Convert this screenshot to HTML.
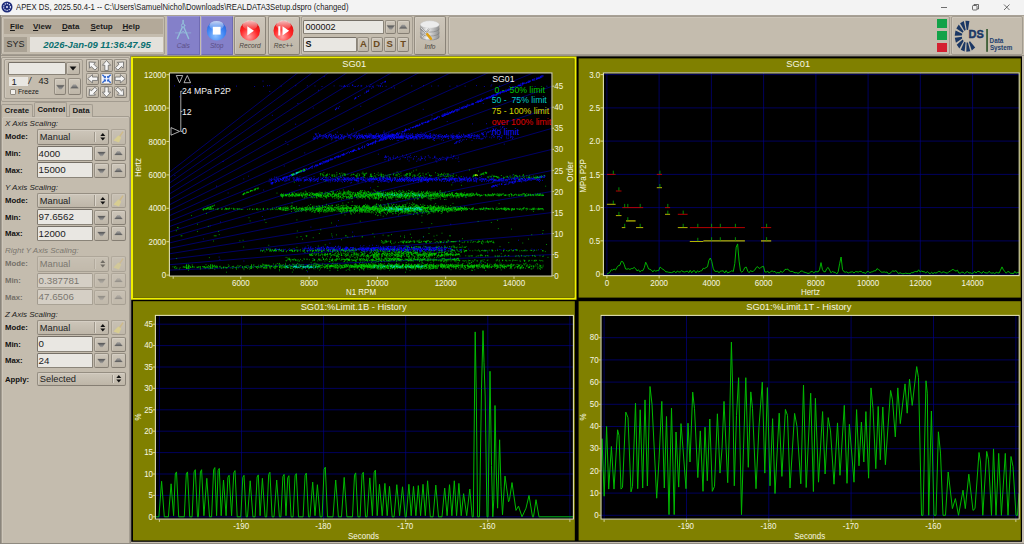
<!DOCTYPE html><html><head><meta charset="utf-8"><title>APEX DS</title><style>
*{box-sizing:border-box;margin:0;padding:0}
html,body{width:1024px;height:544px;overflow:hidden;background:#c4bcae;font-family:"Liberation Sans", Arial, sans-serif;}
.a{position:absolute;white-space:nowrap}
.btn{position:absolute;background:linear-gradient(#cdc6ba,#beb6a8);border:1px solid #958e82;border-bottom-color:#857e73;border-right-color:#8a8378;border-radius:2px;box-shadow:inset 0.5px 0.5px 0 #ddd7cd}
.fld{position:absolute;background:#e9e7e2;border:1px solid #8a8479;border-top-color:#767067;border-left-color:#7c766c;border-radius:1.5px;font-size:9.75px;color:#222;padding-left:0.6px;white-space:nowrap;overflow:hidden}
.grp{position:absolute;border:1px solid #a39c90;border-radius:2px;box-shadow:inset 0.5px 0.5px 0 #d8d2c8}
.lb{position:absolute;font-weight:bold;font-size:7.75px;color:#111;white-space:nowrap}
.hd{position:absolute;font-style:italic;font-size:8px;color:#222;white-space:nowrap}
.dis{opacity:.46}
.tl{position:absolute;font-style:italic;font-size:6.6px;color:#4a4640;text-align:center;white-space:nowrap}
</style></head><body>
<div class="a" style="left:0;top:0;width:1024px;height:15px;background:#f3f3f3"></div>
<svg class="a" style="left:0.8px;top:1px" width="12" height="12" viewBox="0 0 12 12"><circle cx="6" cy="6" r="5.5" fill="#1c2a78"/><circle cx="6" cy="6" r="3.4" fill="none" stroke="#e8ecff" stroke-width="1.1" stroke-dasharray="1.3 0.9"/><circle cx="6" cy="6" r="1" fill="#e8ecff"/></svg>
<div class="a" id="ttl" style="left:15.7px;top:2.4px;font-size:8.4px;color:#1a1a1a;transform:scaleX(0.92);transform-origin:0 0">APEX DS, 2025.50.4-1 -- C:\Users\SamuelNichol\Downloads\REALDATA3Setup.dspro (changed)</div>
<svg class="a" style="left:930px;top:0" width="94" height="15" viewBox="0 0 94 15"><g stroke="#333" stroke-width="0.7" fill="none"><path d="M11 7.5h6"/><rect x="42.5" y="5.5" width="4.5" height="4.5" rx="0.8"/><path d="M44 5.5v-1h4.5v4.5h-1.3"/><path d="M74 4.5l5.5 5.5M79.5 4.5l-5.5 5.5"/></g></svg>
<div class="a" style="left:0;top:15px;width:1024px;height:41px;background:#c4bcae;border-top:1px solid #a8a196;border-bottom:1px solid #9a9388"></div>
<div class="grp" style="left:1px;top:16px;width:164px;height:39px"></div>
<div class="a" style="left:4px;top:19px;width:159px;height:15px;background:#b3a999"></div>
<div class="lb" style="left:10px;top:22px;font-size:8px;color:#1a1a1a"><u>F</u>ile</div>
<div class="lb" style="left:33px;top:22px;font-size:8px;color:#1a1a1a"><u>V</u>iew</div>
<div class="lb" style="left:62px;top:22px;font-size:8px;color:#1a1a1a"><u>D</u>ata</div>
<div class="lb" style="left:90.5px;top:22px;font-size:8px;color:#1a1a1a"><u>S</u>etup</div>
<div class="lb" style="left:122.5px;top:22px;font-size:8px;color:#1a1a1a"><u>H</u>elp</div>
<div class="a" style="left:4px;top:37px;width:23px;height:15px;background:#aaa294;font-size:9px;color:#222;text-align:center;line-height:15px">SYS</div>
<div class="a" style="left:30px;top:37px;width:133px;height:15px;background:#e4e1db;font-size:9.5px;font-weight:bold;font-style:italic;color:#0a7070;line-height:15px;padding-left:13.3px">2026-Jan-09 11:36:47.95</div>
<div class="btn" style="left:167px;top:16px;width:32.5px;height:39px;background:#8480c9;border-color:#9793d4 #6f6bb2 #6f6bb2 #9793d4;border-radius:1px;box-shadow:none"></div>
<div class="tl" style="left:167px;top:41.9px;width:32.5px;color:#5b4f86">Cals</div>
<div class="btn" style="left:200.5px;top:16px;width:32.5px;height:39px;background:#8480c9;border-color:#9793d4 #6f6bb2 #6f6bb2 #9793d4;border-radius:1px;box-shadow:none"></div>
<div class="tl" style="left:200.5px;top:41.9px;width:32.5px;color:#5b4f86">Stop</div>
<div class="btn" style="left:234px;top:16px;width:32px;height:39px;"></div>
<div class="tl" style="left:234px;top:42.3px;width:32px;">Record</div>
<div class="btn" style="left:267.5px;top:16px;width:32px;height:39px;"></div>
<div class="tl" style="left:267.5px;top:42.3px;width:32px;">Rec++</div>
<svg class="a" style="left:167px;top:16px" width="134" height="30" viewBox="167 16 134 30">
<defs>
<radialGradient id="gb" cx="0.45" cy="0.75" r="0.8"><stop offset="0" stop-color="#8cc0ff"/><stop offset="0.55" stop-color="#3f86f4"/><stop offset="1" stop-color="#2258d0"/></radialGradient>
<radialGradient id="gr" cx="0.45" cy="0.8" r="0.8"><stop offset="0" stop-color="#ffa0a0"/><stop offset="0.55" stop-color="#ff2828"/><stop offset="1" stop-color="#dc0808"/></radialGradient>
<linearGradient id="gl" x1="0" y1="0" x2="0" y2="1"><stop offset="0" stop-color="#fff" stop-opacity="0.75"/><stop offset="1" stop-color="#fff" stop-opacity="0.05"/></linearGradient>
</defs>
<g fill="none" stroke="#93c0da" stroke-width="1.35" stroke-linecap="round"><path d="M183.1 20.6v3" stroke-width="1.5"/><circle cx="183.1" cy="25.5" r="1.7" stroke-width="1"/><path d="M182.3 27.2l-4.9 11.4M183.9 27.2l4.7 11.4"/><path d="M175.5 32.9h15.3" stroke-width="0.6"/><path d="M181.3 33.2l1.8-2.2 1.8 2.2" stroke-width="0.7"/></g>
<circle cx="216.6" cy="30.8" r="9.8" fill="url(#gb)"/><ellipse cx="216.6" cy="25.5" rx="7.2" ry="4.6" fill="url(#gl)"/><rect x="212.8" y="26.8" width="7.8" height="7.8" fill="#fff"/>
<circle cx="250" cy="30.8" r="10" fill="url(#gr)"/><ellipse cx="250" cy="25.3" rx="7.4" ry="4.7" fill="url(#gl)"/><path d="M247.3 26.2v9.2l6.6-4.6z" fill="#fff"/>
<circle cx="283.5" cy="30.8" r="10" fill="url(#gr)"/><ellipse cx="283.5" cy="25.3" rx="7.4" ry="4.7" fill="url(#gl)"/><path d="M278.3 26.2h2v9.2h-2zM282.5 26.2v9.2l6.6-4.6z" fill="#fff"/>
</svg>
<div class="grp" style="left:300.5px;top:16px;width:112px;height:39px"></div>
<div class="fld" style="left:303px;top:19.5px;width:80.5px;height:14px;line-height:12px;font-size:9px;color:#111;padding-left:1.4px">000002</div>
<div class="fld" style="left:303px;top:37px;width:53.5px;height:14.5px;line-height:12.5px;font-size:9px;font-weight:bold;color:#111;padding-left:1.6px">S</div>
<svg width="0" height="0" style="position:absolute"><defs><linearGradient id="gd" x1="0" y1="0" x2="0" y2="1"><stop offset="0" stop-color="#505050"/><stop offset="1" stop-color="#9a9a9a"/></linearGradient><linearGradient id="gu" x1="0" y1="0" x2="0" y2="1"><stop offset="0" stop-color="#a2a2a2"/><stop offset="1" stop-color="#565656"/></linearGradient></defs></svg>
<div class="btn" style="left:384.5px;top:19.5px;width:11.5px;height:14px"><svg width="11.5" height="14" style="position:absolute;left:-1px;top:-1px"><polygon points="1.85,5.4 9.65,5.4 6.85,9.3 4.65,9.3" fill="url(#gd)" stroke="#777" stroke-width="0.25" stroke-linejoin="round"/></svg></div>
<div class="btn" style="left:397px;top:19.5px;width:12.5px;height:14px"><svg width="12.5" height="14" style="position:absolute;left:-1px;top:-1px"><polygon points="2.35,8.5 10.15,8.5 7.55,5.0 4.95,5.0" fill="url(#gu)" stroke="#777" stroke-width="0.25" stroke-linejoin="round"/></svg></div>
<div class="btn" style="left:357.3px;top:37px;width:12.2px;height:14.5px;font-size:9.5px;font-weight:bold;color:#6b4a1e;text-align:center;line-height:12.5px">A</div>
<div class="btn" style="left:370.5px;top:37px;width:12.2px;height:14.5px;font-size:9.5px;font-weight:bold;color:#6b4a1e;text-align:center;line-height:12.5px">D</div>
<div class="btn" style="left:383.7px;top:37px;width:12.2px;height:14.5px;font-size:9.5px;font-weight:bold;color:#6b4a1e;text-align:center;line-height:12.5px">S</div>
<div class="btn" style="left:397px;top:37px;width:12.2px;height:14.5px;font-size:9.5px;font-weight:bold;color:#6b4a1e;text-align:center;line-height:12.5px">T</div>
<div class="btn" style="left:414px;top:16px;width:32px;height:39px"></div>
<div class="tl" style="left:414px;top:42.5px;width:32px">Info</div>
<svg class="a" style="left:418px;top:18px" width="24" height="26" viewBox="418 18 24 26">
<defs><linearGradient id="cy" x1="0" y1="0" x2="1" y2="0"><stop offset="0" stop-color="#9a9a9a"/><stop offset="0.35" stop-color="#f2f2f2"/><stop offset="1" stop-color="#8c8c8c"/></linearGradient></defs>
<path d="M420.3 24.5v12.5a9.5 3.6 0 0 0 19 0v-12.5z" fill="url(#cy)"/>
<g fill="none" stroke="#777" stroke-width="0.5"><path d="M420.3 28.5a9.5 3.6 0 0 0 19 0M420.3 32.5a9.5 3.6 0 0 0 19 0M420.3 36.5a9.5 3.6 0 0 0 19 0"/></g>
<ellipse cx="429.8" cy="24.5" rx="9.5" ry="3.7" fill="#ececec" stroke="#c8c8c8" stroke-width="0.4"/>
<path d="M421 28l9 9M422 37l7-8" stroke="#8b8b8b" stroke-width="1.6"/><path d="M421 28l9 9M422 37l7-8" stroke="#e8e8e8" stroke-width="0.8"/>
<path d="M427.3 34.2l3.6 4.6" stroke="#e0a010" stroke-width="2.6" stroke-linecap="round"/>
</svg>
<div class="grp" style="left:447.5px;top:16px;width:502.2px;height:39px"></div>
<div class="a" style="left:937.2px;top:18.9px;width:9.9px;height:9.2px;background:#12a248"></div>
<div class="a" style="left:937.2px;top:30.6px;width:9.9px;height:9.2px;background:#12a248"></div>
<div class="a" style="left:937.2px;top:42.5px;width:9.9px;height:9.2px;background:#d42030"></div>
<div class="grp" style="left:950.7px;top:16px;width:72px;height:39px"></div>
<svg class="a" style="left:952px;top:17px" width="70" height="37" viewBox="952 17 70 37"><polygon fill="#1b3764" points="968.0,30.0 969.4,20.9 965.4,20.7 966.6,29.8"/><polygon fill="#1b3764" points="965.7,30.0 963.8,21.1 960.1,23.3 964.4,30.7"/><polygon fill="#1b3764" points="963.6,31.4 958.8,24.6 956.3,28.6 962.7,32.7"/><polygon fill="#1b3764" points="962.3,33.8 955.5,30.6 954.7,35.7 961.9,35.5"/><polygon fill="#1b3764" points="961.9,36.8 954.8,37.8 955.9,42.8 962.2,38.5"/><polygon fill="#1b3764" points="962.7,39.6 956.7,44.7 959.4,48.5 963.6,41.0"/><polygon fill="#1b3764" points="964.3,41.7 960.8,49.7 964.6,51.5 965.6,42.4"/><polygon fill="#1b3764" points="966.6,42.6 966.3,51.8 970.3,51.2 967.9,42.5"/><polygon fill="#1b3764" points="968.9,42.1 971.8,50.5 975.2,47.6 970.0,41.2"/><text x="968.6" y="38.4" font-size="10.9" font-weight="bold" fill="#1b3764" stroke="#1b3764" stroke-width="0.45">DS</text><rect x="986.2" y="29" width="1.7" height="22.8" fill="#35582f"/><text x="989.6" y="42.6" font-size="6.3" font-weight="bold" fill="#22406e">Data</text><text x="989.9" y="50.3" font-size="6.3" font-weight="bold" fill="#22406e">System</text></svg>
<div class="grp" style="left:1px;top:56.5px;width:128.5px;height:45px"></div>
<div class="grp" style="left:3.5px;top:59px;width:79px;height:39.5px"></div>
<div class="fld" style="left:7.5px;top:62px;width:58.5px;height:12.5px"></div>
<div class="btn" style="left:65.5px;top:62px;width:14px;height:12.5px"><svg width="14" height="12.5" style="position:absolute;left:-1px;top:-1px"><polygon points="3.6,4.6 10.4,4.6 7,8.6" fill="#111"/></svg></div>
<div class="a" style="left:9px;top:77px;width:18.5px;height:8.5px;background:#e9e7e2;font-size:9.5px;line-height:9px;color:#222;padding-left:2.5px">1</div>
<div class="a" style="left:28.5px;top:76px;font-size:9px;font-style:italic;color:#222">/</div>
<div class="a" style="left:38.5px;top:76.2px;font-size:9.2px;color:#222">43</div>
<div class="a" style="left:9.8px;top:88.6px;width:6.2px;height:6.2px;background:#f2f0ec;border:0.6px solid #8f897e;border-radius:1px"></div>
<div class="a" style="left:18px;top:87.8px;font-size:6.7px;color:#222">Freeze</div>
<div class="btn" style="left:53.6px;top:77.9px;width:12.8px;height:17.5px"><svg width="12.8" height="17.5" style="position:absolute;left:-1px;top:-1px"><polygon points="2.5000000000000004,7.15 10.3,7.15 7.5,11.05 5.300000000000001,11.05" fill="url(#gd)" stroke="#777" stroke-width="0.25" stroke-linejoin="round"/></svg></div>
<div class="btn" style="left:67.5px;top:77.9px;width:13px;height:17.5px"><svg width="13" height="17.5" style="position:absolute;left:-1px;top:-1px"><polygon points="2.6,10.25 10.4,10.25 7.8,6.75 5.2,6.75" fill="url(#gu)" stroke="#777" stroke-width="0.25" stroke-linejoin="round"/></svg></div>
<div class="btn" style="left:86.2px;top:59.2px;width:12.9px;height:12.5px"></div>
<div class="btn" style="left:100.1px;top:59.2px;width:12.9px;height:12.5px"></div>
<div class="btn" style="left:113.7px;top:59.2px;width:12.9px;height:12.5px"></div>
<div class="btn" style="left:86.2px;top:72.5px;width:12.9px;height:12.5px"></div>
<div class="btn" style="left:100.1px;top:72.5px;width:12.9px;height:12.5px"></div>
<div class="btn" style="left:113.7px;top:72.5px;width:12.9px;height:12.5px"></div>
<div class="btn" style="left:86.2px;top:85.7px;width:12.9px;height:12.5px"></div>
<div class="btn" style="left:100.1px;top:85.7px;width:12.9px;height:12.5px"></div>
<div class="btn" style="left:113.7px;top:85.7px;width:12.9px;height:12.5px"></div>
<svg class="a" style="left:0;top:0" width="130" height="102" viewBox="0 0 130 102"><g transform="translate(92.65 65.45) rotate(-135.0)"><path d="M-4.9 -1.7H0.2V-4.1L4.9 0L0.2 4.1V1.7H-4.9z" fill="#f6f6f6" stroke="#5c5c5c" stroke-width="0.7" stroke-linejoin="round"/></g><g transform="translate(106.55 65.45) rotate(-90.0)"><path d="M-5.0 -1.7H0.2V-4.1L5.0 0L0.2 4.1V1.7H-5.0z" fill="#f6f6f6" stroke="#5c5c5c" stroke-width="0.7" stroke-linejoin="round"/></g><g transform="translate(120.15 65.45) rotate(-45.0)"><path d="M-4.9 -1.7H0.2V-4.1L4.9 0L0.2 4.1V1.7H-4.9z" fill="#f6f6f6" stroke="#5c5c5c" stroke-width="0.7" stroke-linejoin="round"/></g><g transform="translate(92.65 78.75) rotate(180.0)"><path d="M-5.0 -1.7H0.2V-4.1L5.0 0L0.2 4.1V1.7H-5.0z" fill="#f6f6f6" stroke="#5c5c5c" stroke-width="0.7" stroke-linejoin="round"/></g><rect x="101.95" y="74.35" width="9.2" height="8.8" fill="#f4f6ff"/><path d="M102.35 74.75L105.35 77.55" stroke="#2b62c8" stroke-width="1.3"/><path d="M105.55 75.95v1.8h-1.8" fill="none" stroke="#2b62c8" stroke-width="0.9"/><path d="M102.35 82.75L105.35 79.95" stroke="#2b62c8" stroke-width="1.3"/><path d="M105.55 81.55v-1.8h-1.8" fill="none" stroke="#2b62c8" stroke-width="0.9"/><path d="M110.75 74.75L107.75 77.55" stroke="#2b62c8" stroke-width="1.3"/><path d="M107.55 75.95v1.8h1.8" fill="none" stroke="#2b62c8" stroke-width="0.9"/><path d="M110.75 82.75L107.75 79.95" stroke="#2b62c8" stroke-width="1.3"/><path d="M107.55 81.55v-1.8h1.8" fill="none" stroke="#2b62c8" stroke-width="0.9"/><g transform="translate(120.15 78.75) rotate(0.0)"><path d="M-5.0 -1.7H0.2V-4.1L5.0 0L0.2 4.1V1.7H-5.0z" fill="#f6f6f6" stroke="#5c5c5c" stroke-width="0.7" stroke-linejoin="round"/></g><g transform="translate(92.65 91.95) rotate(135.0)"><path d="M-4.9 -1.7H0.2V-4.1L4.9 0L0.2 4.1V1.7H-4.9z" fill="#f6f6f6" stroke="#5c5c5c" stroke-width="0.7" stroke-linejoin="round"/></g><g transform="translate(106.55 91.95) rotate(90.0)"><path d="M-5.0 -1.7H0.2V-4.1L5.0 0L0.2 4.1V1.7H-5.0z" fill="#f6f6f6" stroke="#5c5c5c" stroke-width="0.7" stroke-linejoin="round"/></g><g transform="translate(120.15 91.95) rotate(45.0)"><path d="M-4.9 -1.7H0.2V-4.1L4.9 0L0.2 4.1V1.7H-4.9z" fill="#f6f6f6" stroke="#5c5c5c" stroke-width="0.7" stroke-linejoin="round"/></g></svg>
<div class="a" style="left:1px;top:116px;width:128.5px;height:430px;border:1px solid #a39c90;border-radius:2px;box-shadow:inset 0.5px 0.5px 0 #d8d2c8"></div>
<div class="a" style="left:1px;top:103.5px;width:31.5px;height:13px;border:1px solid #a39c90;border-bottom:none;border-radius:2px 2px 0 0;background:#c4bcae;font-size:7.9px;font-weight:bold;color:#1a1a1a;line-height:11.5px;padding-left:2.5px">Create</div>
<div class="a" style="left:68.5px;top:103.5px;width:24.5px;height:13px;border:1px solid #a39c90;border-bottom:none;border-radius:2px 2px 0 0;background:#c4bcae;font-size:7.9px;font-weight:bold;color:#1a1a1a;line-height:11.5px;padding-left:3px">Data</div>
<div class="a" style="left:33.8px;top:102px;width:33.5px;height:15.2px;border:1px solid #a39c90;border-bottom:none;border-radius:2px 2px 0 0;background:#c4bcae;font-size:7.75px;font-weight:bold;color:#111;line-height:13.5px;padding-left:2.7px">Control</div>
<div class="hd" style="left:5px;top:119px">X Axis Scaling:</div>
<div class="lb" style="left:5px;top:132.2px">Mode:</div>
<div class="btn" style="left:37px;top:129px;width:72px;height:15.5px;font-size:9.3px;color:#222;line-height:15px;padding-left:1.8px">Manual<div style="position:absolute;left:56.3px;top:1.5px;width:0;height:10.5px;border-left:0.6px solid #9d968a;border-right:0.6px solid #ddd7cd"></div><svg width="8" height="10" style="position:absolute;left:60.5px;top:2px"><polygon points="1.3,4 6.3,4 3.8,1" fill="#111"/><polygon points="1.3,5.6 6.3,5.6 3.8,8.6" fill="#111"/></svg></div>
<div class="btn" style="left:110.5px;top:129px;width:15px;height:15.5px;opacity:0.55"><svg width="15" height="15.5" style="position:absolute;left:-1px;top:-1px"><path d="M11.4 2.2l1.2 0.8-3.6 5.2-1.2-0.8z" fill="#d9b96a"/><path d="M7.3 6.4l2.9 2-2.2 5-5.6-2z" fill="#e9dc7a"/></svg></div>
<div class="lb" style="left:5px;top:149.0px">Min:</div>
<div class="fld" style="left:37px;top:145.6px;width:56px;height:15.6px;line-height:14px">4000</div>
<div class="btn" style="left:94px;top:146.0px;width:15px;height:15px"><svg width="15" height="15" style="position:absolute;left:-1px;top:-1px"><polygon points="3.6,5.9 11.4,5.9 8.6,9.8 6.4,9.8" fill="url(#gd)" stroke="#777" stroke-width="0.25" stroke-linejoin="round"/></svg></div>
<div class="btn" style="left:110.5px;top:146.0px;width:15px;height:15px"><svg width="15" height="15" style="position:absolute;left:-1px;top:-1px"><polygon points="3.6,9.0 11.4,9.0 8.8,5.5 6.2,5.5" fill="url(#gu)" stroke="#777" stroke-width="0.25" stroke-linejoin="round"/></svg></div>
<div class="lb" style="left:5px;top:165.6px">Max:</div>
<div class="fld" style="left:37px;top:162.2px;width:56px;height:15.6px;line-height:14px">15000</div>
<div class="btn" style="left:94px;top:162.6px;width:15px;height:15px"><svg width="15" height="15" style="position:absolute;left:-1px;top:-1px"><polygon points="3.6,5.9 11.4,5.9 8.6,9.8 6.4,9.8" fill="url(#gd)" stroke="#777" stroke-width="0.25" stroke-linejoin="round"/></svg></div>
<div class="btn" style="left:110.5px;top:162.6px;width:15px;height:15px"><svg width="15" height="15" style="position:absolute;left:-1px;top:-1px"><polygon points="3.6,9.0 11.4,9.0 8.8,5.5 6.2,5.5" fill="url(#gu)" stroke="#777" stroke-width="0.25" stroke-linejoin="round"/></svg></div>
<div class="hd" style="left:5px;top:182.5px">Y Axis Scaling:</div>
<div class="lb" style="left:5px;top:195.7px">Mode:</div>
<div class="btn" style="left:37px;top:192.5px;width:72px;height:15.5px;font-size:9.3px;color:#222;line-height:15px;padding-left:1.8px">Manual<div style="position:absolute;left:56.3px;top:1.5px;width:0;height:10.5px;border-left:0.6px solid #9d968a;border-right:0.6px solid #ddd7cd"></div><svg width="8" height="10" style="position:absolute;left:60.5px;top:2px"><polygon points="1.3,4 6.3,4 3.8,1" fill="#111"/><polygon points="1.3,5.6 6.3,5.6 3.8,8.6" fill="#111"/></svg></div>
<div class="btn" style="left:110.5px;top:192.5px;width:15px;height:15.5px;opacity:0.55"><svg width="15" height="15.5" style="position:absolute;left:-1px;top:-1px"><path d="M11.4 2.2l1.2 0.8-3.6 5.2-1.2-0.8z" fill="#d9b96a"/><path d="M7.3 6.4l2.9 2-2.2 5-5.6-2z" fill="#e9dc7a"/></svg></div>
<div class="lb" style="left:5px;top:212.5px">Min:</div>
<div class="fld" style="left:37px;top:209.1px;width:56px;height:15.6px;line-height:14px">97.6562</div>
<div class="btn" style="left:94px;top:209.5px;width:15px;height:15px"><svg width="15" height="15" style="position:absolute;left:-1px;top:-1px"><polygon points="3.6,5.9 11.4,5.9 8.6,9.8 6.4,9.8" fill="url(#gd)" stroke="#777" stroke-width="0.25" stroke-linejoin="round"/></svg></div>
<div class="btn" style="left:110.5px;top:209.5px;width:15px;height:15px"><svg width="15" height="15" style="position:absolute;left:-1px;top:-1px"><polygon points="3.6,9.0 11.4,9.0 8.8,5.5 6.2,5.5" fill="url(#gu)" stroke="#777" stroke-width="0.25" stroke-linejoin="round"/></svg></div>
<div class="lb" style="left:5px;top:229.1px">Max:</div>
<div class="fld" style="left:37px;top:225.7px;width:56px;height:15.6px;line-height:14px">12000</div>
<div class="btn" style="left:94px;top:226.1px;width:15px;height:15px"><svg width="15" height="15" style="position:absolute;left:-1px;top:-1px"><polygon points="3.6,5.9 11.4,5.9 8.6,9.8 6.4,9.8" fill="url(#gd)" stroke="#777" stroke-width="0.25" stroke-linejoin="round"/></svg></div>
<div class="btn" style="left:110.5px;top:226.1px;width:15px;height:15px"><svg width="15" height="15" style="position:absolute;left:-1px;top:-1px"><polygon points="3.6,9.0 11.4,9.0 8.8,5.5 6.2,5.5" fill="url(#gu)" stroke="#777" stroke-width="0.25" stroke-linejoin="round"/></svg></div>
<div class="hd dis" style="left:5px;top:246px">Right Y Axis Scaling:</div>
<div class="lb dis" style="left:5px;top:259.2px">Mode:</div>
<div class="btn dis" style="left:37px;top:256px;width:72px;height:15.5px;font-size:9.3px;color:#222;line-height:15px;padding-left:1.8px">Manual<div style="position:absolute;left:56.3px;top:1.5px;width:0;height:10.5px;border-left:0.6px solid #9d968a;border-right:0.6px solid #ddd7cd"></div><svg width="8" height="10" style="position:absolute;left:60.5px;top:2px"><polygon points="1.3,4 6.3,4 3.8,1" fill="#111"/><polygon points="1.3,5.6 6.3,5.6 3.8,8.6" fill="#111"/></svg></div>
<div class="btn dis" style="left:110.5px;top:256px;width:15px;height:15.5px;opacity:0.4"><svg width="15" height="15.5" style="position:absolute;left:-1px;top:-1px"><path d="M11.4 2.2l1.2 0.8-3.6 5.2-1.2-0.8z" fill="#d9b96a"/><path d="M7.3 6.4l2.9 2-2.2 5-5.6-2z" fill="#e9dc7a"/></svg></div>
<div class="lb dis" style="left:5px;top:276.0px">Min:</div>
<div class="fld dis" style="left:37px;top:272.6px;width:56px;height:15.6px;line-height:14px">0.387781</div>
<div class="btn dis" style="left:94px;top:273.0px;width:15px;height:15px"><svg width="15" height="15" style="position:absolute;left:-1px;top:-1px"><polygon points="3.6,5.9 11.4,5.9 8.6,9.8 6.4,9.8" fill="url(#gd)" stroke="#777" stroke-width="0.25" stroke-linejoin="round"/></svg></div>
<div class="btn dis" style="left:110.5px;top:273.0px;width:15px;height:15px"><svg width="15" height="15" style="position:absolute;left:-1px;top:-1px"><polygon points="3.6,9.0 11.4,9.0 8.8,5.5 6.2,5.5" fill="url(#gu)" stroke="#777" stroke-width="0.25" stroke-linejoin="round"/></svg></div>
<div class="lb dis" style="left:5px;top:292.6px">Max:</div>
<div class="fld dis" style="left:37px;top:289.20000000000005px;width:56px;height:15.6px;line-height:14px">47.6506</div>
<div class="btn dis" style="left:94px;top:289.6px;width:15px;height:15px"><svg width="15" height="15" style="position:absolute;left:-1px;top:-1px"><polygon points="3.6,5.9 11.4,5.9 8.6,9.8 6.4,9.8" fill="url(#gd)" stroke="#777" stroke-width="0.25" stroke-linejoin="round"/></svg></div>
<div class="btn dis" style="left:110.5px;top:289.6px;width:15px;height:15px"><svg width="15" height="15" style="position:absolute;left:-1px;top:-1px"><polygon points="3.6,9.0 11.4,9.0 8.8,5.5 6.2,5.5" fill="url(#gu)" stroke="#777" stroke-width="0.25" stroke-linejoin="round"/></svg></div>
<div class="hd" style="left:5px;top:309.5px">Z Axis Scaling:</div>
<div class="lb" style="left:5px;top:322.7px">Mode:</div>
<div class="btn" style="left:37px;top:319.5px;width:72px;height:15.5px;font-size:9.3px;color:#222;line-height:15px;padding-left:1.8px">Manual<div style="position:absolute;left:56.3px;top:1.5px;width:0;height:10.5px;border-left:0.6px solid #9d968a;border-right:0.6px solid #ddd7cd"></div><svg width="8" height="10" style="position:absolute;left:60.5px;top:2px"><polygon points="1.3,4 6.3,4 3.8,1" fill="#111"/><polygon points="1.3,5.6 6.3,5.6 3.8,8.6" fill="#111"/></svg></div>
<div class="btn" style="left:110.5px;top:319.5px;width:15px;height:15.5px;opacity:0.55"><svg width="15" height="15.5" style="position:absolute;left:-1px;top:-1px"><path d="M11.4 2.2l1.2 0.8-3.6 5.2-1.2-0.8z" fill="#d9b96a"/><path d="M7.3 6.4l2.9 2-2.2 5-5.6-2z" fill="#e9dc7a"/></svg></div>
<div class="lb" style="left:5px;top:339.5px">Min:</div>
<div class="fld" style="left:37px;top:336.1px;width:56px;height:15.6px;line-height:14px">0</div>
<div class="btn" style="left:94px;top:336.5px;width:15px;height:15px"><svg width="15" height="15" style="position:absolute;left:-1px;top:-1px"><polygon points="3.6,5.9 11.4,5.9 8.6,9.8 6.4,9.8" fill="url(#gd)" stroke="#777" stroke-width="0.25" stroke-linejoin="round"/></svg></div>
<div class="btn" style="left:110.5px;top:336.5px;width:15px;height:15px"><svg width="15" height="15" style="position:absolute;left:-1px;top:-1px"><polygon points="3.6,9.0 11.4,9.0 8.8,5.5 6.2,5.5" fill="url(#gu)" stroke="#777" stroke-width="0.25" stroke-linejoin="round"/></svg></div>
<div class="lb" style="left:5px;top:356.1px">Max:</div>
<div class="fld" style="left:37px;top:352.70000000000005px;width:56px;height:15.6px;line-height:14px">24</div>
<div class="btn" style="left:94px;top:353.1px;width:15px;height:15px"><svg width="15" height="15" style="position:absolute;left:-1px;top:-1px"><polygon points="3.6,5.9 11.4,5.9 8.6,9.8 6.4,9.8" fill="url(#gd)" stroke="#777" stroke-width="0.25" stroke-linejoin="round"/></svg></div>
<div class="btn" style="left:110.5px;top:353.1px;width:15px;height:15px"><svg width="15" height="15" style="position:absolute;left:-1px;top:-1px"><polygon points="3.6,9.0 11.4,9.0 8.8,5.5 6.2,5.5" fill="url(#gu)" stroke="#777" stroke-width="0.25" stroke-linejoin="round"/></svg></div>
<div class="lb" style="left:5px;top:375px">Apply:</div>
<div class="btn" style="left:37px;top:372px;width:88.5px;height:13.6px;font-size:9.3px;color:#222;line-height:12px;padding-left:1.8px">Selected<div style="position:absolute;left:74px;top:1.5px;width:0;height:8px;border-left:0.6px solid #9d968a;border-right:0.6px solid #ddd7cd"></div><svg width="8" height="10" style="position:absolute;left:77px;top:0.8px"><polygon points="1.3,4 6.3,4 3.8,1" fill="#111"/><polygon points="1.3,5.6 6.3,5.6 3.8,8.6" fill="#111"/></svg></div>
<div class="a" style="left:129.5px;top:56px;width:1px;height:488px;background:#8e877c"></div>
<div class="a" style="left:0;top:543.2px;width:1024px;height:1px;background:#8f8a80"></div>
<div class="a" style="left:0;top:15px;width:1px;height:529px;background:#8a857c"></div>
<svg class="a" style="left:0;top:0" width="1024" height="544" viewBox="0 0 1024 544" font-family='"Liberation Sans", Arial, sans-serif'><rect x="131.2" y="56.3" width="890.8" height="485.5" fill="#000"/><rect x="131" y="56.5" width="445.5" height="243.2" fill="#f0f000"/><rect x="133" y="58.5" width="441.5" height="239.2" fill="#3a3a00"/><rect x="133" y="58.5" width="440.9" height="238.6" fill="#808000"/><rect x="578.6" y="58.4" width="442.2" height="239.2" fill="#808000"/><rect x="133" y="301.2" width="441.8" height="239.3" fill="#808000"/><rect x="578.6" y="301.2" width="442.2" height="239.3" fill="#808000"/><rect x="169" y="72.5" width="383.4" height="204.0" fill="#000"/><rect x="603" y="72.5" width="416.6" height="203.5" fill="#000"/><rect x="155" y="315" width="418.79999999999995" height="204.5" fill="#000"/><rect x="600.6" y="315" width="419.0" height="204.5" fill="#000"/><clipPath id="c1"><rect x="169.8" y="73.3" width="381.79999999999995" height="202.4"/></clipPath><g clip-path="url(#c1)"><path d="M168.4 270.2L552.2 254.6M168.4 264.8L552.2 233.5M168.4 259.4L552.2 212.5M168.4 254.0L552.2 191.4M168.4 248.6L552.2 170.4M168.4 243.2L552.2 149.3M168.4 237.8L552.2 128.3M168.4 232.4L552.2 107.3M168.4 227.0L552.2 86.2M168.4 221.6L552.2 65.2M168.4 216.2L552.2 44.1M168.4 210.8L552.2 23.1M168.4 205.4L552.2 2.1M168.4 200.0L552.2 -19.0M168.4 194.6L552.2 -40.0M168.4 189.2L552.2 -61.1M168.4 183.8L552.2 -82.1M168.4 178.4L552.2 -103.2M168.4 173.0L552.2 -124.2" stroke="#0000ac" stroke-width="0.6" fill="none"/><path d="M382.0 249.6h.8M412.8 249.1h.8M383.8 248.9h.8M391.8 250.3h.8M433.6 250.0h.8M381.6 248.4h.8M337.6 247.8h.8M415.5 249.0h.8M385.3 249.3h.8M414.0 246.8h.8M332.6 247.3h.8M398.8 250.7h.8M386.6 249.4h.8M354.8 248.0h.8M330.6 249.5h.8M304.1 248.1h.8M401.6 250.6h.8M342.5 250.7h.8M437.6 249.1h.8M397.4 247.7h.8M438.9 249.0h.8M340.9 250.4h.8M439.6 247.8h.8M327.1 246.7h.8M326.7 250.7h.8M402.5 250.8h.8M384.3 250.0h.8M383.0 249.0h.8M307.6 245.4h.8M390.8 249.4h.8M308.9 250.0h.8M431.0 249.9h.8M318.8 248.0h.8M448.9 248.7h.8M407.0 248.8h.8M352.3 249.1h.8M387.1 247.9h.8M374.7 249.6h.8M391.0 249.4h.8M387.5 248.3h.8M392.2 248.9h.8M429.9 249.8h.8M367.0 248.8h.8M351.0 249.6h.8M448.6 248.9h.8M381.8 250.5h.8M416.2 248.6h.8M363.5 251.4h.8M345.8 248.8h.8M367.4 249.7h.8M427.6 249.5h.8M361.5 250.5h.8M321.0 249.1h.8M422.0 250.7h.8M331.6 247.7h.8M330.2 249.7h.8M401.2 248.3h.8M329.5 248.6h.8M380.4 249.3h.8M373.7 249.7h.8M406.6 249.2h.8M449.9 250.1h.8M432.7 249.5h.8M426.2 249.6h.8M331.7 248.9h.8M394.0 249.6h.8M381.5 248.9h.8M446.4 247.8h.8M364.4 250.2h.8M378.4 248.1h.8M388.2 246.3h.8M402.9 250.1h.8M413.1 249.1h.8M422.5 247.7h.8M338.6 249.3h.8M421.6 248.5h.8M438.7 249.8h.8M344.3 250.6h.8M360.0 247.8h.8M409.6 248.9h.8M365.5 248.2h.8M444.4 245.6h.8M420.4 249.9h.8M419.5 251.3h.8M328.1 247.3h.8M369.0 248.1h.8M413.4 247.8h.8M307.5 252.0h.8M306.4 248.7h.8M403.3 248.4h.8M438.2 248.8h.8M394.3 249.7h.8M431.0 247.8h.8M309.0 249.8h.8M435.5 247.0h.8M322.7 246.4h.8M345.3 248.0h.8M405.3 249.5h.8M403.7 249.2h.8M342.4 248.2h.8M382.7 246.4h.8M450.5 248.8h.8M374.3 249.7h.8M311.2 250.1h.8M436.5 248.4h.8M420.0 247.9h.8M419.7 250.0h.8M418.6 249.5h.8M319.4 250.2h.8M390.1 249.1h.8M427.2 249.6h.8M402.5 249.7h.8M428.6 248.8h.8M406.8 248.5h.8M417.3 248.6h.8M414.2 250.0h.8M381.4 249.5h.8M431.9 250.3h.8M380.7 249.0h.8M428.1 249.9h.8M441.4 248.8h.8M437.5 252.6h.8M318.9 248.1h.8M339.0 250.2h.8M363.7 247.8h.8M363.5 245.6h.8M406.0 250.7h.8M352.8 247.4h.8M355.3 248.5h.8M335.0 246.5h.8M436.3 247.3h.8M356.3 249.1h.8M369.5 251.2h.8M334.2 248.0h.8M396.2 249.1h.8M364.9 248.9h.8M394.5 247.8h.8M378.6 248.5h.8M438.2 248.7h.8M442.0 247.8h.8M387.0 247.2h.8M420.0 251.7h.8M332.8 248.5h.8M434.9 247.9h.8M393.0 250.1h.8M409.0 247.4h.8M385.4 248.5h.8M407.4 249.8h.8M384.0 249.5h.8M345.6 247.9h.8M406.5 247.7h.8M393.6 248.6h.8M433.2 247.9h.8M377.6 247.6h.8M434.7 249.6h.8M308.0 248.4h.8M322.4 250.0h.8M407.5 248.5h.8M403.6 249.0h.8M432.9 247.8h.8M363.2 249.9h.8M337.6 249.7h.8M416.0 252.6h.8M362.5 248.9h.8M387.4 250.8h.8M439.2 246.7h.8M436.2 249.5h.8M429.1 249.7h.8M414.8 249.3h.8M310.1 247.5h.8M411.1 248.3h.8M423.4 253.4h.8M420.0 248.3h.8M423.5 248.8h.8M430.1 249.8h.8M407.4 251.1h.8M380.6 248.4h.8M432.6 250.0h.8M304.7 252.7h.8M405.6 250.1h.8M346.3 249.9h.8M351.9 247.9h.8M443.8 249.4h.8M399.0 248.9h.8M400.8 247.6h.8M441.8 250.0h.8M445.2 249.4h.8M436.9 247.8h.8M344.2 248.8h.8M389.3 249.4h.8M390.8 247.9h.8M388.4 248.5h.8M358.4 249.6h.8M408.4 249.9h.8M313.3 248.4h.8M342.0 248.8h.8M387.6 248.8h.8M320.3 247.9h.8M378.3 251.4h.8M328.5 247.6h.8M373.7 248.1h.8M305.4 247.2h.8M408.5 251.4h.8M350.1 247.9h.8M345.5 248.1h.8M435.4 250.0h.8M350.5 251.3h.8M426.8 247.1h.8M354.7 251.0h.8M391.8 248.3h.8M358.1 248.7h.8M416.5 249.5h.8M360.7 249.4h.8M414.3 250.9h.8M370.1 250.0h.8M320.6 248.5h.8M406.8 248.0h.8M423.2 249.5h.8M399.4 247.4h.8M406.1 250.1h.8M371.3 249.4h.8M408.1 250.4h.8M439.2 248.0h.8M412.7 249.1h.8M406.9 249.2h.8M431.6 252.6h.8M449.9 248.5h.8M307.5 250.2h.8M420.6 248.7h.8M420.0 247.1h.8M349.5 248.8h.8M441.0 251.4h.8M359.6 249.4h.8M375.0 247.6h.8M328.4 249.6h.8M379.0 249.5h.8M438.8 250.3h.8M372.6 248.3h.8M424.5 251.3h.8M389.3 249.0h.8M348.5 249.1h.8M439.8 249.7h.8M306.4 250.6h.8M316.0 250.2h.8M409.1 249.6h.8M425.5 250.1h.8M406.8 250.8h.8M431.0 249.8h.8M445.2 249.2h.8M365.8 248.4h.8M329.5 251.0h.8M425.2 249.2h.8M387.6 249.8h.8M389.8 249.4h.8M392.8 247.9h.8M360.4 248.7h.8M417.3 250.8h.8M403.9 248.8h.8M436.6 251.1h.8M395.7 250.3h.8M444.6 249.9h.8M328.5 248.4h.8M403.0 250.5h.8M397.2 249.4h.8M370.5 248.8h.8M318.0 250.7h.8M367.4 250.5h.8M393.8 248.4h.8M357.2 248.9h.8M426.7 247.8h.8M399.8 250.2h.8M361.0 249.2h.8M398.7 250.0h.8M402.6 250.2h.8M375.2 248.7h.8M421.9 249.0h.8M388.9 251.6h.8M423.7 249.1h.8M359.5 248.1h.8M387.3 248.7h.8M315.2 247.5h.8M352.4 249.9h.8M407.9 249.7h.8M400.9 247.9h.8M399.4 248.2h.8M355.8 249.6h.8M374.1 248.3h.8M347.1 247.9h.8M435.2 249.6h.8M380.4 250.2h.8M339.1 248.6h.8M371.6 249.2h.8M386.1 249.7h.8M318.9 248.7h.8M419.7 247.2h.8M419.8 250.7h.8M364.0 249.3h.8M345.4 251.3h.8M441.9 250.9h.8M418.5 247.8h.8M367.4 248.8h.8M394.8 247.0h.8M396.5 250.1h.8M433.4 251.0h.8M328.0 247.4h.8M344.7 250.1h.8M415.5 248.3h.8M394.3 251.3h.8M413.5 247.6h.8M388.6 250.2h.8M418.6 249.6h.8M399.4 249.2h.8M388.0 247.0h.8M419.0 250.7h.8M353.1 247.7h.8M372.2 245.2h.8M430.4 248.0h.8M416.0 248.3h.8M310.5 246.7h.8M356.2 250.4h.8M433.0 248.4h.8M436.2 248.2h.8M378.8 249.1h.8M330.9 247.3h.8M420.1 248.0h.8M382.4 248.1h.8M370.7 249.0h.8M385.2 248.6h.8M361.0 250.7h.8M326.9 250.5h.8M380.0 246.5h.8M339.4 248.1h.8M380.8 248.0h.8M312.3 249.2h.8M332.6 250.9h.8M397.5 248.8h.8M362.1 249.2h.8M383.3 249.7h.8M430.0 246.8h.8M432.4 250.8h.8M413.8 249.0h.8M365.6 248.0h.8M361.5 248.0h.8M391.8 248.4h.8M332.3 248.1h.8M346.7 247.3h.8M344.6 248.2h.8M413.5 248.6h.8M371.1 247.9h.8M387.0 248.7h.8M302.6 249.8h.8M363.4 248.4h.8M333.4 250.1h.8M306.8 248.7h.8M402.8 248.9h.8M412.6 248.7h.8M339.9 249.1h.8M371.7 248.5h.8M373.4 250.0h.8M362.4 248.6h.8M414.5 249.4h.8M395.7 248.8h.8M366.5 247.1h.8M341.2 249.8h.8M316.8 250.0h.8M346.5 247.5h.8M383.9 249.8h.8M420.8 251.1h.8M392.9 249.8h.8M385.8 246.8h.8M358.1 249.0h.8M317.7 248.3h.8M381.3 249.2h.8M405.0 248.2h.8M303.5 250.1h.8M429.5 250.9h.8M396.9 249.4h.8M445.2 247.8h.8M323.2 249.7h.8M345.8 247.8h.8M404.1 248.4h.8M377.1 247.8h.8M417.6 248.8h.8M325.8 247.1h.8M409.1 247.8h.8M360.9 247.8h.8M387.1 248.0h.8M431.0 250.0h.8M394.7 249.8h.8M368.2 247.6h.8M416.7 248.8h.8M335.2 249.7h.8M450.8 252.3h.8M425.3 250.3h.8M427.5 247.9h.8M359.0 250.1h.8M333.7 250.3h.8M321.2 247.7h.8M350.8 247.5h.8M420.9 249.5h.8M379.8 248.2h.8M425.3 246.7h.8M322.9 247.6h.8M334.5 249.5h.8M307.8 250.2h.8M386.1 248.3h.8M334.5 248.3h.8M371.1 251.0h.8M337.2 249.2h.8M417.3 249.6h.8M326.2 248.3h.8M380.9 249.1h.8M428.0 250.4h.8M366.3 249.6h.8M429.4 249.2h.8M367.6 250.1h.8M316.0 251.3h.8M442.5 250.7h.8M345.0 248.4h.8M435.4 248.7h.8M310.5 248.3h.8M362.4 247.0h.8M367.4 250.3h.8M365.5 251.1h.8M317.5 249.8h.8M373.3 248.9h.8M363.8 252.9h.8M408.5 247.4h.8M367.5 248.6h.8M395.6 249.0h.8M349.2 249.6h.8M423.3 249.5h.8M308.0 248.0h.8M359.6 249.4h.8M412.9 250.2h.8M448.0 251.1h.8M428.7 250.5h.8M336.0 249.4h.8M383.1 247.3h.8M382.7 250.9h.8M414.5 250.2h.8M345.7 246.8h.8M438.2 250.5h.8M397.2 248.9h.8M384.3 249.3h.8M320.0 250.1h.8M428.3 247.5h.8M326.7 248.0h.8M385.3 250.0h.8M348.6 250.1h.8M339.7 248.4h.8M404.7 246.8h.8M360.0 245.9h.8M400.8 248.6h.8M440.6 248.7h.8M417.9 248.3h.8M428.8 247.3h.8M372.1 250.5h.8M372.7 248.6h.8M372.8 249.5h.8M433.4 248.9h.8M304.5 248.6h.8M422.3 248.0h.8M430.3 249.0h.8M397.2 250.3h.8M394.1 246.6h.8M405.4 251.1h.8M369.8 249.5h.8M355.0 249.5h.8M409.7 249.8h.8M373.2 248.6h.8M389.7 250.0h.8M320.6 249.2h.8M428.6 246.5h.8M430.8 249.4h.8M381.0 249.2h.8M384.4 250.9h.8M426.5 249.3h.8M394.3 248.3h.8M386.2 249.5h.8M402.1 249.9h.8M363.2 249.1h.8M434.9 249.2h.8M347.7 251.8h.8M361.5 249.6h.8M398.6 247.2h.8M373.6 249.3h.8M414.2 249.0h.8M318.5 248.5h.8M382.6 249.1h.8M433.7 248.6h.8M424.6 249.1h.8M399.2 251.8h.8M413.2 247.9h.8M380.4 247.8h.8M352.0 247.7h.8M403.0 250.8h.8M364.3 249.7h.8M365.7 249.3h.8M439.2 250.4h.8M404.6 247.7h.8M316.8 248.9h.8M372.9 247.8h.8M421.0 249.5h.8M403.7 248.2h.8M342.1 249.8h.8M315.3 249.2h.8M316.8 248.3h.8M329.2 249.6h.8M330.3 249.1h.8M336.0 248.1h.8M335.3 246.3h.8M370.7 249.4h.8M331.9 252.0h.8M348.8 249.5h.8M407.6 247.3h.8M376.1 247.6h.8M323.9 248.5h.8M343.6 248.4h.8M338.8 248.8h.8M432.1 248.6h.8M333.4 250.5h.8M397.6 248.1h.8M440.8 247.9h.8M429.2 249.2h.8M413.1 247.3h.8M400.8 249.9h.8M332.0 249.7h.8M424.8 249.4h.8M424.8 249.9h.8M390.7 250.0h.8M392.7 247.7h.8M350.3 247.7h.8M376.8 250.7h.8M309.3 250.9h.8M317.4 249.5h.8M440.3 250.4h.8M352.2 250.6h.8M450.5 248.0h.8M426.3 251.1h.8M377.9 246.1h.8M326.1 248.4h.8M339.4 249.3h.8M415.4 249.0h.8M410.7 250.2h.8M380.0 248.3h.8M314.1 252.3h.8M429.3 247.8h.8M424.2 249.9h.8M398.6 249.1h.8M323.8 248.6h.8M349.5 251.0h.8M419.4 250.8h.8M374.0 249.9h.8M442.2 250.0h.8M327.3 246.8h.8M409.1 248.1h.8M329.7 249.5h.8M396.8 251.0h.8M332.7 249.6h.8M401.4 251.7h.8M400.4 248.8h.8M405.4 246.9h.8M382.0 250.4h.8M346.0 248.6h.8M418.9 248.8h.8M411.2 246.6h.8M311.0 249.6h.8M386.0 251.1h.8M446.0 247.7h.8M394.2 248.5h.8M448.3 248.5h.8M427.2 249.3h.8M303.4 249.1h.8M320.6 250.1h.8M346.2 249.4h.8M330.0 251.5h.8M309.6 248.8h.8M327.3 247.4h.8M318.5 249.5h.8M430.4 248.4h.8M441.5 249.4h.8M383.9 248.6h.8M401.9 250.6h.8M388.8 249.8h.8M311.6 248.3h.8M367.9 248.3h.8M323.9 248.6h.8M332.9 249.5h.8M316.7 248.1h.8M352.6 249.3h.8M319.1 250.0h.8M416.4 250.0h.8M436.5 246.1h.8M362.6 248.2h.8M388.0 248.6h.8M444.3 251.7h.8M367.8 248.9h.8M352.4 248.4h.8M419.5 246.9h.8M414.6 248.2h.8M333.7 247.5h.8M370.2 248.7h.8M437.9 247.6h.8M435.4 250.1h.8M328.0 249.2h.8M345.0 249.9h.8M426.6 248.9h.8M434.0 247.6h.8M421.2 251.0h.8M372.4 247.9h.8M417.2 249.4h.8M441.3 246.7h.8M344.9 249.0h.8M370.7 250.5h.8M426.6 247.3h.8M442.5 248.0h.8M367.9 248.7h.8M373.6 249.0h.8M394.3 248.9h.8M419.9 251.0h.8M426.2 247.9h.8M394.1 249.5h.8M362.7 249.8h.8M338.1 246.1h.8M350.6 250.6h.8M449.4 246.5h.8M320.8 247.2h.8M376.6 250.5h.8M444.5 247.4h.8M370.7 252.4h.8M398.7 249.4h.8M337.2 250.7h.8M331.3 248.6h.8M367.0 247.8h.8M382.7 249.3h.8M347.7 248.2h.8M390.4 248.6h.8M413.3 247.1h.8M450.4 249.1h.8M376.6 249.1h.8M338.7 248.4h.8M403.2 248.1h.8M366.3 249.6h.8M307.3 250.4h.8M372.9 248.0h.8M383.4 249.3h.8M318.3 247.8h.8M374.9 250.3h.8M420.6 250.1h.8M388.2 249.2h.8M417.0 250.5h.8M329.3 250.1h.8M405.2 251.6h.8M427.5 248.7h.8M433.3 250.0h.8M361.9 250.7h.8M425.6 246.6h.8M391.6 249.7h.8M366.2 250.8h.8M363.7 250.1h.8M431.8 247.4h.8M430.6 250.4h.8M339.7 246.6h.8M343.8 250.0h.8M412.4 248.5h.8M426.1 248.8h.8M393.5 250.7h.8M352.8 248.8h.8M401.2 249.2h.8M350.7 247.9h.8M319.6 250.5h.8M416.1 248.3h.8M351.3 249.5h.8M443.8 248.5h.8M318.6 248.7h.8M377.9 248.9h.8M330.4 247.7h.8M383.0 248.1h.8M394.5 247.2h.8M349.8 249.9h.8M389.8 250.2h.8M346.2 249.3h.8M362.5 250.5h.8M327.5 249.2h.8M415.0 251.2h.8M328.3 249.6h.8M407.6 249.9h.8M444.5 250.8h.8M407.4 249.3h.8M420.8 250.1h.8M409.7 251.1h.8M444.4 249.3h.8M400.4 247.6h.8M302.4 248.2h.8M390.0 247.9h.8M426.1 249.7h.8M423.2 246.1h.8M400.6 248.8h.8M404.4 250.7h.8M335.7 250.6h.8M427.5 248.8h.8M321.9 248.1h.8M305.2 248.4h.8M386.0 248.5h.8M373.8 250.1h.8M393.8 249.9h.8M368.9 245.8h.8M372.6 247.7h.8M434.7 247.6h.8M374.0 248.1h.8M407.7 250.4h.8M308.2 250.7h.8M333.6 250.3h.8M329.6 247.4h.8M389.8 246.7h.8M410.1 249.2h.8M345.4 249.5h.8M390.5 246.7h.8M374.3 248.2h.8M446.7 250.6h.8M338.1 246.9h.8M337.4 247.0h.8M417.0 251.1h.8M362.9 248.0h.8M389.0 250.7h.8M358.9 248.3h.8M323.1 250.4h.8M401.6 248.7h.8M368.5 249.3h.8M323.4 248.1h.8M309.6 249.0h.8M407.1 248.1h.8M415.5 249.1h.8M387.6 250.0h.8M387.8 248.8h.8M434.1 248.8h.8M333.1 248.6h.8M334.1 250.0h.8M326.6 248.1h.8M418.3 249.2h.8M314.8 249.4h.8M419.8 248.6h.8M321.2 247.5h.8M404.9 249.3h.8M423.5 249.3h.8M346.4 248.8h.8M348.8 249.5h.8M368.9 250.5h.8M346.9 247.9h.8M389.2 249.2h.8M419.6 250.3h.8M385.4 249.2h.8M358.5 248.7h.8M438.4 248.4h.8M378.2 251.8h.8M319.0 249.8h.8M396.4 249.3h.8M383.7 247.9h.8M304.5 249.0h.8M436.0 247.3h.8M414.4 247.2h.8M352.6 252.0h.8M432.0 248.1h.8M435.5 247.2h.8M335.7 249.3h.8M398.8 245.7h.8M392.9 249.2h.8M310.4 249.0h.8M446.4 248.2h.8M424.1 248.2h.8M380.4 249.8h.8M311.8 248.3h.8M443.9 248.0h.8M324.3 249.4h.8M308.3 247.2h.8M387.7 249.3h.8M440.0 248.3h.8M355.4 250.5h.8M394.0 250.5h.8M344.5 249.2h.8M441.4 250.0h.8M392.3 249.9h.8M433.7 249.1h.8M375.6 247.8h.8M347.5 248.3h.8M380.0 250.1h.8M364.3 251.8h.8M397.0 249.0h.8M365.0 248.9h.8M376.3 245.6h.8M320.5 249.6h.8M389.7 251.2h.8M340.0 247.7h.8M394.2 247.8h.8M362.4 248.4h.8M364.6 249.9h.8M450.2 248.6h.8M404.1 247.6h.8M373.3 250.7h.8M525.4 249.9h.8M460.0 249.6h.8M453.9 250.1h.8M490.9 249.8h.8M514.7 250.0h.8M459.1 249.8h.8M452.6 250.2h.8M468.4 249.1h.8M504.3 249.3h.8M515.3 249.5h.8M533.7 249.6h.8M452.5 249.5h.8M497.3 249.3h.8M500.7 250.1h.8M485.4 250.2h.8M503.3 249.2h.8M531.5 249.1h.8M456.6 249.7h.8M499.5 249.5h.8M461.2 250.0h.8M460.4 249.9h.8M451.5 249.5h.8M461.3 249.3h.8M484.3 250.0h.8M540.7 249.4h.8M534.3 250.5h.8M459.8 250.4h.8M509.6 249.7h.8M538.2 249.8h.8M513.6 249.5h.8M279.1 249.5h.8M287.2 250.4h.8M275.3 249.4h.8M289.5 250.1h.8M277.7 249.4h.8M281.3 250.9h.8M274.9 251.6h.8M283.2 249.3h.8M292.7 248.8h.8M280.5 249.7h.8M276.9 249.4h.8M269.8 249.3h.8M298.9 250.2h.8M295.4 250.0h.8M290.6 249.8h.8M274.8 248.9h.8M288.3 249.7h.8M278.8 249.4h.8M277.8 249.6h.8M268.5 248.6h.8M278.4 249.7h.8M288.9 248.8h.8M276.3 249.8h.8M273.9 249.9h.8M263.2 249.2h.8M263.7 249.9h.8M293.9 249.2h.8M266.2 249.5h.8M260.2 250.0h.8M284.1 249.8h.8M284.9 249.3h.8M269.4 249.2h.8M293.8 248.8h.8M296.8 249.8h.8M279.2 249.1h.8M271.7 249.9h.8M264.6 249.0h.8M281.6 251.1h.8M275.6 248.6h.8M260.5 250.4h.8M485.1 178.8h.8M418.1 179.1h.8M289.6 177.8h.8M480.2 180.0h.8M388.7 181.9h.8M389.8 178.6h.8M343.9 179.4h.8M382.3 178.4h.8M420.1 181.8h.8M348.3 178.7h.8M347.0 179.5h.8M337.8 179.6h.8M430.5 179.2h.8M386.4 179.2h.8M464.4 177.5h.8M414.7 178.6h.8M488.2 181.7h.8M448.8 177.8h.8M431.1 179.1h.8M501.5 178.8h.8M454.9 181.8h.8M391.8 180.2h.8M426.3 181.1h.8M394.0 180.3h.8M435.6 178.2h.8M349.2 178.4h.8M305.5 180.2h.8M459.4 180.6h.8M323.5 179.8h.8M397.2 178.1h.8M511.0 179.1h.8M421.1 180.4h.8M399.2 179.1h.8M459.1 179.0h.8M311.9 179.9h.8M492.9 178.0h.8M368.5 180.8h.8M508.5 179.6h.8M420.8 179.6h.8M459.3 178.4h.8M425.6 179.0h.8M466.6 180.8h.8M439.8 180.2h.8M404.1 179.7h.8M503.1 180.8h.8M302.9 177.7h.8M324.2 179.5h.8M455.5 178.4h.8M365.4 178.1h.8M498.5 180.3h.8M430.4 179.5h.8M519.2 181.5h.8M480.9 178.4h.8M378.4 182.3h.8M402.0 179.9h.8M494.9 180.1h.8M272.0 182.4h.8M416.1 178.8h.8M310.0 179.5h.8M489.1 179.2h.8M375.6 179.1h.8M522.3 178.7h.8M402.4 177.4h.8M415.1 180.2h.8M427.7 180.8h.8M332.1 180.7h.8M344.2 181.6h.8M363.2 179.7h.8M364.7 180.3h.8M385.3 180.8h.8M350.3 183.0h.8M388.2 182.1h.8M332.7 179.4h.8M310.9 178.5h.8M461.6 181.3h.8M374.6 179.3h.8M293.1 179.9h.8M350.0 178.6h.8M449.5 179.0h.8M297.4 177.3h.8M361.9 177.3h.8M356.8 178.4h.8M323.7 179.6h.8M349.7 179.0h.8M498.4 179.8h.8M382.6 179.5h.8M400.7 181.2h.8M372.3 178.6h.8M457.1 178.8h.8M336.7 180.2h.8M453.9 180.1h.8M524.0 178.4h.8M388.6 177.1h.8M429.4 178.7h.8M517.1 178.0h.8M360.5 179.3h.8M341.5 179.5h.8M380.1 177.8h.8M435.1 180.5h.8M324.6 177.1h.8M476.3 182.0h.8M429.0 178.7h.8M377.6 178.3h.8M338.6 180.1h.8M328.3 178.9h.8M414.3 176.8h.8M302.5 178.7h.8M425.5 178.9h.8M427.5 180.8h.8M536.7 180.0h.8M473.4 180.9h.8M493.9 180.2h.8M448.8 180.1h.8M522.1 178.4h.8M418.2 180.8h.8M327.1 179.3h.8M357.5 180.7h.8M443.6 181.5h.8M341.1 181.2h.8M406.9 178.2h.8M373.9 179.6h.8M401.8 180.1h.8M328.7 179.5h.8M351.6 180.4h.8M321.9 178.5h.8M451.7 178.5h.8M456.3 178.6h.8M539.1 181.6h.8M270.9 180.2h.8M397.5 180.8h.8M447.3 179.2h.8M431.0 179.1h.8M404.0 181.3h.8M470.9 179.8h.8M422.3 178.4h.8M506.5 180.9h.8M520.3 179.2h.8M431.1 179.6h.8M387.8 179.4h.8M341.0 177.7h.8M333.8 181.2h.8M434.1 179.3h.8M419.2 178.5h.8M421.5 179.4h.8M282.8 178.6h.8M501.2 180.0h.8M455.3 179.9h.8M399.2 178.0h.8M391.8 178.2h.8M426.7 178.9h.8M306.9 179.7h.8M375.7 179.0h.8M323.1 179.5h.8M371.2 179.1h.8M309.1 178.7h.8M371.6 182.1h.8M370.3 178.8h.8M453.7 178.4h.8M399.1 179.5h.8M469.8 179.3h.8M308.4 180.6h.8M349.7 179.9h.8M411.3 180.3h.8M374.7 180.1h.8M369.4 180.0h.8M521.1 178.6h.8M349.0 180.0h.8M278.2 178.2h.8M539.0 179.1h.8M401.7 178.5h.8M502.1 178.7h.8M344.9 180.0h.8M294.1 178.1h.8M355.4 180.3h.8M395.1 178.5h.8M403.8 178.9h.8M306.5 180.6h.8M449.2 180.6h.8M436.2 177.7h.8M425.2 179.3h.8M344.6 181.2h.8M481.8 181.0h.8M321.7 178.7h.8M409.8 178.4h.8M417.8 182.5h.8M372.9 179.9h.8M441.0 181.4h.8M328.7 176.7h.8M481.0 179.3h.8M438.8 179.2h.8M490.9 178.4h.8M304.6 179.4h.8M428.6 178.6h.8M439.8 179.4h.8M407.1 178.7h.8M413.5 178.6h.8M406.0 177.4h.8M370.8 177.9h.8M347.1 178.6h.8M357.8 178.5h.8M460.7 178.8h.8M294.6 179.7h.8M368.7 178.9h.8M405.5 178.9h.8M519.4 180.0h.8M416.3 180.3h.8M351.2 179.6h.8M473.3 178.9h.8M395.3 179.5h.8M416.7 180.9h.8M383.5 178.5h.8M512.5 178.2h.8M402.5 179.6h.8M400.1 179.6h.8M357.0 180.2h.8M454.9 181.1h.8M507.1 180.8h.8M340.6 180.1h.8M522.1 179.8h.8M493.4 181.4h.8M308.8 178.1h.8M413.2 181.4h.8M335.1 179.7h.8M450.0 179.8h.8M381.8 181.0h.8M431.1 179.3h.8M384.7 178.6h.8M458.9 180.1h.8M448.7 181.5h.8M500.3 180.3h.8M456.7 180.9h.8M389.4 179.5h.8M337.7 179.7h.8M526.4 178.7h.8M503.0 178.5h.8M388.3 179.6h.8M317.6 179.7h.8M356.8 179.1h.8M470.1 180.1h.8M348.2 177.8h.8M449.3 180.1h.8M382.1 177.7h.8M353.0 177.6h.8M338.3 178.5h.8M278.8 181.0h.8M405.5 179.2h.8M536.3 180.0h.8M524.2 178.3h.8M418.2 179.2h.8M342.9 177.8h.8M367.3 180.2h.8M364.3 180.3h.8M327.7 180.7h.8M361.2 179.4h.8M382.5 179.9h.8M382.4 178.2h.8M445.8 180.0h.8M453.4 179.4h.8M498.8 180.0h.8M377.8 180.7h.8M401.4 178.4h.8M534.0 179.2h.8M451.1 179.2h.8M442.3 179.2h.8M393.8 178.8h.8M491.3 180.2h.8M411.7 178.4h.8M423.4 178.6h.8M514.7 179.8h.8M299.5 180.8h.8M458.8 178.4h.8M380.5 179.3h.8M419.9 179.8h.8M434.9 178.2h.8M404.0 176.0h.8M431.8 179.1h.8M371.0 178.1h.8M453.7 179.1h.8M470.6 179.1h.8M418.3 179.4h.8M488.7 180.2h.8M520.0 178.2h.8M457.6 181.4h.8M457.4 180.0h.8M460.6 182.3h.8M503.9 182.1h.8M364.7 179.2h.8M288.6 179.5h.8M529.2 177.3h.8M351.9 178.6h.8M455.7 181.1h.8M311.1 180.7h.8M416.3 177.3h.8M339.5 179.5h.8M428.0 180.1h.8M463.0 179.1h.8M465.9 179.1h.8M447.0 180.0h.8M274.7 179.7h.8M326.0 179.2h.8M358.7 178.8h.8M361.0 177.5h.8M331.8 181.0h.8M460.3 180.2h.8M483.9 180.3h.8M472.5 177.4h.8M478.9 180.1h.8M453.9 180.2h.8M492.8 181.1h.8M356.3 178.9h.8M493.9 180.0h.8M321.7 177.9h.8M390.6 180.4h.8M358.4 178.7h.8M346.6 178.5h.8M483.4 178.5h.8M300.6 179.5h.8M506.6 180.4h.8M538.6 179.9h.8M357.9 177.2h.8M348.5 180.8h.8M514.5 178.8h.8M317.1 181.5h.8M293.5 179.1h.8M452.6 178.7h.8M330.3 179.2h.8M399.3 178.6h.8M514.8 179.4h.8M461.8 179.6h.8M390.3 179.6h.8M506.5 179.5h.8M456.7 180.6h.8M443.0 179.1h.8M451.3 178.1h.8M467.6 178.6h.8M428.4 178.9h.8M518.7 181.0h.8M437.0 180.0h.8M531.9 178.4h.8M427.0 180.6h.8M379.0 178.3h.8M350.7 177.8h.8M424.6 180.2h.8M486.0 181.2h.8M357.3 178.1h.8M344.0 181.5h.8M481.1 181.3h.8M403.2 179.8h.8M428.0 181.2h.8M343.8 179.3h.8M297.2 179.8h.8M529.9 178.8h.8M293.2 177.8h.8M310.6 177.6h.8M342.7 180.0h.8M342.0 179.1h.8M360.4 177.8h.8M469.2 181.3h.8M522.4 179.8h.8M419.3 179.5h.8M356.3 180.4h.8M501.8 181.1h.8M529.2 177.8h.8M418.4 180.4h.8M432.2 181.0h.8M518.8 180.4h.8M518.4 180.2h.8M524.9 179.6h.8M425.3 180.1h.8M436.2 179.7h.8M426.0 180.0h.8M448.3 180.6h.8M279.4 178.6h.8M424.1 180.5h.8M471.2 180.2h.8M405.2 177.3h.8M468.5 178.3h.8M298.0 181.1h.8M410.5 179.8h.8M369.5 179.1h.8M451.7 179.3h.8M370.9 180.8h.8M386.7 178.6h.8M521.2 179.0h.8M474.5 180.3h.8M424.9 178.8h.8M316.4 179.9h.8M404.4 179.7h.8M352.3 178.1h.8M384.3 177.5h.8M497.5 180.6h.8M415.0 180.4h.8M417.5 179.6h.8M343.5 179.8h.8M517.1 178.1h.8M371.6 180.0h.8M495.3 179.8h.8M484.9 179.5h.8M399.5 178.7h.8M347.5 177.8h.8M420.7 180.1h.8M300.0 180.1h.8M313.7 178.4h.8M338.2 176.8h.8M459.3 181.3h.8M310.2 180.1h.8M391.3 180.8h.8M399.6 179.4h.8M383.8 180.6h.8M467.4 178.8h.8M304.6 177.5h.8M403.8 179.1h.8M532.7 179.6h.8M460.7 179.4h.8M268.7 181.7h.8M375.9 179.5h.8M402.0 179.5h.8M345.3 178.7h.8M325.1 180.5h.8M407.3 180.0h.8M463.0 176.9h.8M417.6 177.6h.8M281.7 180.0h.8M490.1 176.9h.8M358.2 180.1h.8M529.6 177.3h.8M501.2 178.4h.8M307.1 179.4h.8M508.0 177.6h.8M270.9 178.4h.8M397.3 181.4h.8M364.5 180.3h.8M337.2 181.4h.8M422.5 180.1h.8M387.6 179.1h.8M283.1 179.1h.8M272.6 179.6h.8M537.3 177.3h.8M465.8 177.8h.8M330.0 177.7h.8M504.9 180.3h.8M298.2 179.7h.8M389.1 179.8h.8M482.0 178.8h.8M389.1 179.0h.8M379.9 178.8h.8M505.7 179.6h.8M468.9 178.6h.8M330.0 180.4h.8M372.4 179.6h.8M511.8 182.4h.8M509.9 181.8h.8M358.5 180.2h.8M342.2 182.1h.8M419.9 177.9h.8M356.0 179.3h.8M513.0 181.2h.8M483.2 179.5h.8M422.4 180.8h.8M479.0 177.6h.8M326.8 180.9h.8M296.9 178.9h.8M310.9 179.9h.8M366.4 179.0h.8M380.2 179.2h.8M305.8 179.4h.8M336.8 179.0h.8M447.0 180.5h.8M540.2 180.3h.8M321.1 179.7h.8M355.3 180.0h.8M376.1 179.0h.8M363.0 177.4h.8M491.7 179.5h.8M356.0 180.6h.8M445.8 179.9h.8M345.3 179.2h.8M350.4 180.2h.8M458.9 178.2h.8M399.2 178.6h.8M390.3 180.0h.8M431.6 179.2h.8M412.5 179.7h.8M464.9 180.5h.8M525.3 179.0h.8M426.6 177.1h.8M356.6 181.4h.8M384.5 181.2h.8M271.2 180.4h.8M392.6 178.1h.8M287.7 179.9h.8M330.1 181.9h.8M372.7 181.8h.8M421.3 181.2h.8M407.2 177.3h.8M491.9 179.2h.8M412.1 179.9h.8M383.4 179.0h.8M408.2 177.5h.8M333.8 179.8h.8M499.6 179.7h.8M351.9 179.7h.8M443.5 178.4h.8M484.3 179.1h.8M409.4 177.2h.8M288.8 178.7h.8M433.3 179.0h.8M486.9 180.5h.8M402.4 180.9h.8M404.1 181.3h.8M441.8 179.6h.8M462.1 178.9h.8M356.2 180.5h.8M470.6 178.7h.8M483.4 179.4h.8M283.7 177.2h.8M460.3 179.1h.8M445.0 179.4h.8M533.4 177.5h.8M326.4 180.5h.8M392.1 179.6h.8M387.0 179.9h.8M338.1 179.5h.8M386.8 177.6h.8M517.9 179.5h.8M463.3 179.3h.8M386.8 178.1h.8M481.6 181.0h.8M513.9 178.1h.8M362.3 180.2h.8M326.4 177.6h.8M361.7 178.7h.8M327.6 177.6h.8M386.0 176.1h.8M488.0 180.2h.8M489.5 180.5h.8M348.7 179.4h.8M449.8 179.3h.8M437.2 179.3h.8M335.4 179.1h.8M498.6 179.2h.8M285.9 180.8h.8M387.1 179.9h.8M395.5 177.8h.8M509.1 179.2h.8M414.6 178.5h.8M354.5 178.7h.8M420.8 178.0h.8M397.1 179.5h.8M407.5 180.6h.8M462.7 180.8h.8M381.0 180.3h.8M312.8 181.2h.8M434.2 179.5h.8M337.0 181.7h.8M477.1 178.7h.8M432.5 180.6h.8M351.1 182.4h.8M365.4 182.0h.8M378.9 177.9h.8M501.2 180.9h.8M424.8 180.0h.8M400.3 179.9h.8M427.9 179.7h.8M368.9 180.8h.8M516.2 176.8h.8M460.1 179.2h.8M503.1 179.2h.8M372.7 179.1h.8M453.9 179.2h.8M394.5 178.9h.8M476.6 179.7h.8M379.2 180.3h.8M499.7 178.4h.8M508.8 181.4h.8M306.3 179.1h.8M454.3 179.5h.8M492.1 182.1h.8M317.9 178.7h.8M370.0 179.2h.8M413.5 177.8h.8M441.6 179.0h.8M347.1 181.7h.8M408.8 179.0h.8M408.6 180.1h.8M412.7 180.4h.8M469.5 177.6h.8M354.1 179.3h.8M452.3 182.8h.8M442.2 179.7h.8M316.4 178.8h.8M516.5 178.8h.8M371.4 179.5h.8M494.1 180.3h.8M326.6 178.7h.8M381.6 180.7h.8M271.2 180.3h.8M514.4 178.0h.8M360.4 179.3h.8M495.5 180.3h.8M425.5 177.6h.8M408.7 180.4h.8M470.0 180.8h.8M537.6 180.1h.8M379.5 179.2h.8M338.0 179.2h.8M368.7 178.9h.8M403.6 178.8h.8M387.8 178.9h.8M534.4 177.7h.8M500.7 178.9h.8M317.3 181.5h.8M295.7 180.0h.8M390.3 178.0h.8M409.1 180.8h.8M538.5 179.4h.8M428.8 179.8h.8M522.6 179.4h.8M319.8 177.1h.8M388.2 179.5h.8M479.3 179.3h.8M356.0 180.6h.8M376.3 179.2h.8M325.3 179.1h.8M489.9 179.6h.8M344.4 179.3h.8M540.3 177.5h.8M338.2 180.8h.8M475.4 180.0h.8M305.1 180.4h.8M474.8 177.8h.8M389.0 177.9h.8M418.5 178.5h.8M492.8 178.1h.8M389.4 179.5h.8M385.2 180.7h.8M464.5 178.4h.8M410.9 179.8h.8M436.6 179.4h.8M396.9 179.9h.8M377.1 180.3h.8M368.7 179.6h.8M304.1 180.9h.8M436.4 179.5h.8M315.1 180.1h.8M429.7 178.5h.8M299.5 176.8h.8M372.3 179.4h.8M467.0 180.3h.8M511.5 179.4h.8M363.4 179.9h.8M370.0 178.4h.8M448.8 179.0h.8M451.5 177.2h.8M526.1 180.9h.8M422.5 177.7h.8M426.3 178.4h.8M424.5 179.7h.8M502.4 180.3h.8M461.5 179.1h.8M343.8 178.5h.8M486.9 177.2h.8M292.5 178.0h.8M412.3 178.4h.8M391.1 181.8h.8M335.2 179.5h.8M368.1 179.5h.8M268.9 179.2h.8M402.3 178.2h.8M339.1 178.8h.8M467.5 181.7h.8M420.8 181.2h.8M445.5 178.2h.8M449.0 179.2h.8M325.1 177.5h.8M490.1 179.5h.8M467.8 180.7h.8M444.4 178.5h.8M459.5 178.0h.8M430.5 180.5h.8M451.8 177.5h.8M499.9 179.5h.8M334.9 179.4h.8M362.7 179.0h.8M434.3 180.0h.8M360.1 178.1h.8M326.4 180.8h.8M354.2 180.3h.8M517.4 181.6h.8M379.2 179.4h.8M449.7 177.3h.8M537.1 179.2h.8M527.6 179.7h.8M404.2 180.8h.8M352.9 179.4h.8M502.6 182.1h.8M402.7 180.1h.8M358.3 181.5h.8M374.2 179.3h.8M416.7 178.7h.8M348.3 180.4h.8M414.6 180.4h.8M300.8 180.7h.8M406.0 179.8h.8M274.5 180.2h.8M464.0 179.1h.8M317.6 179.9h.8M371.4 179.3h.8M454.3 178.5h.8M460.8 179.8h.8M444.7 179.0h.8M400.1 179.8h.8M277.3 178.4h.8M423.3 179.0h.8M339.8 177.6h.8M400.9 178.0h.8M406.6 181.2h.8M454.5 178.5h.8M372.1 178.1h.8M285.0 181.0h.8M403.0 180.6h.8M401.3 179.4h.8M444.1 179.3h.8M463.9 179.5h.8M277.9 179.8h.8M296.5 178.6h.8M349.9 179.8h.8M486.0 179.1h.8M410.4 179.7h.8M398.8 180.0h.8M430.3 176.6h.8M477.6 178.8h.8M444.0 181.0h.8M328.7 180.1h.8M309.4 179.5h.8M325.5 179.5h.8M448.2 178.1h.8M304.0 180.0h.8M323.0 177.3h.8M297.7 179.9h.8M296.1 181.1h.8M446.7 179.0h.8M514.8 180.2h.8M374.0 179.4h.8M426.9 182.3h.8M390.8 180.1h.8M344.2 178.6h.8M489.7 179.0h.8M314.4 178.6h.8M428.9 178.1h.8M497.7 180.7h.8M299.3 179.8h.8M482.3 179.7h.8M397.6 179.8h.8M270.1 179.9h.8M335.1 180.5h.8M330.6 180.1h.8M475.6 181.3h.8M353.4 177.6h.8M380.9 181.9h.8M353.3 178.2h.8M328.5 181.8h.8M426.6 177.5h.8M334.7 181.4h.8M428.0 181.2h.8M411.2 180.4h.8M387.3 178.0h.8M322.8 180.1h.8M296.5 179.6h.8M395.9 180.4h.8M484.9 179.0h.8M378.7 180.0h.8M351.4 177.7h.8M426.9 179.6h.8M451.0 179.7h.8M374.3 178.9h.8M373.0 177.8h.8M439.2 180.4h.8M418.3 180.7h.8M398.4 180.4h.8M322.2 178.5h.8M309.5 181.0h.8M409.3 178.3h.8M284.4 181.1h.8M311.4 178.2h.8M423.4 176.9h.8M345.6 178.0h.8M386.9 181.8h.8M472.9 179.2h.8M368.4 179.3h.8M443.0 179.1h.8M461.6 180.2h.8M296.9 178.0h.8M406.1 178.2h.8M313.6 176.6h.8M467.3 179.3h.8M428.9 179.9h.8M446.0 181.4h.8M518.0 178.9h.8M314.1 180.9h.8M380.0 180.2h.8M418.5 177.3h.8M335.7 177.7h.8M395.8 181.1h.8M431.7 179.7h.8M435.5 179.7h.8M287.7 179.9h.8M533.5 178.5h.8M283.7 180.7h.8M371.4 179.9h.8M492.6 179.5h.8M376.1 179.4h.8M425.7 179.4h.8M390.9 181.4h.8M346.2 179.4h.8M410.3 181.5h.8M448.4 180.0h.8M316.1 179.7h.8M365.7 181.5h.8M491.6 179.8h.8M316.9 178.7h.8M503.5 179.2h.8M420.7 179.3h.8M417.2 178.0h.8M361.6 181.1h.8M354.7 179.2h.8M318.0 177.7h.8M357.4 178.6h.8M315.3 180.0h.8M474.8 178.7h.8M305.1 180.2h.8M469.6 177.2h.8M352.2 178.4h.8M411.5 179.9h.8M389.9 177.9h.8M333.6 179.4h.8M480.1 177.9h.8M385.6 180.3h.8M403.9 178.2h.8M402.6 180.2h.8M473.2 179.1h.8M382.9 179.0h.8M297.7 180.6h.8M475.9 181.3h.8M382.9 179.7h.8M463.3 179.8h.8M339.6 181.0h.8M535.2 179.3h.8M497.9 180.0h.8M304.6 179.4h.8M410.4 180.3h.8M424.5 178.0h.8M409.7 177.7h.8M423.3 180.0h.8M355.7 180.4h.8M276.0 178.1h.8M344.7 179.7h.8M442.2 179.1h.8M501.5 179.5h.8M464.2 178.4h.8M498.8 180.3h.8M287.3 178.3h.8M466.4 177.1h.8M439.3 179.3h.8M386.8 178.7h.8M493.5 180.2h.8M459.7 179.8h.8M408.3 179.2h.8M367.0 178.1h.8M354.5 179.9h.8M406.0 179.4h.8M344.7 179.5h.8M438.5 178.9h.8M399.6 179.6h.8M530.3 180.0h.8M453.5 182.1h.8M485.1 179.0h.8M421.2 179.0h.8M310.0 180.2h.8M421.5 179.7h.8M399.4 181.5h.8M405.7 178.8h.8M439.1 179.6h.8M385.8 181.3h.8M388.9 179.1h.8M385.9 179.2h.8M513.6 179.4h.8M422.5 178.7h.8M514.9 178.2h.8M408.3 179.5h.8M449.9 179.7h.8M345.9 180.6h.8M458.0 177.0h.8M481.2 176.2h.8M344.3 177.7h.8M325.8 180.1h.8M399.1 179.0h.8M444.8 178.7h.8M475.9 180.6h.8M467.0 181.2h.8M385.7 179.0h.8M340.7 177.4h.8M518.4 179.3h.8M430.2 178.7h.8M398.2 179.8h.8M361.1 178.1h.8M460.6 180.5h.8M284.8 178.8h.8M428.2 179.0h.8M370.0 181.0h.8M439.5 180.7h.8M473.6 181.1h.8M421.5 181.9h.8M476.1 179.3h.8M298.4 178.5h.8M289.1 180.0h.8M295.9 177.8h.8M372.8 181.2h.8M531.2 180.2h.8M427.0 179.5h.8M313.5 179.5h.8M415.4 179.7h.8M508.3 178.1h.8M351.0 180.0h.8M459.8 179.1h.8M432.0 179.1h.8M527.6 180.0h.8M506.7 177.7h.8M441.3 180.5h.8M430.5 178.0h.8M412.7 181.0h.8M433.8 179.0h.8M363.1 178.9h.8M400.2 179.6h.8M383.8 181.2h.8M491.7 178.3h.8M410.6 179.9h.8M496.3 180.5h.8M335.9 180.6h.8M453.9 180.2h.8M471.1 180.9h.8M475.7 177.7h.8M509.5 176.7h.8M300.6 180.1h.8M369.5 177.9h.8M467.7 179.5h.8M408.2 181.8h.8M405.2 180.0h.8M538.1 180.4h.8M389.9 180.1h.8M373.8 179.3h.8M385.8 177.6h.8M394.0 180.1h.8M296.5 179.5h.8M407.3 180.3h.8M415.2 180.5h.8M353.8 178.0h.8M399.7 180.3h.8M298.7 178.3h.8M498.9 179.5h.8M384.0 180.9h.8M306.5 177.6h.8M521.9 179.0h.8M337.0 178.3h.8M497.5 180.5h.8M493.8 180.4h.8M486.5 179.8h.8M441.5 179.0h.8M461.7 178.4h.8M421.2 177.4h.8M427.1 180.3h.8M484.1 181.1h.8M398.1 180.9h.8M466.8 179.9h.8M310.2 181.8h.8M495.7 179.4h.8M421.0 178.7h.8M482.7 178.9h.8M285.6 179.4h.8M343.4 180.5h.8M445.9 178.8h.8M310.1 180.3h.8M313.0 179.2h.8M367.5 179.5h.8M317.7 181.1h.8M435.9 181.0h.8M391.9 180.2h.8M320.1 179.4h.8M450.9 179.1h.8M451.4 180.3h.8M505.7 182.0h.8M465.5 179.3h.8M420.2 180.4h.8M466.3 177.8h.8M450.2 178.8h.8M514.3 179.2h.8M422.0 177.6h.8M380.1 181.3h.8M331.6 178.5h.8M363.0 180.3h.8M376.7 178.6h.8M450.1 179.0h.8M393.7 179.0h.8M416.3 179.5h.8M515.9 178.7h.8M274.1 177.1h.8M480.1 179.7h.8M503.5 178.6h.8M295.4 180.4h.8M378.0 180.6h.8M368.8 178.2h.8M395.4 179.2h.8M390.0 178.9h.8M417.3 179.5h.8M373.4 177.7h.8M383.2 177.5h.8M273.9 179.4h.8M375.4 177.7h.8M511.3 180.0h.8M453.5 178.8h.8M449.3 180.7h.8M539.3 179.5h.8M452.0 178.8h.8M282.1 180.5h.8M348.0 179.4h.8M425.2 180.1h.8M339.4 178.9h.8M436.3 178.4h.8M413.1 180.1h.8M536.9 179.4h.8M413.3 181.4h.8M343.3 179.7h.8M498.9 181.0h.8M443.0 178.6h.8M424.5 179.7h.8M520.3 179.8h.8M380.2 176.4h.8M286.5 180.6h.8M392.0 180.1h.8M388.0 178.9h.8M371.5 178.6h.8M491.1 179.6h.8M358.3 178.3h.8M308.5 178.3h.8M505.0 180.1h.8M375.2 178.9h.8M455.7 179.2h.8M514.3 179.2h.8M332.5 179.8h.8M455.2 178.3h.8M314.7 180.7h.8M420.4 177.3h.8M309.2 179.6h.8M423.0 179.4h.8M343.4 177.2h.8M414.7 180.3h.8M383.3 179.2h.8M462.8 179.0h.8M381.6 178.7h.8M417.4 177.8h.8M433.8 179.6h.8M469.4 178.3h.8M394.2 177.6h.8M346.7 177.7h.8M414.2 177.5h.8M385.1 178.7h.8M275.8 177.1h.8M396.6 181.3h.8M362.9 179.6h.8M468.0 179.2h.8M330.1 177.6h.8M493.3 180.6h.8M495.3 180.7h.8M376.8 179.4h.8M407.1 178.6h.8M368.8 181.4h.8M542.1 180.4h.8M414.5 180.7h.8M474.0 181.0h.8M401.2 181.5h.8M403.2 180.0h.8M458.6 178.0h.8M461.2 179.5h.8M401.0 178.9h.8M379.5 178.9h.8M357.6 182.2h.8M532.1 178.8h.8M482.3 179.0h.8M414.5 178.9h.8M424.7 179.5h.8M464.0 180.2h.8M412.6 180.0h.8M321.9 178.6h.8M469.1 180.6h.8M474.6 178.1h.8M303.7 181.1h.8M383.4 181.5h.8M475.9 178.6h.8M414.0 179.0h.8M400.2 180.2h.8M388.3 160.7h.8M434.5 157.1h.8M402.7 157.0h.8M440.0 159.5h.8M420.8 158.1h.8M428.6 156.9h.8M447.0 157.9h.8M453.7 155.7h.8M404.5 157.7h.8M452.4 158.7h.8M420.7 156.4h.8M398.8 159.5h.8M446.3 159.5h.8M392.9 158.4h.8M455.5 158.3h.8M385.0 155.8h.8M416.1 156.6h.8M427.8 155.4h.8M387.9 156.3h.8M418.4 158.6h.8M410.1 155.3h.8M434.1 157.0h.8M446.6 157.1h.8M450.6 157.3h.8M393.3 156.0h.8M434.3 157.6h.8M408.7 160.9h.8M385.2 156.8h.8M410.6 157.6h.8M407.0 157.1h.8M424.1 158.7h.8M384.2 157.3h.8M384.6 159.6h.8M407.0 159.1h.8M385.9 157.5h.8M457.9 157.2h.8M402.0 155.3h.8M429.7 157.7h.8M458.5 161.6h.8M442.3 157.2h.8M416.4 161.3h.8M424.7 157.0h.8M408.6 156.6h.8M386.5 156.4h.8M445.6 158.2h.8M422.2 158.5h.8M435.6 158.1h.8M406.0 155.0h.8M447.7 157.2h.8M441.4 158.2h.8M436.4 161.9h.8M389.6 157.4h.8M414.1 156.5h.8M445.9 160.6h.8M439.7 158.3h.8M438.3 159.4h.8M385.3 156.8h.8M408.8 157.0h.8M450.8 155.1h.8M432.6 158.4h.8M439.1 158.5h.8M421.0 158.4h.8M424.9 160.1h.8M417.6 159.9h.8M453.2 156.7h.8M446.3 159.4h.8M434.5 156.2h.8M385.6 157.6h.8M396.5 157.3h.8M425.3 156.9h.8M405.2 157.5h.8M419.7 159.8h.8M388.1 159.3h.8M421.1 157.9h.8M397.1 156.6h.8M457.6 158.9h.8M399.9 158.9h.8M413.3 158.3h.8M412.9 159.3h.8M390.1 158.2h.8M419.8 160.3h.8M435.5 160.2h.8M453.2 156.2h.8M436.7 158.8h.8M443.5 157.6h.8M420.5 159.7h.8M389.9 159.2h.8M395.2 158.2h.8M388.6 158.2h.8M392.7 157.5h.8M416.2 137.4h.8M382.4 135.1h.8M369.9 133.8h.8M313.3 136.8h.8M383.4 136.7h.8M405.8 135.2h.8M425.2 136.4h.8M404.6 134.1h.8M475.5 135.3h.8M365.4 136.4h.8M446.0 134.6h.8M418.9 136.8h.8M378.9 136.3h.8M444.6 136.1h.8M473.2 138.2h.8M406.0 137.5h.8M371.1 136.9h.8M367.4 137.1h.8M417.5 136.4h.8M314.8 133.5h.8M400.3 137.4h.8M399.8 136.4h.8M433.8 138.5h.8M447.7 136.4h.8M361.9 136.2h.8M321.8 136.1h.8M457.0 136.5h.8M442.9 137.6h.8M400.6 136.8h.8M389.7 137.4h.8M366.7 135.3h.8M401.2 135.3h.8M459.9 136.4h.8M419.8 137.9h.8M445.8 136.6h.8M391.5 136.9h.8M461.0 137.4h.8M317.4 138.9h.8M411.4 135.2h.8M452.8 135.5h.8M329.4 134.6h.8M414.6 137.3h.8M373.0 136.1h.8M388.1 133.9h.8M414.3 138.1h.8M384.0 138.6h.8M375.6 134.6h.8M353.3 135.7h.8M410.9 138.5h.8M417.5 139.0h.8M326.3 137.4h.8M348.3 135.8h.8M439.7 136.4h.8M366.3 137.0h.8M365.5 135.7h.8M456.4 136.6h.8M395.5 137.8h.8M386.2 136.8h.8M423.8 136.6h.8M465.8 136.2h.8M336.0 137.2h.8M398.3 135.2h.8M373.2 135.8h.8M355.9 137.4h.8M461.2 135.0h.8M405.9 136.4h.8M408.2 136.1h.8M391.0 137.7h.8M373.2 135.6h.8M468.0 135.5h.8M386.2 136.2h.8M385.4 135.8h.8M433.4 138.5h.8M315.7 134.9h.8M376.0 138.0h.8M398.0 135.4h.8M411.9 136.5h.8M403.7 134.6h.8M429.5 133.8h.8M323.1 135.5h.8M382.8 139.2h.8M384.2 134.1h.8M398.0 137.0h.8M367.7 137.2h.8M371.6 135.3h.8M361.7 134.6h.8M334.9 134.2h.8M385.1 138.8h.8M416.4 134.3h.8M396.2 138.1h.8M470.4 137.4h.8M369.5 137.0h.8M396.8 140.6h.8M406.6 137.8h.8M396.8 134.7h.8M335.6 136.8h.8M403.3 137.8h.8M409.7 136.2h.8M396.8 137.7h.8M450.9 135.6h.8M426.6 135.9h.8M354.8 136.6h.8M439.4 134.6h.8M430.0 135.8h.8M434.1 138.5h.8M350.4 134.9h.8M426.9 137.8h.8M355.7 135.7h.8M453.7 135.9h.8M477.3 135.8h.8M350.2 136.2h.8M468.7 135.9h.8M382.4 134.6h.8M321.6 138.4h.8M455.1 136.9h.8M332.6 136.1h.8M408.6 135.2h.8M458.6 136.6h.8M399.2 136.6h.8M399.5 136.4h.8M364.8 136.9h.8M314.1 139.2h.8M385.1 137.1h.8M447.0 136.8h.8M374.3 137.2h.8M420.1 137.3h.8M426.6 135.4h.8M418.1 136.4h.8M401.0 133.6h.8M383.7 134.6h.8M401.2 136.4h.8M333.8 138.1h.8M412.9 138.8h.8M445.1 137.3h.8M361.3 136.0h.8M423.6 134.7h.8M335.1 134.7h.8M440.5 136.0h.8M441.3 139.8h.8M382.3 135.4h.8M354.0 135.2h.8M419.5 135.9h.8M373.2 137.7h.8M437.3 138.0h.8M458.3 134.7h.8M420.2 137.8h.8M453.1 137.3h.8M394.5 134.9h.8M438.3 135.5h.8M433.0 137.8h.8M350.0 138.4h.8M405.0 139.7h.8M401.7 137.5h.8M354.0 135.5h.8M451.6 135.0h.8M446.5 136.8h.8M369.5 135.8h.8M336.8 136.9h.8M394.4 136.6h.8M358.9 135.2h.8M479.4 134.7h.8M325.4 136.5h.8M333.0 135.5h.8M317.9 137.1h.8M396.1 137.0h.8M364.0 135.3h.8M438.1 135.1h.8M427.7 137.8h.8M358.1 138.5h.8M330.0 136.6h.8M369.4 137.0h.8M381.7 140.5h.8M388.2 136.9h.8M444.6 135.6h.8M388.0 136.0h.8M464.7 136.9h.8M421.8 134.6h.8M381.8 138.8h.8M474.4 138.6h.8M403.2 136.4h.8M382.3 135.8h.8M449.4 136.2h.8M380.2 137.6h.8M392.0 134.6h.8M470.7 136.4h.8M453.6 135.7h.8M389.6 136.9h.8M400.6 136.5h.8M336.5 135.1h.8M410.3 134.0h.8M414.9 134.6h.8M438.8 136.5h.8M321.5 135.7h.8M454.5 136.6h.8M380.1 134.9h.8M394.2 138.3h.8M435.4 136.0h.8M359.7 137.8h.8M447.7 138.6h.8M396.8 136.5h.8M471.7 135.6h.8M349.3 135.4h.8M394.5 134.8h.8M349.3 135.9h.8M413.8 138.6h.8M446.7 136.2h.8M408.5 136.1h.8M443.7 136.6h.8M384.8 137.7h.8M429.1 137.2h.8M478.5 135.7h.8M380.8 136.5h.8M432.4 137.6h.8M426.9 137.3h.8M463.8 137.5h.8M476.4 138.6h.8M385.4 137.2h.8M391.7 138.2h.8M461.2 135.6h.8M324.7 136.0h.8M337.7 137.4h.8M368.9 135.5h.8M413.0 137.3h.8M326.1 135.5h.8M467.9 134.9h.8M316.3 133.9h.8M421.6 134.7h.8M360.9 136.8h.8M383.6 137.3h.8M464.6 136.0h.8M315.2 137.6h.8M392.0 134.9h.8M362.3 136.9h.8M429.5 136.2h.8M430.0 137.8h.8M325.2 137.3h.8M426.4 138.3h.8M359.1 137.7h.8M460.5 137.9h.8M442.0 136.2h.8M367.7 135.6h.8M356.8 136.6h.8M476.3 138.0h.8M335.0 137.6h.8M406.8 135.2h.8M422.7 138.8h.8M409.2 136.0h.8M392.6 135.1h.8M407.2 137.6h.8M347.8 137.1h.8M412.6 135.0h.8M326.1 135.8h.8M391.6 133.6h.8M395.2 135.4h.8M451.9 138.4h.8M405.2 136.4h.8M373.7 137.4h.8M400.1 135.8h.8M402.0 138.6h.8M478.0 138.2h.8M390.9 138.3h.8M329.0 135.6h.8M373.1 136.6h.8M467.2 136.6h.8M421.2 136.0h.8M390.6 135.4h.8M417.4 135.5h.8M408.3 135.6h.8M363.1 136.4h.8M412.1 137.0h.8M354.1 136.2h.8M394.5 136.4h.8M338.5 138.4h.8M467.8 134.4h.8M409.7 138.7h.8M388.9 135.6h.8M466.5 136.3h.8M346.9 134.5h.8M421.7 138.7h.8M435.3 137.7h.8M451.0 137.3h.8M395.6 137.5h.8M328.0 136.7h.8M369.8 136.1h.8M398.5 138.3h.8M410.8 138.1h.8M330.5 134.2h.8M470.7 135.7h.8M402.5 133.1h.8M374.2 137.4h.8M448.0 138.2h.8M437.2 135.8h.8M398.4 137.0h.8M410.9 137.5h.8M366.7 137.2h.8M470.9 135.7h.8M410.2 135.7h.8M456.7 135.7h.8M438.6 136.8h.8M402.8 136.9h.8M409.1 136.8h.8M378.9 136.4h.8M412.3 135.4h.8M415.1 137.7h.8M388.6 136.3h.8M356.3 139.2h.8M370.7 135.1h.8M373.8 136.6h.8M458.8 138.5h.8M315.2 134.5h.8M450.1 137.1h.8M421.6 137.1h.8M451.4 136.3h.8M422.0 136.3h.8M369.9 134.8h.8M400.8 137.1h.8M408.0 137.8h.8M471.1 133.9h.8M407.3 138.3h.8M430.5 134.9h.8M438.4 135.6h.8M330.7 135.1h.8M358.3 135.2h.8M411.7 134.3h.8M378.5 136.0h.8M419.4 136.3h.8M463.2 134.2h.8M363.0 137.2h.8M367.6 136.3h.8M387.0 136.2h.8M383.8 137.9h.8M381.9 135.9h.8M371.8 135.5h.8M361.9 137.1h.8M423.9 135.1h.8M389.9 136.7h.8M453.0 137.0h.8M424.9 136.9h.8M392.8 136.7h.8M365.2 135.5h.8M464.9 137.0h.8M412.2 137.7h.8M406.6 136.2h.8M317.9 133.2h.8M315.3 138.1h.8M379.9 139.5h.8M376.7 138.8h.8M333.7 136.0h.8M356.2 138.6h.8M374.6 135.5h.8M376.2 134.8h.8M359.4 135.0h.8M396.3 136.1h.8M444.8 136.5h.8M388.6 136.6h.8M428.2 136.8h.8M420.1 134.7h.8M469.1 136.3h.8M339.9 137.8h.8M412.9 136.5h.8M385.3 135.7h.8M325.8 135.9h.8M418.3 135.2h.8M380.9 139.3h.8M341.7 134.8h.8M428.8 138.5h.8M341.2 136.1h.8M423.3 135.7h.8M478.5 136.5h.8M451.7 135.1h.8M385.2 135.2h.8M474.1 134.7h.8M381.5 136.2h.8M401.6 134.8h.8M385.6 134.6h.8M375.0 137.6h.8M407.8 133.6h.8M385.2 138.2h.8M385.6 133.7h.8M363.4 138.0h.8M400.0 137.1h.8M368.6 136.3h.8M356.9 137.8h.8M396.6 137.7h.8M409.6 135.0h.8M413.6 139.8h.8M355.6 133.8h.8M477.0 134.7h.8M469.2 135.1h.8M443.9 136.1h.8M393.0 134.4h.8M340.9 135.9h.8M452.3 137.4h.8M372.1 136.9h.8M371.1 134.3h.8M429.6 136.4h.8M416.2 137.2h.8M336.9 132.2h.8M435.4 136.4h.8M384.5 135.8h.8M435.6 136.8h.8M400.8 138.3h.8M427.1 138.1h.8M462.0 136.7h.8M424.8 137.4h.8M391.0 135.0h.8M364.8 136.3h.8M418.7 134.6h.8M372.4 136.2h.8M361.6 134.8h.8M362.5 137.0h.8M424.9 135.3h.8M383.5 132.5h.8M393.1 137.1h.8M424.6 137.9h.8M404.0 135.8h.8M331.5 137.7h.8M404.2 133.5h.8M391.6 134.8h.8M367.3 136.8h.8M383.9 137.1h.8M398.1 134.5h.8M389.9 139.4h.8M463.4 135.2h.8M380.9 136.2h.8M312.7 138.7h.8M416.5 137.1h.8M419.6 134.3h.8M383.7 139.9h.8M322.6 138.2h.8M425.2 133.2h.8M388.8 138.6h.8M455.7 136.1h.8M385.6 138.0h.8M400.2 137.0h.8M426.6 137.1h.8M313.1 139.4h.8M374.3 136.1h.8M412.1 137.7h.8M406.5 136.2h.8M336.4 137.8h.8M331.1 139.8h.8M319.3 135.6h.8M456.7 136.6h.8M344.1 135.8h.8M458.8 132.9h.8M412.2 136.9h.8M341.2 136.0h.8M457.0 137.8h.8M320.2 134.8h.8M390.3 134.6h.8M367.0 138.0h.8M446.6 135.1h.8M385.8 138.5h.8M451.6 136.8h.8M390.2 139.5h.8M425.6 135.9h.8M331.4 137.2h.8M438.4 136.2h.8M371.5 138.1h.8M458.0 138.3h.8M376.9 136.6h.8M386.3 137.8h.8M374.9 136.2h.8M341.7 135.1h.8M352.6 135.9h.8M385.9 139.1h.8M409.8 136.9h.8M398.2 134.0h.8M397.4 135.9h.8M454.4 138.0h.8M443.2 136.6h.8M429.9 137.6h.8M416.7 138.7h.8M346.8 133.3h.8M469.0 137.8h.8M401.6 136.7h.8M365.8 133.9h.8M391.8 135.8h.8M427.9 135.5h.8M429.2 136.6h.8M429.6 138.0h.8M415.9 137.1h.8M327.7 135.6h.8M413.3 136.4h.8M379.0 136.0h.8M374.7 135.7h.8M356.9 136.8h.8M464.5 136.3h.8M456.7 137.6h.8M452.5 133.7h.8M388.8 135.5h.8M319.2 134.5h.8M336.7 137.6h.8M406.2 137.2h.8M419.2 137.2h.8M364.4 138.5h.8M362.2 138.2h.8M322.5 137.2h.8M362.3 136.6h.8M313.6 138.0h.8M427.4 137.1h.8M394.0 136.1h.8M426.6 136.6h.8M383.9 134.9h.8M458.8 135.6h.8M429.5 134.2h.8M401.1 136.0h.8M326.5 137.4h.8M446.1 134.7h.8M319.1 136.6h.8M334.4 137.4h.8M438.5 137.3h.8M373.9 137.5h.8M407.0 137.5h.8M415.3 136.3h.8M390.2 136.9h.8M362.9 136.4h.8M477.7 135.3h.8M447.7 136.5h.8M393.2 137.9h.8M332.7 137.0h.8M342.2 136.8h.8M424.0 134.8h.8M338.5 138.4h.8M326.4 136.8h.8M424.6 135.4h.8M419.2 138.9h.8M403.2 135.7h.8M393.9 137.5h.8M383.9 136.0h.8M469.1 135.5h.8M468.4 137.4h.8M418.2 134.6h.8M429.7 136.1h.8M373.5 138.4h.8M341.1 139.1h.8M360.8 136.6h.8M469.5 134.4h.8M475.5 136.2h.8M332.1 138.8h.8M443.0 140.3h.8M432.5 139.4h.8M371.9 137.4h.8M452.6 138.6h.8M388.4 135.3h.8M466.0 136.3h.8M369.3 134.2h.8M361.4 136.7h.8M394.1 138.4h.8M420.7 132.7h.8M410.0 137.6h.8M458.8 136.6h.8M435.8 138.7h.8M421.2 136.4h.8M377.8 135.5h.8M344.4 137.1h.8M442.1 138.4h.8M400.4 137.7h.8M437.7 138.2h.8M315.9 136.0h.8M330.9 136.6h.8M343.3 136.2h.8M457.1 135.8h.8M361.9 136.8h.8M444.9 137.0h.8M344.0 136.8h.8M351.2 134.0h.8M463.4 134.7h.8M322.9 136.8h.8M426.0 134.8h.8M368.8 135.7h.8M420.4 135.3h.8M374.4 137.8h.8M317.2 138.1h.8M411.0 135.3h.8M365.2 136.1h.8M340.4 138.3h.8M398.5 137.9h.8M402.3 136.4h.8M417.0 133.8h.8M377.5 138.4h.8M391.7 137.2h.8M324.4 135.8h.8M362.3 135.6h.8M422.3 138.1h.8M407.7 139.1h.8M434.5 134.9h.8M345.7 136.2h.8M472.6 135.6h.8M415.8 138.1h.8M410.2 137.5h.8M361.5 135.7h.8M386.4 134.1h.8M384.5 137.2h.8M380.7 136.8h.8M430.1 133.6h.8M314.3 138.5h.8M458.8 136.5h.8M338.1 136.8h.8M363.6 138.1h.8M402.0 135.3h.8M380.5 135.3h.8M452.4 136.8h.8M378.9 137.5h.8M442.2 135.5h.8M452.4 137.1h.8M430.5 135.4h.8M434.0 137.6h.8M436.2 134.7h.8M379.4 137.8h.8M386.3 135.9h.8M314.3 138.1h.8M376.4 136.2h.8M366.7 136.2h.8M348.6 137.7h.8M378.0 136.6h.8M364.0 138.1h.8M342.7 137.8h.8M340.1 137.4h.8M465.0 135.9h.8M431.3 137.8h.8M437.9 135.9h.8M456.0 138.0h.8M384.3 136.9h.8M392.6 134.5h.8M356.5 135.6h.8M437.6 136.4h.8M374.8 138.6h.8M426.7 136.5h.8M408.2 137.9h.8M453.2 137.3h.8M375.3 136.6h.8M364.0 135.6h.8M455.7 136.3h.8M390.8 136.7h.8M401.4 134.4h.8M373.0 136.4h.8M390.8 136.1h.8M377.7 135.4h.8M467.7 135.6h.8M369.2 137.6h.8M403.0 138.2h.8M415.0 136.7h.8M414.9 138.0h.8M459.9 137.1h.8M395.9 138.0h.8M389.2 136.2h.8M422.4 136.2h.8M426.0 136.2h.8M400.2 137.0h.8M383.6 137.4h.8M423.4 134.9h.8M330.7 138.1h.8M343.1 137.5h.8M417.6 135.1h.8M382.6 137.7h.8M401.2 136.8h.8M339.7 134.7h.8M335.7 136.4h.8M328.1 137.0h.8M370.6 136.0h.8M335.4 138.6h.8M392.2 136.4h.8M330.4 134.2h.8M388.6 132.9h.8M405.7 135.5h.8M441.1 136.8h.8M470.0 137.7h.8M440.6 137.2h.8M351.6 135.3h.8M387.3 135.3h.8M356.0 132.8h.8M392.5 135.2h.8M415.7 135.0h.8M439.4 138.8h.8M395.3 135.4h.8M359.6 135.4h.8M397.6 137.7h.8M416.2 137.2h.8M358.9 136.3h.8M433.1 139.8h.8M471.2 137.6h.8M401.4 137.7h.8M347.8 135.0h.8M405.2 137.6h.8M459.6 136.7h.8M419.8 136.4h.8M331.1 135.4h.8M416.2 136.2h.8M316.3 136.8h.8M424.2 138.1h.8M448.0 138.1h.8M393.4 135.7h.8M352.8 136.5h.8M409.9 136.1h.8M378.4 135.9h.8M388.9 138.3h.8M332.9 135.4h.8M379.3 135.7h.8M378.0 136.7h.8M440.5 134.4h.8M410.2 138.2h.8M398.3 140.5h.8M458.7 136.7h.8M360.3 137.6h.8M434.1 135.2h.8M404.1 136.6h.8M471.2 135.6h.8M457.0 137.6h.8M468.0 135.7h.8M412.1 133.6h.8M407.5 138.6h.8M421.4 135.9h.8M433.5 134.2h.8M369.4 137.7h.8M387.8 135.5h.8M345.2 136.4h.8M445.4 137.5h.8M320.0 136.1h.8M393.0 138.0h.8M400.8 137.9h.8M412.3 136.5h.8M455.8 136.2h.8M343.4 138.7h.8M410.9 137.9h.8M434.1 140.5h.8M431.9 136.3h.8M479.0 136.9h.8M445.6 136.1h.8M325.2 134.5h.8M399.6 138.3h.8M406.4 135.9h.8M383.6 136.6h.8M476.2 135.5h.8M471.6 140.4h.8M341.0 136.7h.8M338.2 136.4h.8M377.6 133.5h.8M358.1 135.2h.8M434.6 135.5h.8M328.8 134.0h.8M338.2 135.8h.8M368.3 134.0h.8M388.7 134.7h.8M387.0 136.7h.8M402.0 137.3h.8M472.4 134.9h.8M376.2 133.6h.8M326.9 138.6h.8M359.3 136.8h.8M360.5 136.8h.8M388.3 136.3h.8M350.2 137.6h.8M441.5 137.4h.8M367.6 136.6h.8M429.9 136.9h.8M335.7 140.6h.8M382.2 135.4h.8M388.5 136.7h.8M340.3 134.7h.8M428.6 138.7h.8M381.1 136.0h.8M430.4 136.5h.8M388.3 135.4h.8M365.7 136.2h.8M430.9 137.5h.8M389.1 138.0h.8M348.5 137.1h.8M440.9 136.2h.8M478.6 136.9h.8M399.5 133.7h.8M423.0 138.3h.8M357.4 136.0h.8M397.2 137.7h.8M426.7 136.1h.8M374.8 135.6h.8M358.6 133.6h.8M392.2 136.6h.8M444.2 135.7h.8M378.2 137.2h.8M415.0 136.1h.8M478.9 138.2h.8M316.7 135.9h.8M396.8 137.7h.8M397.7 136.8h.8M400.8 137.3h.8M448.2 135.4h.8M379.1 136.5h.8M317.3 136.4h.8M372.6 135.9h.8M432.6 134.8h.8M416.7 135.2h.8M428.4 136.0h.8M377.9 134.7h.8M389.9 136.1h.8M324.3 136.7h.8M394.1 138.0h.8M458.2 137.0h.8M362.9 137.5h.8M406.4 134.1h.8M330.0 136.5h.8M416.3 139.1h.8M414.5 136.4h.8M450.3 135.1h.8M399.4 137.7h.8M387.2 138.6h.8M392.0 139.5h.8M357.2 137.2h.8M456.8 134.9h.8M477.2 136.9h.8M387.5 134.7h.8M367.2 137.7h.8M393.1 137.7h.8M375.8 136.8h.8M395.8 136.2h.8M432.6 136.2h.8M468.3 135.9h.8M328.6 134.7h.8M349.2 135.7h.8M350.9 138.1h.8M401.5 136.3h.8M372.8 138.3h.8M382.3 137.5h.8M383.1 139.7h.8M380.0 138.3h.8M368.1 136.6h.8M354.7 134.7h.8M402.1 136.8h.8M353.9 137.5h.8M433.5 135.5h.8M381.0 137.0h.8M318.9 135.5h.8M417.8 136.9h.8M476.3 136.7h.8M357.1 137.5h.8M399.0 137.9h.8M381.9 136.4h.8M416.8 137.8h.8M365.9 135.3h.8M456.1 135.1h.8M443.8 137.2h.8M328.6 135.4h.8M368.2 136.9h.8M360.2 135.5h.8M340.8 138.1h.8M479.6 138.5h.8M366.0 137.9h.8M452.4 136.6h.8M343.3 138.9h.8M506.5 135.1h.8M491.8 136.2h.8M510.0 137.7h.8M501.7 136.1h.8M493.6 137.4h.8M482.9 138.2h.8M486.1 134.9h.8M508.2 135.8h.8M486.4 136.7h.8M501.0 138.1h.8M500.3 137.6h.8M512.7 137.3h.8M508.0 138.2h.8M482.2 138.8h.8M493.8 136.4h.8M491.2 134.7h.8M491.2 137.9h.8M506.6 138.7h.8M501.2 137.6h.8M506.0 137.1h.8M489.4 137.2h.8M499.3 139.3h.8M485.1 137.8h.8M509.9 135.4h.8M480.7 139.4h.8M511.7 137.0h.8M498.8 136.0h.8M501.5 135.6h.8M512.0 138.4h.8M481.4 138.6h.8M497.2 136.7h.8M493.2 135.5h.8M483.6 136.3h.8M484.4 136.6h.8M498.9 136.5h.8M511.5 136.4h.8M497.1 138.0h.8M497.9 136.6h.8M510.6 136.9h.8M510.2 136.9h.8M270.7 183.9h.8M286.7 177.6h.8M481.3 99.4h.8M466.2 107.2h.8M478.0 102.4h.8M351.0 151.8h.8M435.9 118.4h.8M327.6 160.7h.8M531.9 80.4h.8M409.2 129.8h.8M311.9 168.2h.8M278.6 180.6h.8M379.1 140.4h.8M447.3 112.2h.8M276.3 181.4h.8M417.3 125.6h.8M443.6 114.7h.8M424.9 122.6h.8M491.5 97.0h.8M463.8 107.6h.8M385.1 138.2h.8M387.0 137.5h.8M427.5 121.7h.8M490.1 97.5h.8M304.0 171.1h.8M450.8 112.2h.8M303.2 171.3h.8M451.7 112.7h.8M353.3 150.9h.8M531.9 80.0h.8M500.1 92.5h.8M428.3 121.1h.8M291.2 174.7h.8M472.5 104.5h.8M303.3 171.4h.8M393.7 135.6h.8M449.7 113.0h.8M493.3 94.7h.8M347.9 151.8h.8M427.9 121.3h.8M326.6 162.0h.8M519.7 85.7h.8M462.6 108.0h.8M458.6 109.6h.8M405.7 129.8h.8M335.6 157.2h.8M421.4 123.3h.8M325.2 161.0h.8M349.1 152.8h.8M506.2 90.6h.8M435.8 118.3h.8M445.3 114.9h.8M392.5 135.6h.8M458.5 109.1h.8M388.8 136.8h.8M478.8 100.7h.8M382.9 138.8h.8M450.1 112.9h.8M324.7 162.3h.8M451.5 111.4h.8M314.7 165.7h.8M431.6 118.1h.8M528.5 81.5h.8M309.8 167.5h.8M272.0 182.5h.8M416.0 126.2h.8M472.7 104.7h.8M435.7 118.5h.8M405.2 130.8h.8M503.6 91.7h.8M326.3 160.7h.8M502.5 91.4h.8M506.9 90.2h.8M319.2 164.6h.8M410.6 127.5h.8M498.7 93.0h.8M511.8 88.3h.8M320.4 164.1h.8M496.5 93.8h.8M508.9 89.8h.8M466.5 106.1h.8M430.6 120.1h.8M518.9 85.1h.8M540.6 76.8h.8M357.5 149.1h.8M331.4 159.2h.8M372.5 142.6h.8M449.3 113.7h.8M353.3 150.7h.8M524.7 83.3h.8M336.9 157.2h.8M513.8 86.8h.8M326.5 161.1h.8M489.9 96.8h.8M539.3 77.8h.8M529.7 81.1h.8M457.6 109.0h.8M486.0 98.3h.8M313.9 166.5h.8M405.8 129.6h.8M491.8 95.5h.8M355.3 150.3h.8M509.0 89.8h.8M478.4 101.5h.8M463.9 106.2h.8M426.9 122.3h.8M458.1 110.1h.8M467.4 106.6h.8M283.1 179.2h.8M359.6 148.5h.8M412.4 127.7h.8M419.1 124.0h.8M494.7 95.3h.8M538.9 78.3h.8M447.0 114.1h.8M513.3 89.3h.8M316.6 165.4h.8M300.8 171.4h.8M330.1 158.6h.8M358.3 147.8h.8M492.3 95.9h.8M522.1 83.8h.8M292.4 174.5h.8M466.1 106.5h.8M471.7 103.8h.8M450.0 112.9h.8M462.4 107.5h.8M508.1 89.0h.8M505.1 90.9h.8M419.1 124.7h.8M410.4 127.9h.8M540.5 76.4h.8M382.7 139.7h.8M496.7 93.2h.8M488.6 98.5h.8M483.3 99.4h.8M529.1 81.8h.8M305.8 169.1h.8M325.0 161.8h.8M443.1 116.4h.8M327.8 160.4h.8M338.2 156.0h.8M481.2 101.0h.8M449.9 112.6h.8M421.4 123.4h.8M465.3 106.5h.8M472.5 104.2h.8M469.4 105.1h.8M404.5 130.7h.8M331.4 159.9h.8M298.3 172.1h.8M315.7 165.6h.8M353.0 150.0h.8M422.0 123.7h.8M505.8 91.3h.8M522.4 82.9h.8M450.7 112.6h.8M533.9 78.8h.8M495.9 94.4h.8M536.2 79.3h.8M502.4 91.3h.8M381.6 138.5h.8M352.9 151.5h.8M352.6 150.6h.8M442.4 116.1h.8M485.9 98.5h.8M503.0 91.2h.8M414.9 127.1h.8M479.3 101.3h.8M347.4 152.5h.8M475.5 102.7h.8M510.3 89.3h.8M509.7 89.2h.8M283.5 178.3h.8M495.6 95.1h.8M330.1 159.9h.8M349.0 152.8h.8M448.1 114.1h.8M434.2 118.9h.8M315.8 165.6h.8M414.9 126.5h.8M518.9 85.5h.8M487.2 97.8h.8M536.6 79.4h.8M375.7 141.5h.8M389.3 135.6h.8M446.5 113.0h.8M459.2 107.8h.8M351.6 151.9h.8M488.4 97.2h.8M515.0 86.7h.8M399.6 132.0h.8M306.1 168.9h.8M331.8 159.3h.8M495.1 95.0h.8M507.9 90.0h.8M526.6 82.5h.8M416.3 125.8h.8M306.7 169.7h.8M526.9 81.9h.8M405.9 130.4h.8M417.2 125.2h.8M412.1 127.5h.8M421.4 123.2h.8M299.5 172.4h.8M454.0 111.0h.8M375.1 142.0h.8M444.3 114.2h.8M392.6 134.4h.8M473.3 103.5h.8M379.6 140.5h.8M522.2 83.7h.8M337.5 156.1h.8M444.7 114.2h.8M342.0 154.7h.8M341.6 154.5h.8M282.3 177.8h.8M297.3 173.3h.8M288.7 176.1h.8M509.0 89.6h.8M273.5 182.4h.8M523.0 83.6h.8M513.8 87.4h.8M511.7 87.9h.8M415.0 126.3h.8M283.2 178.2h.8M401.4 131.8h.8M289.6 175.5h.8M420.4 124.6h.8M303.9 170.1h.8M286.9 176.5h.8M295.2 172.9h.8M477.3 100.9h.8M436.4 117.9h.8M478.8 101.5h.8M374.7 141.7h.8M326.6 161.9h.8M472.8 103.7h.8M290.1 175.7h.8M317.5 165.0h.8M281.0 179.7h.8M415.3 126.5h.8M415.1 126.4h.8M436.7 117.4h.8M430.6 120.0h.8M362.2 146.2h.8M321.6 163.0h.8M422.9 123.1h.8M300.9 171.0h.8M539.8 76.4h.8M373.3 142.7h.8M532.0 79.8h.8M428.0 121.2h.8M493.5 95.5h.8M283.8 177.3h.8M350.1 151.5h.8M342.7 155.1h.8M368.2 143.9h.8M503.9 91.4h.8M431.6 119.3h.8M320.7 163.0h.8M303.3 169.5h.8M317.4 164.7h.8M486.5 98.6h.8M417.0 126.2h.8M315.7 166.7h.8M339.8 155.7h.8M500.2 92.4h.8M402.8 131.7h.8M352.6 151.5h.8M390.6 136.5h.8M311.3 167.9h.8M361.5 147.4h.8M305.6 168.6h.8M388.2 136.7h.8M453.3 111.8h.8M477.2 101.5h.8M536.0 78.0h.8M290.2 175.6h.8M520.5 85.2h.8M270.9 183.4h.8M535.7 78.9h.8M500.6 91.9h.8M472.2 103.9h.8M370.0 144.0h.8M452.1 110.9h.8M436.8 117.3h.8M434.0 118.9h.8M339.8 156.8h.8M435.8 118.0h.8M446.8 114.6h.8M338.7 156.7h.8M540.7 77.6h.8M271.1 183.9h.8M285.1 177.7h.8M358.3 149.1h.8M419.6 125.0h.8M367.2 145.4h.8M428.0 121.1h.8M536.1 78.9h.8M374.5 142.3h.8M328.1 161.0h.8M519.4 85.4h.8M534.4 80.3h.8M499.7 93.8h.8M301.4 171.3h.8M374.7 143.0h.8M532.6 79.5h.8M343.0 154.8h.8M345.6 153.3h.8M511.3 88.0h.8M276.1 181.1h.8M379.6 140.6h.8M419.1 125.4h.8M350.3 151.5h.8M277.5 179.5h.8M386.4 137.5h.8M538.1 78.1h.8M304.3 169.5h.8M276.0 179.9h.8M465.2 106.5h.8M272.2 182.8h.8M406.8 129.9h.8M469.8 105.0h.8M498.7 92.6h.8M328.4 160.3h.8M501.5 92.0h.8M443.4 115.3h.8M537.3 78.2h.8M457.2 109.8h.8M456.5 110.0h.8M378.5 141.0h.8M446.7 114.3h.8M359.3 148.6h.8M506.1 91.2h.8M526.5 82.7h.8M467.8 105.1h.8M426.8 121.9h.8M479.6 101.4h.8M302.9 171.1h.8M368.9 144.5h.8M391.5 135.0h.8M371.4 144.0h.8M455.3 109.6h.8M462.6 108.2h.8M502.6 92.3h.8M311.7 166.7h.8M334.0 157.5h.8M375.6 140.3h.8M456.7 110.0h.8M455.9 110.0h.8M477.9 101.1h.8M320.3 163.9h.8M479.7 100.2h.8M315.3 165.4h.8M283.9 177.8h.8M373.2 142.0h.8M528.1 82.5h.8M429.1 121.1h.8M369.6 143.9h.8M481.2 98.9h.8M493.4 96.1h.8M366.8 145.4h.8M306.7 169.1h.8M338.4 156.2h.8M353.1 150.3h.8M522.8 82.9h.8M509.4 89.2h.8M519.2 85.9h.8M278.5 181.5h.8M287.8 176.4h.8M409.6 128.8h.8M417.6 125.7h.8M450.4 112.8h.8M517.3 86.0h.8M321.9 164.0h.8M280.1 179.3h.8M441.8 115.0h.8M435.5 118.5h.8M527.9 82.2h.8M480.1 101.1h.8M323.0 161.9h.8M439.2 117.0h.8M286.3 177.6h.8M513.5 87.3h.8M433.7 119.7h.8M461.2 107.5h.8M271.7 183.2h.8M317.0 165.6h.8M328.0 161.5h.8M489.9 97.0h.8M488.3 97.2h.8M408.5 129.8h.8M296.0 173.7h.8M338.5 156.5h.8M454.1 110.9h.8M518.5 85.0h.8M476.0 102.1h.8M426.8 121.1h.8M391.9 136.0h.8M344.3 154.8h.8M368.0 145.2h.8M522.0 85.0h.8M451.4 112.2h.8M477.8 101.7h.8M274.7 181.3h.8M303.9 170.4h.8M296.6 173.1h.8M491.4 95.9h.8M380.9 139.6h.8M533.2 80.3h.8M428.0 121.5h.8M280.1 179.8h.8M468.9 105.2h.8M396.0 133.9h.8M283.2 178.4h.8M309.3 168.4h.8M290.5 175.6h.8M290.2 174.9h.8M448.0 113.6h.8M444.6 113.6h.8M397.5 132.7h.8M425.0 122.1h.8M330.7 159.5h.8M328.8 160.0h.8M487.5 98.0h.8M295.6 174.7h.8M416.5 125.4h.8M471.0 104.7h.8M394.5 134.3h.8M272.1 182.7h.8M404.8 130.6h.8M308.4 168.9h.8M518.6 85.3h.8M380.3 139.3h.8M460.6 108.7h.8M340.6 155.2h.8M352.7 151.1h.8M536.8 78.1h.8M444.6 115.5h.8M466.5 105.2h.8M293.7 175.0h.8M465.5 106.3h.8M339.7 156.5h.8M486.5 98.7h.8M500.2 93.0h.8M283.4 177.8h.8M358.2 148.4h.8M505.0 91.0h.8M291.3 175.7h.8M300.9 170.8h.8M491.7 95.9h.8M434.5 118.7h.8M276.8 179.9h.8M335.3 158.2h.8M291.1 175.5h.8M524.3 83.0h.8M491.1 96.6h.8M368.1 144.6h.8M286.3 176.7h.8M444.0 115.6h.8M285.9 177.8h.8M288.9 175.7h.8M453.0 111.7h.8M291.3 175.2h.8M529.2 81.0h.8M272.6 183.0h.8M316.8 165.5h.8M497.6 93.5h.8M542.0 76.1h.8M537.9 77.3h.8M489.5 96.9h.8M301.4 171.2h.8M289.8 175.5h.8M368.2 144.5h.8M511.9 89.6h.8M366.3 144.4h.8M364.2 147.1h.8M418.1 125.9h.8M303.5 171.4h.8M333.4 158.8h.8M302.2 171.0h.8M389.6 136.4h.8M271.2 182.8h.8M371.9 144.3h.8M427.0 121.8h.8M379.3 139.9h.8M350.3 151.6h.8M383.9 138.8h.8M454.3 111.7h.8M323.9 162.7h.8M362.3 146.8h.8M396.1 133.5h.8M414.7 126.9h.8M392.7 134.3h.8M484.4 98.7h.8M512.7 87.9h.8M321.6 163.5h.8M521.7 83.7h.8M335.3 157.4h.8M425.5 122.3h.8M448.7 112.7h.8M371.9 143.2h.8M303.3 170.2h.8M496.5 94.7h.8M462.5 107.0h.8M385.3 137.2h.8M361.5 147.5h.8M334.3 158.0h.8M541.6 77.0h.8M454.6 110.8h.8M485.9 97.6h.8M282.2 178.5h.8M477.3 102.4h.8M405.3 130.6h.8M296.1 172.4h.8M496.0 94.4h.8M405.0 129.3h.8M353.2 150.6h.8M529.4 81.5h.8M353.3 150.5h.8M465.7 107.3h.8M388.8 136.5h.8M442.6 114.2h.8M323.6 161.5h.8M303.1 169.3h.8M456.4 111.2h.8M344.6 154.2h.8M518.4 85.5h.8M412.9 127.0h.8M332.0 159.1h.8M389.5 135.6h.8M364.4 146.0h.8M382.3 139.5h.8M489.5 97.6h.8M331.6 158.5h.8M296.1 172.9h.8M523.1 83.9h.8M308.1 168.7h.8M374.6 141.7h.8M497.4 93.8h.8M367.1 143.6h.8M505.6 89.3h.8M480.0 101.1h.8M506.9 89.8h.8M292.3 174.7h.8M404.3 130.7h.8M352.8 150.9h.8M397.4 133.6h.8M302.3 170.0h.8M405.6 129.7h.8M482.4 100.4h.8M405.1 129.6h.8M487.0 97.7h.8M497.3 94.0h.8M442.6 115.4h.8M297.2 172.8h.8M521.8 84.7h.8M380.7 140.2h.8M372.8 142.7h.8M528.9 82.0h.8M402.2 131.8h.8M309.9 167.4h.8M441.3 115.7h.8M388.0 137.0h.8M540.7 76.8h.8M358.8 149.4h.8M503.8 91.0h.8M393.1 135.7h.8M367.9 145.5h.8M291.2 176.0h.8M509.2 89.1h.8M354.6 150.4h.8M507.7 90.1h.8M508.4 89.8h.8M485.1 98.8h.8M471.5 104.3h.8M375.1 140.7h.8M275.4 180.6h.8M455.9 109.7h.8M320.3 164.1h.8M346.7 153.0h.8M464.3 107.2h.8M459.6 108.1h.8M311.5 166.5h.8M429.8 120.4h.8M370.3 143.7h.8M346.3 153.4h.8M526.0 82.9h.8M325.4 162.1h.8M275.1 182.5h.8M437.3 117.5h.8M344.1 154.1h.8M371.8 143.0h.8M502.1 91.6h.8M396.0 133.7h.8M521.9 83.3h.8M298.2 172.5h.8M319.9 163.6h.8M508.1 90.0h.8M320.6 163.2h.8M520.0 85.2h.8M494.3 94.8h.8M370.6 143.5h.8M319.6 163.5h.8M437.7 116.7h.8M295.3 173.4h.8M335.8 156.6h.8M441.8 116.3h.8M284.5 177.0h.8M300.6 172.4h.8M433.7 119.3h.8M539.7 77.7h.8M291.7 175.4h.8M275.7 181.1h.8M493.2 96.2h.8M375.1 143.1h.8M337.9 156.7h.8M314.2 167.0h.8M370.1 144.1h.8M500.5 91.6h.8M287.4 176.4h.8M480.5 100.7h.8M454.8 110.2h.8M358.4 148.8h.8M379.1 141.0h.8M422.7 122.7h.8M507.4 90.5h.8M390.2 136.6h.8M389.7 135.7h.8M538.3 78.4h.8M512.3 87.4h.8M327.1 161.2h.8M530.1 81.0h.8M326.7 160.5h.8M395.8 134.9h.8M424.7 122.2h.8M512.3 87.4h.8M343.2 154.5h.8M326.5 161.5h.8M482.3 100.6h.8M462.4 108.0h.8M498.2 93.8h.8M453.1 112.2h.8M471.7 103.3h.8M488.9 96.8h.8M427.6 122.4h.8M467.2 105.0h.8M298.7 172.4h.8M334.5 157.9h.8M405.1 129.0h.8M272.1 184.0h.8M524.5 83.3h.8M532.8 79.3h.8M493.3 95.3h.8M502.3 92.2h.8M281.8 179.0h.8M413.1 127.4h.8M280.1 178.6h.8M352.1 151.4h.8M371.3 143.3h.8M509.2 89.8h.8M354.2 149.7h.8M525.7 83.1h.8M371.9 143.1h.8M458.8 109.9h.8M542.5 75.6h.8M512.5 86.8h.8M385.1 139.5h.8M354.1 150.2h.8M341.9 154.9h.8M499.3 92.8h.8M294.4 173.9h.8M437.6 116.4h.8M505.5 91.1h.8M492.6 97.1h.8M475.3 102.5h.8M442.2 116.2h.8M534.3 79.2h.8M279.9 179.2h.8M520.4 85.3h.8M439.0 116.9h.8M464.9 106.9h.8M408.1 128.9h.8M372.6 143.3h.8M495.8 94.1h.8M457.3 109.6h.8M497.1 93.5h.8M310.9 166.7h.8M297.0 172.3h.8M491.3 96.0h.8M422.1 123.4h.8M312.2 166.8h.8M510.5 89.1h.8M319.7 164.5h.8M483.7 99.3h.8M445.3 114.9h.8M507.6 90.4h.8M460.9 108.6h.8M315.6 165.0h.8M404.8 129.8h.8M540.1 77.7h.8M319.7 164.2h.8M449.1 112.3h.8M520.4 85.1h.8M272.1 182.9h.8M451.1 111.5h.8M338.3 157.3h.8M295.8 173.0h.8M381.2 138.6h.8M285.4 176.9h.8M385.3 137.6h.8M294.0 174.1h.8M457.1 111.0h.8M336.4 156.6h.8M342.6 155.0h.8M325.7 161.3h.8M322.3 161.7h.8M425.5 122.4h.8M453.2 111.3h.8M358.7 149.3h.8M479.9 100.0h.8M446.0 114.2h.8M319.6 163.9h.8M342.7 155.1h.8M351.7 150.8h.8M289.0 176.6h.8M290.7 175.3h.8M380.5 139.9h.8M355.9 150.6h.8M309.8 167.7h.8M461.7 108.3h.8M499.7 93.6h.8M317.6 165.7h.8M396.6 134.1h.8M384.9 137.6h.8M301.9 170.9h.8M462.9 106.7h.8M520.4 83.8h.8M412.4 127.4h.8M380.6 139.9h.8M435.2 118.7h.8M517.6 86.1h.8M304.1 169.6h.8M537.1 78.6h.8M442.9 115.8h.8M515.7 86.5h.8M416.7 125.5h.8M375.3 141.6h.8M492.4 95.1h.8M362.2 148.3h.8M294.5 174.3h.8M376.6 141.6h.8M319.1 163.5h.8M308.8 168.5h.8M518.6 85.4h.8M278.1 180.3h.8M467.5 105.0h.8M413.8 126.6h.8M448.1 114.0h.8M404.7 131.2h.8M537.5 78.3h.8M323.5 163.2h.8M319.2 163.9h.8M492.3 96.0h.8M328.2 159.9h.8M425.6 122.4h.8M528.0 81.0h.8M468.6 105.5h.8M441.8 116.5h.8M417.7 125.1h.8M368.5 144.4h.8M341.5 155.2h.8M298.8 171.7h.8M443.8 114.2h.8M476.5 102.1h.8M330.3 159.7h.8M334.5 157.6h.8M396.5 133.7h.8M304.1 169.5h.8M402.7 131.5h.8M397.5 134.6h.8M452.1 111.7h.8M303.5 169.2h.8M423.9 122.7h.8M447.0 114.0h.8M375.2 141.2h.8M282.9 178.1h.8M377.7 141.2h.8M402.1 131.8h.8M478.6 101.0h.8M503.7 92.1h.8M387.0 136.7h.8M283.1 178.9h.8M364.3 147.3h.8M285.8 176.7h.8M500.9 92.6h.8M538.8 77.9h.8M315.7 164.8h.8M542.7 76.1h.8M412.2 127.7h.8M444.3 115.6h.8M383.0 138.3h.8M415.7 125.2h.8M353.7 150.3h.8M497.7 93.3h.8M541.0 75.8h.8M496.7 94.1h.8M280.7 179.4h.8M446.3 114.2h.8M419.1 125.1h.8M433.7 119.2h.8M404.2 131.8h.8M446.0 114.5h.8M320.5 163.2h.8M276.2 181.5h.8M407.7 129.4h.8M444.9 114.1h.8M409.2 129.4h.8M422.4 124.3h.8M375.1 141.7h.8M271.8 182.9h.8M444.1 115.3h.8M322.8 162.4h.8M383.0 138.8h.8M396.9 132.9h.8M285.9 178.0h.8M295.8 173.5h.8M496.4 95.8h.8M480.4 101.4h.8M481.6 100.4h.8M486.7 98.5h.8M399.2 133.2h.8M312.4 165.8h.8M433.3 119.3h.8M489.7 97.3h.8M364.2 146.3h.8M390.7 135.8h.8M305.1 170.6h.8M337.0 156.8h.8M537.6 78.4h.8M382.4 139.9h.8M404.1 130.8h.8M493.7 95.3h.8M296.3 173.7h.8M449.6 112.9h.8M270.6 183.0h.8M329.5 160.1h.8M324.4 161.5h.8M396.6 134.0h.8M544.3 175.8h.8M525.3 180.2h.8M501.4 184.5h.8M521.3 182.0h.8M527.2 180.2h.8M533.6 179.3h.8M491.7 187.2h.8M524.2 180.4h.8M492.4 186.7h.8M543.0 177.3h.8M495.0 185.3h.8M520.6 181.0h.8M512.1 182.0h.8M543.8 176.1h.8M514.5 182.3h.8M511.5 181.9h.8M537.3 176.7h.8M537.9 177.2h.8M541.5 176.5h.8M527.4 178.5h.8M496.8 186.1h.8M520.5 180.4h.8M519.1 181.1h.8M528.5 179.8h.8M491.2 186.7h.8M524.9 179.9h.8M514.3 181.9h.8M515.5 180.7h.8M495.5 184.9h.8M505.2 184.1h.8M528.4 179.4h.8M493.0 185.9h.8M504.0 184.6h.8M536.4 178.5h.8M544.2 176.0h.8M532.8 178.6h.8M501.4 183.5h.8M494.1 185.7h.8M538.9 177.6h.8M495.1 185.4h.8M540.0 176.5h.8M506.3 184.0h.8M511.8 181.8h.8M543.6 175.3h.8M513.6 182.4h.8M508.5 183.0h.8M528.5 179.3h.8M530.7 179.0h.8M496.2 185.5h.8M528.3 179.1h.8M542.7 177.2h.8M527.9 178.6h.8M507.8 184.2h.8M498.9 183.9h.8M511.9 182.3h.8M509.5 182.8h.8M514.1 181.3h.8M538.1 177.7h.8M542.4 176.8h.8M542.2 176.5h.8M539.9 177.9h.8M508.9 182.7h.8M539.1 177.4h.8M540.8 177.6h.8M524.6 179.7h.8M536.5 177.3h.8M515.1 181.8h.8M541.6 177.0h.8M512.6 183.6h.8M521.8 178.8h.8M494.1 186.6h.8M525.2 179.5h.8M523.6 180.5h.8M540.4 177.2h.8M525.3 180.0h.8M513.5 183.3h.8M492.4 185.9h.8M511.7 182.9h.8M492.9 185.5h.8M537.1 177.8h.8M505.3 184.5h.8M530.8 178.7h.8M526.7 180.3h.8M544.7 176.2h.8M524.8 181.4h.8M515.4 181.6h.8M521.5 181.3h.8M517.7 181.0h.8M498.7 184.7h.8M523.1 180.8h.8M529.2 178.4h.8M539.2 176.3h.8M528.6 179.0h.8M504.5 184.6h.8M510.5 182.6h.8M536.8 176.7h.8M544.2 177.5h.8M529.5 180.1h.8M501.0 184.3h.8M540.2 176.6h.8M518.4 181.1h.8M520.1 181.2h.8M492.3 186.2h.8M511.6 182.2h.8M541.5 176.0h.8M501.4 184.3h.8M491.4 186.9h.8M512.3 182.4h.8M493.1 186.2h.8M497.4 184.7h.8M528.5 179.4h.8M532.3 179.0h.8M514.7 181.7h.8M508.6 183.1h.8M528.5 177.8h.8M537.7 177.8h.8M493.5 186.0h.8M496.5 186.2h.8M532.4 178.3h.8M531.7 178.4h.8M486.5 132.7h.8M481.5 133.2h.8M495.0 129.8h.8M502.0 127.6h.8M490.2 130.8h.8M458.9 142.1h.8M495.6 128.4h.8M462.1 140.1h.8M466.1 139.4h.8M502.1 126.9h.8M484.7 131.6h.8M456.7 141.8h.8M488.8 131.4h.8M455.6 143.0h.8M497.4 130.0h.8M495.0 129.8h.8M477.3 136.1h.8M473.8 135.7h.8M482.0 133.7h.8M493.3 129.5h.8M481.0 133.8h.8M457.7 141.2h.8M455.9 142.1h.8M494.9 131.4h.8M459.0 140.5h.8M483.2 134.7h.8M483.0 134.7h.8M492.6 128.7h.8M499.9 126.9h.8M499.8 129.6h.8M497.5 130.2h.8M488.3 132.0h.8M467.6 137.5h.8M482.9 132.7h.8M482.2 134.9h.8M482.6 133.8h.8M456.4 141.7h.8M473.7 136.5h.8M470.7 136.8h.8M493.3 129.1h.8M493.1 129.4h.8M458.8 142.2h.8M473.6 136.4h.8M489.9 131.3h.8M486.1 133.8h.8M493.6 130.4h.8M481.9 134.0h.8M488.3 132.2h.8M455.1 143.0h.8M481.5 133.1h.8M460.2 140.1h.8M455.9 142.9h.8M460.8 141.6h.8M500.7 128.9h.8M487.1 132.0h.8M503.5 126.7h.8M474.6 136.0h.8M454.2 143.6h.8M463.5 139.7h.8M492.6 130.7h.8M335.0 109.7h.8M336.1 108.8h.8M338.3 108.1h.8M336.3 108.2h.8M336.5 108.0h.8M334.9 109.2h.8M335.0 109.6h.8M337.9 108.2h.8M339.3 106.5h.8M354.2 99.0h.8M358.3 96.5h.8M355.6 97.8h.8M357.8 96.5h.8M355.5 97.9h.8M354.9 98.2h.8M354.7 98.6h.8M359.7 95.3h.8M355.1 97.8h.8M366.3 91.3h.8M368.1 91.3h.8M364.4 93.1h.8M366.9 91.4h.8M368.5 90.0h.8M368.1 90.8h.8M366.0 92.3h.8M366.6 91.0h.8M365.8 92.2h.8M384.7 81.6h.8M384.7 81.5h.8M382.1 82.8h.8M385.2 81.3h.8M383.6 82.3h.8M385.1 81.9h.8M381.2 84.0h.8M380.6 83.6h.8M384.6 82.0h.8M174.0 85.9h.8M191.6 85.7h.8M199.8 86.4h.8M215.5 85.9h.8M224.1 86.0h.8M236.2 86.1h.8M254.3 86.5h.8M263.1 86.3h.8M269.3 85.6h.8M280.7 86.2h.8M295.4 85.7h.8M306.9 85.8h.8M314.6 86.0h.8M321.6 86.5h.8M333.7 85.9h.8M342.9 86.5h.8M348.7 86.2h.8M360.6 85.9h.8M385.7 86.3h.8M393.5 85.9h.8M411.4 85.9h.8M423.1 85.7h.8M431.3 86.1h.8M437.8 85.9h.8M449.5 86.2h.8M456.6 85.8h.8M464.7 86.2h.8M476.0 85.6h.8M483.9 86.5h.8M490.6 86.0h.8M499.2 86.2h.8M509.4 86.5h.8M520.8 86.2h.8M534.7 86.5h.8M546.5 86.2h.8M347.0 86.3h.8M356.9 86.3h.8M371.9 86.4h.8M339.6 85.9h.8M355.1 86.5h.8M366.0 86.0h.8M376.7 85.2h.8M341.4 86.2h.8M380.1 86.6h.8M361.4 85.8h.8M372.8 87.4h.8M369.7 86.4h.8M344.6 86.4h.8M352.2 85.4h.8M378.4 86.2h.8M380.2 85.5h.8M353.8 86.6h.8M344.5 86.4h.8M370.6 84.8h.8M378.5 85.7h.8M360.7 86.1h.8M382.1 86.3h.8M369.3 86.7h.8M351.9 85.0h.8M358.2 85.7h.8M371.3 88.3h.8M352.5 85.1h.8M344.0 85.4h.8M343.8 85.8h.8M372.8 86.2h.8M394.0 88.0h.8M518.1 240.2h.8M243.4 178.9h.8M338.2 220.6h.8M512.4 175.1h.8M485.0 208.2h.8M323.8 76.6h.8M422.9 237.2h.8M360.4 106.3h.8M263.3 190.0h.8M464.9 196.8h.8M394.9 211.5h.8M262.6 81.1h.8M307.1 271.8h.8M304.4 152.9h.8M297.5 103.5h.8M409.6 178.8h.8M491.4 84.9h.8M269.4 91.5h.8M383.7 131.1h.8M482.8 103.5h.8M391.4 87.7h.8M369.1 123.1h.8M486.8 128.2h.8M209.8 225.9h.8M332.0 237.2h.8M174.5 175.6h.8M486.1 123.7h.8M446.8 121.5h.8M295.3 124.2h.8M313.7 259.2h.8M312.8 108.1h.8M530.4 111.9h.8M271.9 115.3h.8M378.5 194.1h.8M450.4 224.3h.8M354.2 236.1h.8M267.2 85.7h.8M227.7 193.0h.8M352.3 232.1h.8M218.7 257.1h.8M197.5 90.9h.8M216.0 186.1h.8M422.8 109.3h.8M179.1 96.8h.8M202.9 238.9h.8M503.8 144.1h.8M248.0 176.2h.8M298.8 185.6h.8M283.8 166.0h.8M487.4 252.8h.8M220.0 222.0h.8M377.9 154.2h.8M222.7 161.4h.8M219.5 259.4h.8M243.5 261.0h.8M370.2 187.8h.8M329.5 243.2h.8M285.4 141.4h.8M343.0 153.5h.8M310.5 227.1h.8M336.0 225.4h.8M353.2 129.1h.8M431.6 115.3h.8M270.5 181.9h.8M318.1 90.3h.8M472.1 123.9h.8M287.5 144.6h.8M480.0 262.2h.8M261.9 216.5h.8" stroke="#0a0aff" stroke-width="0.8" fill="none"/><path d="M274.8 267.3h.8M323.0 266.3h.8M318.3 266.4h.8M284.7 266.4h.8M455.6 265.7h.8M444.3 266.6h.8M302.8 264.7h.8M411.8 265.9h.8M447.3 267.6h.8M405.9 265.9h.8M400.4 267.0h.8M346.8 261.9h.8M459.7 266.3h.8M411.2 265.2h.8M411.1 267.6h.8M368.1 263.8h.8M373.7 265.5h.8M535.4 264.9h.8M397.1 267.8h.8M327.2 265.2h.8M474.0 265.6h.8M405.4 265.6h.8M415.9 267.0h.8M366.9 266.0h.8M295.2 266.6h.8M380.7 266.0h.8M487.0 265.2h.8M436.4 266.8h.8M458.4 267.7h.8M447.2 266.3h.8M412.5 267.4h.8M428.6 266.0h.8M408.4 264.5h.8M395.8 265.3h.8M430.8 266.9h.8M499.9 267.6h.8M441.9 264.3h.8M313.9 263.7h.8M378.1 267.1h.8M325.9 265.4h.8M331.2 265.5h.8M330.6 265.3h.8M492.3 266.0h.8M433.0 264.6h.8M440.8 266.7h.8M396.7 264.8h.8M431.1 265.1h.8M444.2 265.3h.8M537.5 267.4h.8M326.1 266.0h.8M417.4 264.5h.8M263.9 267.3h.8M395.4 266.4h.8M279.3 267.4h.8M394.0 269.0h.8M458.5 265.5h.8M273.2 267.4h.8M376.8 268.8h.8M504.1 267.9h.8M366.7 267.8h.8M362.9 268.9h.8M465.5 269.4h.8M397.1 268.0h.8M418.3 266.7h.8M266.4 267.4h.8M362.9 266.7h.8M520.3 267.7h.8M456.6 266.2h.8M315.6 264.9h.8M383.9 263.8h.8M351.1 266.7h.8M369.4 265.3h.8M367.5 269.0h.8M391.2 265.6h.8M466.9 268.4h.8M528.8 266.4h.8M441.6 266.4h.8M446.9 267.3h.8M353.8 264.3h.8M279.2 263.7h.8M429.3 266.7h.8M327.5 266.2h.8M393.1 266.5h.8M325.6 266.2h.8M487.6 265.7h.8M343.3 267.6h.8M531.2 266.6h.8M367.2 266.2h.8M412.9 266.4h.8M367.1 267.4h.8M483.1 267.9h.8M336.7 265.5h.8M275.6 264.3h.8M364.3 268.0h.8M365.3 265.7h.8M484.4 267.8h.8M390.1 266.8h.8M491.2 267.0h.8M462.5 265.6h.8M536.6 263.5h.8M418.4 267.4h.8M501.9 266.6h.8M425.5 268.4h.8M372.0 263.9h.8M424.6 266.0h.8M368.7 266.1h.8M371.8 268.3h.8M454.5 266.5h.8M398.3 265.7h.8M396.5 267.3h.8M440.1 266.4h.8M448.4 267.6h.8M317.5 264.5h.8M317.3 264.2h.8M274.4 267.0h.8M386.5 268.0h.8M403.0 264.7h.8M390.6 265.7h.8M329.7 266.4h.8M383.6 269.0h.8M334.6 264.6h.8M450.5 265.3h.8M514.7 267.4h.8M412.6 268.4h.8M310.2 266.2h.8M391.7 266.0h.8M497.5 267.4h.8M472.2 266.3h.8M373.5 266.3h.8M445.5 267.4h.8M427.8 267.0h.8M398.1 267.5h.8M340.3 265.2h.8M324.2 267.7h.8M489.0 265.3h.8M374.0 265.4h.8M511.0 266.7h.8M411.3 264.2h.8M499.9 264.8h.8M412.6 266.9h.8M400.1 266.5h.8M348.9 268.9h.8M290.8 268.4h.8M401.0 266.6h.8M368.1 266.0h.8M415.2 267.9h.8M397.3 265.9h.8M540.3 265.4h.8M285.0 263.3h.8M462.1 266.1h.8M350.3 267.6h.8M261.7 266.4h.8M498.6 265.6h.8M373.4 264.9h.8M442.2 264.9h.8M491.3 267.7h.8M503.3 267.2h.8M359.3 270.0h.8M331.5 266.3h.8M470.2 265.8h.8M293.6 264.1h.8M476.7 267.9h.8M373.6 266.3h.8M381.6 266.4h.8M406.5 267.4h.8M338.9 264.4h.8M373.7 267.2h.8M337.4 270.5h.8M457.8 262.7h.8M537.3 264.5h.8M331.1 266.0h.8M443.2 266.0h.8M442.8 265.7h.8M414.7 269.6h.8M396.8 264.4h.8M279.6 266.3h.8M405.8 266.6h.8M303.5 267.0h.8M411.3 266.6h.8M377.8 266.5h.8M356.8 267.0h.8M360.5 267.6h.8M394.0 267.3h.8M405.3 265.9h.8M406.5 267.5h.8M471.3 262.5h.8M278.8 265.0h.8M380.4 269.7h.8M427.9 269.3h.8M391.4 266.7h.8M490.8 266.8h.8M387.8 266.6h.8M476.1 265.7h.8M319.3 265.6h.8M398.5 264.5h.8M417.9 267.8h.8M529.5 266.3h.8M359.6 264.5h.8M360.3 267.7h.8M373.2 267.8h.8M335.8 267.9h.8M405.8 262.6h.8M508.5 265.8h.8M410.1 267.9h.8M443.6 266.7h.8M398.6 267.0h.8M364.3 267.7h.8M418.5 265.1h.8M497.0 265.7h.8M435.7 266.0h.8M318.7 267.1h.8M363.1 265.8h.8M539.9 267.0h.8M520.5 264.8h.8M385.8 265.8h.8M280.3 264.8h.8M444.2 266.7h.8M279.6 267.3h.8M391.4 266.7h.8M389.9 268.2h.8M440.8 265.3h.8M362.4 264.7h.8M469.7 263.6h.8M382.8 267.8h.8M344.8 266.8h.8M513.0 265.0h.8M366.9 265.3h.8M356.5 265.5h.8M303.6 267.2h.8M445.6 267.7h.8M411.8 268.9h.8M478.0 266.0h.8M258.7 267.6h.8M487.2 264.7h.8M281.8 265.6h.8M394.0 269.0h.8M381.9 266.8h.8M442.9 266.2h.8M406.6 265.3h.8M370.3 268.0h.8M398.6 263.3h.8M387.2 268.3h.8M375.0 265.4h.8M487.7 268.0h.8M511.3 264.5h.8M381.7 266.8h.8M297.5 266.9h.8M540.5 265.9h.8M425.3 265.5h.8M362.3 262.9h.8M393.8 265.6h.8M479.1 266.0h.8M424.6 268.7h.8M336.8 265.6h.8M429.5 266.1h.8M502.0 266.1h.8M443.5 265.2h.8M496.2 268.5h.8M370.9 266.4h.8M355.4 263.5h.8M472.7 266.6h.8M486.4 265.3h.8M331.8 266.5h.8M494.5 266.4h.8M474.1 266.1h.8M432.9 268.2h.8M302.7 265.6h.8M449.9 265.2h.8M541.1 267.4h.8M370.4 266.4h.8M258.3 265.2h.8M281.4 268.5h.8M398.9 266.8h.8M425.2 265.6h.8M344.4 265.9h.8M283.8 267.6h.8M317.3 267.8h.8M384.5 265.7h.8M358.5 265.3h.8M428.9 266.5h.8M288.0 267.4h.8M494.5 265.4h.8M261.4 267.7h.8M472.2 267.6h.8M378.0 263.9h.8M398.9 267.1h.8M370.8 267.3h.8M391.9 267.8h.8M461.8 265.6h.8M499.5 264.7h.8M352.4 266.8h.8M284.2 265.9h.8M459.8 265.8h.8M309.0 264.8h.8M441.9 265.7h.8M449.4 265.3h.8M461.7 266.9h.8M341.6 268.0h.8M367.9 266.9h.8M460.0 267.9h.8M483.1 265.1h.8M431.4 265.1h.8M411.1 266.6h.8M381.1 268.5h.8M432.2 266.4h.8M418.5 269.0h.8M361.2 265.0h.8M363.5 270.0h.8M379.5 268.7h.8M485.9 266.9h.8M444.6 265.8h.8M386.8 267.3h.8M360.9 266.9h.8M296.5 266.1h.8M412.8 267.8h.8M375.4 262.8h.8M429.4 268.4h.8M427.7 267.2h.8M326.6 268.4h.8M353.0 266.7h.8M397.5 264.6h.8M445.6 262.8h.8M357.0 268.1h.8M311.8 267.5h.8M426.3 264.9h.8M344.4 265.1h.8M357.0 266.4h.8M361.3 264.6h.8M388.3 266.9h.8M429.0 267.6h.8M454.4 266.0h.8M472.2 270.4h.8M501.7 265.9h.8M332.0 265.6h.8M407.9 267.6h.8M349.3 266.5h.8M384.6 269.0h.8M428.3 266.2h.8M352.3 265.6h.8M418.2 267.6h.8M403.7 266.8h.8M334.0 266.7h.8M462.6 263.6h.8M447.7 265.1h.8M378.0 265.9h.8M419.5 267.1h.8M286.0 266.1h.8M374.2 266.2h.8M404.1 266.6h.8M456.6 264.4h.8M335.5 267.3h.8M468.7 263.5h.8M430.3 269.3h.8M392.6 266.2h.8M365.6 263.4h.8M313.6 265.6h.8M355.8 265.0h.8M315.5 263.9h.8M312.5 265.9h.8M391.3 266.4h.8M505.8 267.4h.8M296.3 267.3h.8M268.1 265.4h.8M425.5 266.5h.8M365.3 266.1h.8M364.1 264.3h.8M510.1 267.0h.8M381.0 264.5h.8M364.2 266.6h.8M383.4 266.7h.8M386.3 266.3h.8M394.7 265.3h.8M282.7 266.7h.8M505.4 266.5h.8M480.9 263.2h.8M294.8 268.4h.8M429.2 264.9h.8M373.6 268.0h.8M374.2 267.5h.8M314.6 268.8h.8M406.3 266.3h.8M307.5 266.1h.8M325.0 267.0h.8M420.3 268.5h.8M325.2 267.2h.8M407.7 266.6h.8M404.8 266.6h.8M309.2 267.9h.8M476.2 266.1h.8M359.9 265.9h.8M278.6 264.8h.8M360.9 266.0h.8M360.9 266.4h.8M421.5 267.4h.8M352.9 266.7h.8M306.8 266.5h.8M455.3 264.6h.8M482.2 265.0h.8M428.4 265.5h.8M397.5 266.0h.8M387.7 266.3h.8M387.3 265.7h.8M383.1 266.7h.8M466.4 262.0h.8M467.2 265.3h.8M403.1 264.6h.8M266.2 265.5h.8M314.6 263.1h.8M269.2 267.8h.8M455.7 267.4h.8M426.3 264.6h.8M389.8 268.2h.8M478.4 266.1h.8M362.7 265.6h.8M475.7 266.0h.8M445.6 266.8h.8M451.5 264.9h.8M316.2 266.6h.8M361.3 265.9h.8M443.4 266.2h.8M295.7 264.4h.8M334.5 266.7h.8M360.5 265.7h.8M464.2 266.0h.8M397.8 266.7h.8M350.6 265.9h.8M406.0 265.0h.8M425.5 265.5h.8M413.6 265.1h.8M415.3 266.9h.8M332.1 266.4h.8M447.8 265.7h.8M438.0 266.6h.8M343.8 265.6h.8M371.9 266.8h.8M440.2 264.4h.8M418.0 265.0h.8M449.1 265.5h.8M448.0 266.7h.8M505.5 266.1h.8M491.3 267.4h.8M431.6 267.1h.8M441.4 266.4h.8M440.2 267.0h.8M326.3 266.1h.8M369.6 265.1h.8M321.7 267.3h.8M400.6 266.5h.8M390.1 265.9h.8M472.4 265.7h.8M351.2 266.0h.8M460.9 266.1h.8M419.2 266.4h.8M495.8 268.0h.8M361.3 265.9h.8M503.5 267.0h.8M434.9 267.4h.8M438.5 265.0h.8M293.7 265.9h.8M395.5 267.4h.8M402.4 265.5h.8M399.7 266.0h.8M496.7 264.6h.8M405.2 266.1h.8M414.2 264.7h.8M417.8 264.6h.8M263.4 267.8h.8M510.0 266.7h.8M532.7 268.2h.8M303.3 267.3h.8M355.3 267.0h.8M410.1 265.5h.8M405.0 265.1h.8M372.9 266.3h.8M430.7 266.0h.8M290.0 268.4h.8M436.4 264.9h.8M273.1 264.0h.8M295.2 266.4h.8M394.8 267.2h.8M351.1 267.4h.8M494.1 264.3h.8M320.2 265.3h.8M494.8 266.0h.8M374.6 266.7h.8M365.8 264.5h.8M534.6 266.1h.8M380.2 267.5h.8M371.0 262.7h.8M329.8 266.4h.8M374.7 266.7h.8M292.1 264.2h.8M480.5 266.0h.8M367.7 265.4h.8M497.0 266.5h.8M476.1 265.0h.8M368.9 266.8h.8M299.8 267.8h.8M516.6 264.4h.8M373.7 266.2h.8M483.6 266.0h.8M370.0 267.0h.8M346.4 266.1h.8M426.0 266.1h.8M346.1 265.5h.8M423.2 265.4h.8M396.0 266.3h.8M426.4 267.5h.8M319.3 266.8h.8M336.9 263.8h.8M384.3 267.2h.8M464.6 266.1h.8M417.5 265.9h.8M421.2 266.2h.8M351.8 265.4h.8M261.0 266.2h.8M444.9 268.4h.8M371.7 265.4h.8M539.0 268.6h.8M464.1 266.7h.8M329.3 266.0h.8M397.5 266.1h.8M465.1 267.6h.8M311.2 267.0h.8M360.9 265.3h.8M374.3 267.3h.8M491.8 266.3h.8M308.4 267.9h.8M440.3 265.3h.8M477.2 266.2h.8M371.6 264.8h.8M316.2 265.4h.8M288.8 267.0h.8M380.5 265.4h.8M394.7 266.5h.8M367.7 267.6h.8M270.7 265.8h.8M300.1 265.1h.8M365.7 266.8h.8M511.0 267.0h.8M437.1 267.9h.8M402.3 265.2h.8M324.5 266.9h.8M349.5 266.0h.8M487.4 266.6h.8M385.3 266.3h.8M286.7 267.9h.8M468.3 265.4h.8M389.3 270.2h.8M426.2 266.7h.8M397.9 266.0h.8M525.3 263.8h.8M485.3 270.4h.8M390.5 264.8h.8M334.1 265.7h.8M341.4 265.7h.8M374.4 266.6h.8M385.9 265.9h.8M335.2 265.5h.8M414.5 268.7h.8M485.1 265.5h.8M452.6 265.1h.8M495.7 266.0h.8M430.1 265.1h.8M433.8 265.8h.8M316.8 266.5h.8M507.8 266.4h.8M380.7 267.1h.8M376.2 265.3h.8M337.3 267.8h.8M347.6 264.9h.8M472.8 265.8h.8M431.8 265.8h.8M470.9 262.3h.8M467.8 267.0h.8M445.5 265.1h.8M473.7 265.7h.8M347.7 269.4h.8M398.7 266.5h.8M361.6 266.8h.8M526.5 265.1h.8M331.5 265.1h.8M429.3 266.8h.8M463.6 265.7h.8M262.3 265.1h.8M373.6 268.1h.8M376.9 265.9h.8M329.6 267.3h.8M500.3 265.7h.8M377.8 266.4h.8M283.1 267.1h.8M448.7 265.3h.8M525.1 268.2h.8M358.3 267.3h.8M352.4 266.0h.8M430.5 262.7h.8M370.6 266.9h.8M443.2 267.6h.8M389.7 267.8h.8M456.9 265.4h.8M402.0 265.4h.8M281.7 265.2h.8M353.8 267.7h.8M330.1 265.5h.8M292.0 268.2h.8M525.9 266.0h.8M513.3 265.1h.8M413.4 266.9h.8M343.9 266.4h.8M461.2 265.1h.8M467.3 265.4h.8M412.7 267.2h.8M445.3 265.9h.8M341.0 266.8h.8M287.6 265.8h.8M407.6 266.9h.8M311.2 267.9h.8M375.8 265.5h.8M467.3 266.2h.8M302.5 266.6h.8M401.9 267.3h.8M499.6 263.0h.8M383.3 266.0h.8M509.9 264.4h.8M315.4 266.1h.8M527.8 267.6h.8M370.4 266.9h.8M401.5 267.3h.8M341.5 265.6h.8M343.7 265.6h.8M416.0 266.6h.8M345.4 266.6h.8M452.9 265.5h.8M360.5 266.2h.8M396.9 264.9h.8M259.9 266.2h.8M461.6 266.6h.8M369.4 265.4h.8M426.0 266.9h.8M470.9 266.2h.8M384.4 266.3h.8M379.2 265.2h.8M372.6 266.7h.8M495.2 263.8h.8M393.1 267.2h.8M441.0 264.1h.8M406.4 266.7h.8M415.3 264.6h.8M366.0 264.3h.8M363.5 264.1h.8M408.2 267.8h.8M279.2 269.6h.8M383.5 266.2h.8M344.8 266.9h.8M416.6 266.3h.8M381.2 265.3h.8M326.1 265.8h.8M424.9 264.6h.8M318.1 266.7h.8M290.2 266.8h.8M453.5 267.3h.8M350.3 265.7h.8M522.5 268.2h.8M408.5 266.1h.8M305.4 266.9h.8M421.5 265.1h.8M356.5 264.8h.8M343.3 265.2h.8M360.0 267.5h.8M351.4 267.0h.8M324.5 266.4h.8M504.0 266.3h.8M365.5 265.8h.8M381.3 267.5h.8M517.3 267.4h.8M360.3 266.2h.8M287.0 267.1h.8M516.5 266.8h.8M329.2 266.6h.8M475.9 265.6h.8M285.7 266.1h.8M362.5 268.0h.8M386.3 266.1h.8M521.3 268.0h.8M361.7 264.3h.8M375.1 264.9h.8M327.5 266.2h.8M417.2 266.3h.8M455.9 265.2h.8M456.8 266.5h.8M453.1 265.7h.8M501.6 266.8h.8M412.9 266.4h.8M520.0 267.9h.8M332.0 263.4h.8M453.1 266.0h.8M361.1 267.7h.8M402.1 264.7h.8M378.7 265.5h.8M289.3 264.5h.8M371.9 265.8h.8M388.2 263.4h.8M530.6 265.9h.8M277.2 266.6h.8M453.2 267.8h.8M481.7 266.8h.8M401.4 265.6h.8M473.6 267.1h.8M376.9 266.2h.8M467.2 265.5h.8M482.5 266.5h.8M387.5 265.1h.8M525.6 263.1h.8M502.7 266.7h.8M263.6 268.0h.8M432.6 266.1h.8M524.0 264.9h.8M267.0 265.4h.8M509.7 268.6h.8M518.1 265.8h.8M406.1 268.2h.8M258.1 267.3h.8M450.6 269.7h.8M374.1 266.9h.8M453.4 266.1h.8M357.2 267.4h.8M387.6 266.4h.8M432.9 266.8h.8M403.2 264.8h.8M352.8 266.1h.8M494.1 267.2h.8M310.5 266.4h.8M387.2 265.1h.8M450.1 265.8h.8M330.6 266.2h.8M358.9 269.6h.8M500.1 268.0h.8M368.3 264.0h.8M431.2 268.5h.8M419.8 267.5h.8M320.5 267.4h.8M409.0 266.4h.8M388.2 265.9h.8M298.8 265.5h.8M523.5 263.7h.8M435.5 266.6h.8M527.5 266.0h.8M509.5 265.6h.8M528.6 267.5h.8M421.7 266.7h.8M310.6 266.5h.8M420.7 266.0h.8M433.4 267.9h.8M408.1 266.7h.8M281.1 266.2h.8M428.9 266.0h.8M265.4 265.6h.8M451.3 266.9h.8M389.0 264.0h.8M499.1 267.1h.8M536.7 266.1h.8M409.7 267.6h.8M424.5 265.6h.8M318.2 265.3h.8M400.2 266.1h.8M390.5 266.2h.8M414.5 265.3h.8M363.2 266.0h.8M366.5 267.0h.8M465.2 267.4h.8M338.6 266.6h.8M443.1 266.7h.8M501.1 265.7h.8M380.0 265.2h.8M399.8 266.4h.8M360.3 264.5h.8M529.5 264.6h.8M458.3 267.7h.8M404.5 266.8h.8M476.7 266.2h.8M327.1 267.1h.8M465.6 265.4h.8M301.9 268.9h.8M380.5 266.1h.8M324.7 265.1h.8M308.1 265.0h.8M363.0 269.2h.8M354.3 267.3h.8M401.3 266.1h.8M418.8 265.4h.8M487.0 263.4h.8M485.3 266.6h.8M488.7 266.0h.8M344.4 267.0h.8M416.3 266.4h.8M344.6 264.3h.8M517.7 264.5h.8M368.4 266.6h.8M506.3 266.8h.8M441.8 264.4h.8M538.8 266.7h.8M274.6 266.7h.8M477.1 265.7h.8M282.8 264.5h.8M374.2 267.2h.8M442.8 265.0h.8M497.6 267.5h.8M405.0 268.1h.8M399.0 265.4h.8M453.6 265.2h.8M517.8 266.7h.8M486.3 266.8h.8M478.6 266.8h.8M447.8 266.6h.8M410.6 266.2h.8M403.1 267.2h.8M364.8 266.7h.8M422.9 266.1h.8M440.3 266.8h.8M367.2 265.7h.8M435.0 266.4h.8M363.7 268.3h.8M313.0 268.6h.8M329.5 270.6h.8M350.5 265.4h.8M502.0 265.3h.8M467.8 266.6h.8M307.5 266.0h.8M388.1 268.1h.8M459.4 265.3h.8M511.2 265.8h.8M412.9 266.7h.8M342.7 267.8h.8M372.8 265.5h.8M452.2 266.5h.8M294.5 266.5h.8M393.5 266.2h.8M351.2 265.3h.8M519.9 267.0h.8M359.1 266.8h.8M292.1 266.6h.8M403.0 265.4h.8M301.4 264.6h.8M429.5 268.2h.8M360.9 265.2h.8M370.3 264.6h.8M369.7 264.1h.8M280.0 265.8h.8M311.3 264.3h.8M481.9 267.8h.8M342.4 265.1h.8M528.7 267.3h.8M328.9 266.8h.8M411.6 267.0h.8M355.3 266.3h.8M393.8 266.1h.8M320.9 267.3h.8M445.4 266.3h.8M274.9 268.3h.8M369.4 267.5h.8M380.2 268.4h.8M423.0 266.3h.8M500.8 269.9h.8M354.9 266.0h.8M528.9 267.4h.8M336.0 266.9h.8M447.6 264.7h.8M447.0 266.8h.8M512.7 265.2h.8M471.1 270.2h.8M369.5 265.1h.8M279.4 266.6h.8M371.1 268.1h.8M366.3 266.4h.8M462.0 265.0h.8M300.2 266.1h.8M504.4 268.4h.8M418.2 265.7h.8M432.3 268.3h.8M310.2 266.1h.8M455.8 268.6h.8M377.2 268.2h.8M435.9 266.9h.8M378.8 265.0h.8M420.4 269.2h.8M289.9 265.9h.8M488.9 265.1h.8M392.2 268.5h.8M450.9 265.2h.8M345.7 264.6h.8M497.1 268.0h.8M375.6 265.5h.8M271.3 266.4h.8M412.8 266.7h.8M420.0 266.0h.8M487.6 266.4h.8M275.7 266.0h.8M308.2 266.1h.8M357.5 268.0h.8M355.0 266.0h.8M368.9 265.3h.8M392.2 265.3h.8M374.2 264.6h.8M494.9 264.6h.8M351.7 266.3h.8M472.9 267.6h.8M400.6 267.6h.8M348.6 265.3h.8M330.1 266.5h.8M512.4 266.2h.8M417.6 264.0h.8M339.3 265.8h.8M484.0 268.1h.8M455.1 266.3h.8M337.1 268.8h.8M519.4 267.1h.8M279.1 266.2h.8M404.7 267.2h.8M518.5 265.7h.8M261.7 266.3h.8M337.2 265.1h.8M270.2 267.4h.8M411.1 268.0h.8M436.6 265.0h.8M450.1 266.0h.8M470.2 267.1h.8M263.0 264.8h.8M381.1 267.0h.8M408.9 267.4h.8M417.2 264.8h.8M456.7 265.4h.8M274.2 268.2h.8M414.7 266.9h.8M440.8 266.1h.8M457.0 266.5h.8M423.2 267.0h.8M433.3 265.9h.8M397.5 268.0h.8M481.6 266.4h.8M366.3 265.3h.8M395.7 264.6h.8M359.1 265.9h.8M446.4 265.1h.8M448.8 267.9h.8M367.1 266.6h.8M334.5 267.5h.8M407.8 266.0h.8M363.7 266.2h.8M453.8 264.8h.8M309.3 267.8h.8M419.0 266.3h.8M441.3 264.3h.8M415.3 266.5h.8M288.6 265.7h.8M470.5 266.1h.8M306.5 265.9h.8M373.8 265.9h.8M366.5 266.2h.8M518.6 265.5h.8M519.2 265.6h.8M411.7 266.0h.8M432.7 266.8h.8M375.9 267.5h.8M391.5 267.7h.8M374.3 266.6h.8M313.0 266.2h.8M533.1 266.1h.8M344.9 265.2h.8M295.5 267.8h.8M469.2 267.0h.8M275.3 266.5h.8M481.5 265.2h.8M521.6 265.7h.8M476.2 265.1h.8M504.9 266.5h.8M361.1 268.8h.8M422.4 268.3h.8M542.7 265.2h.8M298.9 267.9h.8M374.7 266.5h.8M275.6 267.0h.8M368.7 266.9h.8M379.8 263.9h.8M263.3 267.6h.8M475.4 265.7h.8M371.5 266.3h.8M407.2 265.1h.8M405.4 264.4h.8M400.0 266.4h.8M361.0 266.7h.8M377.9 268.8h.8M362.2 265.6h.8M389.9 266.5h.8M533.5 266.9h.8M377.5 266.8h.8M371.2 265.8h.8M421.1 267.8h.8M261.3 266.0h.8M414.3 265.4h.8M321.5 265.5h.8M358.1 266.4h.8M393.8 265.5h.8M411.5 266.9h.8M492.9 266.4h.8M471.4 264.9h.8M509.9 267.9h.8M451.0 266.8h.8M339.7 266.0h.8M318.7 264.8h.8M409.4 267.5h.8M361.0 265.6h.8M452.4 266.0h.8M483.9 266.6h.8M470.4 265.8h.8M395.9 267.5h.8M347.4 266.1h.8M271.1 266.7h.8M300.8 265.9h.8M330.8 265.4h.8M384.6 266.6h.8M318.7 265.1h.8M457.9 267.2h.8M489.6 264.2h.8M276.2 266.7h.8M366.7 266.6h.8M353.5 266.5h.8M410.3 266.9h.8M364.7 267.4h.8M483.3 266.1h.8M392.0 265.9h.8M441.1 266.7h.8M278.8 263.4h.8M349.2 267.7h.8M515.5 266.1h.8M387.7 265.2h.8M504.5 265.0h.8M353.8 266.6h.8M400.6 268.4h.8M321.5 265.3h.8M390.1 265.8h.8M423.4 265.5h.8M361.8 267.6h.8M479.4 263.1h.8M294.6 266.8h.8M477.4 267.9h.8M507.8 264.9h.8M364.6 266.5h.8M345.6 264.8h.8M333.5 264.2h.8M450.7 265.5h.8M329.5 267.3h.8M493.5 264.9h.8M344.2 266.7h.8M425.9 268.0h.8M305.7 266.3h.8M508.4 265.4h.8M364.9 265.9h.8M453.3 266.6h.8M502.5 267.8h.8M319.9 266.0h.8M433.7 265.8h.8M324.1 267.9h.8M428.7 264.9h.8M418.7 265.0h.8M505.4 266.5h.8M483.2 264.6h.8M378.7 266.5h.8M374.4 265.8h.8M422.7 263.6h.8M442.0 268.2h.8M420.6 268.2h.8M342.3 266.5h.8M383.2 268.2h.8M432.4 268.6h.8M416.4 265.9h.8M455.9 266.5h.8M327.3 265.9h.8M414.6 267.4h.8M487.0 264.6h.8M405.3 265.9h.8M389.2 266.0h.8M375.7 268.0h.8M424.5 264.9h.8M391.5 266.8h.8M429.3 264.7h.8M496.1 266.2h.8M467.0 264.2h.8M308.7 266.2h.8M317.4 268.7h.8M427.5 265.4h.8M517.3 266.9h.8M410.0 266.1h.8M479.2 264.4h.8M338.2 265.9h.8M314.9 265.7h.8M350.9 266.9h.8M390.7 267.2h.8M442.5 265.0h.8M496.7 265.6h.8M380.7 265.1h.8M458.2 264.9h.8M366.7 266.0h.8M430.7 266.2h.8M483.4 267.2h.8M424.7 265.2h.8M468.0 266.7h.8M468.4 268.5h.8M424.0 265.2h.8M531.4 269.0h.8M306.7 265.4h.8M292.4 266.3h.8M294.9 265.4h.8M316.0 264.2h.8M331.0 265.2h.8M420.5 269.0h.8M476.5 266.0h.8M383.3 266.4h.8M349.0 265.9h.8M412.4 267.5h.8M386.9 266.3h.8M353.6 266.0h.8M369.7 265.5h.8M389.8 265.2h.8M473.9 266.0h.8M446.8 267.1h.8M391.3 266.3h.8M422.0 267.9h.8M347.8 264.4h.8M435.4 268.6h.8M464.9 266.9h.8M344.0 267.6h.8M502.6 267.0h.8M405.8 268.1h.8M421.2 266.5h.8M298.6 264.0h.8M373.1 266.5h.8M397.3 266.4h.8M259.9 267.4h.8M391.6 268.9h.8M336.3 264.5h.8M275.2 265.3h.8M408.4 264.8h.8M419.4 264.1h.8M293.3 264.6h.8M391.3 264.3h.8M373.1 265.1h.8M328.7 265.6h.8M523.5 264.2h.8M341.2 266.2h.8M430.8 264.8h.8M457.8 266.3h.8M440.2 265.8h.8M497.6 265.3h.8M416.4 265.6h.8M276.9 263.5h.8M462.2 264.2h.8M402.6 268.5h.8M394.7 264.7h.8M350.4 266.7h.8M318.2 266.8h.8M521.7 267.0h.8M499.8 265.5h.8M333.0 266.5h.8M270.3 268.7h.8M396.1 267.7h.8M540.4 268.1h.8M455.7 265.6h.8M390.0 266.6h.8M464.2 265.8h.8M340.0 268.1h.8M432.8 266.2h.8M408.1 266.2h.8M448.8 268.0h.8M450.8 265.2h.8M461.4 267.6h.8M432.9 267.0h.8M449.1 266.5h.8M517.7 266.6h.8M430.7 265.1h.8M540.2 269.3h.8M489.2 266.1h.8M504.0 267.2h.8M366.9 265.4h.8M427.1 267.8h.8M478.1 264.8h.8M371.0 266.3h.8M378.5 265.2h.8M370.5 266.6h.8M497.8 266.7h.8M462.6 267.4h.8M354.7 267.0h.8M313.7 267.2h.8M396.2 267.1h.8M528.6 267.8h.8M410.2 266.7h.8M399.8 266.8h.8M457.7 263.9h.8M472.2 267.8h.8M474.4 264.7h.8M540.0 266.1h.8M369.1 267.5h.8M345.8 264.7h.8M390.2 265.0h.8M397.5 266.7h.8M363.1 266.8h.8M484.2 267.7h.8M511.4 268.7h.8M330.1 266.0h.8M380.9 265.7h.8M294.0 266.0h.8M408.2 263.9h.8M405.6 264.4h.8M330.5 266.5h.8M269.0 266.1h.8M487.3 267.1h.8M387.4 268.2h.8M415.6 267.9h.8M356.0 266.4h.8M448.4 267.0h.8M362.5 266.2h.8M472.2 266.2h.8M425.8 265.5h.8M418.7 267.6h.8M342.3 267.4h.8M411.0 265.5h.8M340.6 266.2h.8M455.6 266.6h.8M409.7 266.0h.8M507.2 266.1h.8M391.5 267.2h.8M495.4 266.4h.8M359.2 263.4h.8M412.2 266.8h.8M313.1 264.1h.8M399.6 265.9h.8M358.7 265.2h.8M433.2 267.9h.8M285.4 265.5h.8M467.0 265.8h.8M332.7 265.8h.8M363.4 266.2h.8M399.7 268.3h.8M455.9 266.7h.8M426.9 264.8h.8M379.6 266.4h.8M376.7 265.6h.8M500.0 266.0h.8M369.0 265.5h.8M526.4 266.3h.8M436.7 266.2h.8M432.4 267.9h.8M471.0 265.0h.8M459.8 264.9h.8M486.3 265.9h.8M375.1 265.3h.8M460.9 264.9h.8M397.1 267.7h.8M495.9 265.1h.8M306.9 266.5h.8M392.9 265.9h.8M340.4 268.6h.8M473.7 265.2h.8M521.3 266.5h.8M489.1 267.7h.8M268.8 265.2h.8M468.0 266.8h.8M410.7 265.4h.8M388.3 268.2h.8M506.8 265.5h.8M375.9 265.8h.8M433.4 266.0h.8M375.0 265.9h.8M431.8 265.1h.8M346.8 266.7h.8M520.7 267.4h.8M335.6 265.8h.8M526.9 264.9h.8M403.6 265.8h.8M285.2 264.6h.8M407.8 266.0h.8M448.7 268.7h.8M484.9 266.1h.8M302.8 268.1h.8M337.7 267.1h.8M331.5 266.9h.8M451.3 265.3h.8M423.9 267.0h.8M372.7 267.1h.8M486.5 265.8h.8M490.8 264.9h.8M406.2 267.3h.8M510.0 267.3h.8M537.4 268.7h.8M423.9 268.1h.8M346.8 265.1h.8M327.6 268.3h.8M322.1 265.0h.8M414.9 265.3h.8M341.2 267.5h.8M416.9 267.3h.8M407.5 265.6h.8M517.4 268.3h.8M338.5 267.0h.8M452.0 264.2h.8M411.6 265.2h.8M413.4 265.8h.8M446.2 264.6h.8M436.0 268.0h.8M415.1 268.2h.8M425.8 266.4h.8M433.6 268.0h.8M410.5 267.3h.8M313.5 265.4h.8M310.7 262.7h.8M355.0 264.4h.8M402.3 266.0h.8M410.7 266.6h.8M382.3 268.0h.8M430.1 267.3h.8M417.6 267.5h.8M361.2 268.1h.8M473.9 266.5h.8M347.0 266.3h.8M434.1 266.8h.8M306.4 270.6h.8M382.5 266.2h.8M516.9 266.4h.8M360.5 267.3h.8M363.8 265.1h.8M290.4 267.7h.8M387.8 265.8h.8M324.5 264.6h.8M381.4 268.8h.8M368.4 267.1h.8M347.8 265.7h.8M442.3 267.8h.8M444.0 267.3h.8M487.3 267.3h.8M481.2 266.5h.8M401.9 264.2h.8M385.6 267.2h.8M333.3 265.3h.8M356.6 267.6h.8M369.7 269.2h.8M284.2 267.4h.8M262.3 264.0h.8M441.7 265.5h.8M411.7 266.1h.8M394.5 265.8h.8M406.3 269.7h.8M501.6 266.1h.8M482.5 267.3h.8M355.9 265.2h.8M467.5 266.9h.8M293.7 266.1h.8M381.8 266.5h.8M432.7 264.8h.8M322.7 266.9h.8M541.8 267.9h.8M472.5 266.3h.8M416.1 265.8h.8M287.2 265.7h.8M410.3 265.9h.8M385.2 265.3h.8M319.2 270.1h.8M384.8 268.2h.8M481.9 266.7h.8M410.1 266.8h.8M365.5 266.3h.8M373.5 263.2h.8M464.0 269.1h.8M413.1 267.8h.8M468.7 264.9h.8M454.0 266.9h.8M473.2 268.0h.8M471.5 267.8h.8M413.2 266.4h.8M358.0 266.2h.8M487.6 266.8h.8M415.0 267.5h.8M357.8 266.2h.8M471.3 266.7h.8M302.4 266.7h.8M382.3 266.0h.8M532.9 266.0h.8M504.4 266.1h.8M270.8 266.2h.8M381.9 265.8h.8M301.5 268.6h.8M407.6 266.4h.8M440.8 265.9h.8M348.5 267.1h.8M418.7 267.1h.8M409.4 267.3h.8M539.0 265.2h.8M415.4 268.2h.8M477.1 265.1h.8M345.7 267.3h.8M380.3 266.2h.8M510.4 265.1h.8M378.6 264.9h.8M335.2 267.9h.8M488.6 266.8h.8M385.2 266.9h.8M377.0 267.2h.8M346.7 266.4h.8M392.4 264.8h.8M297.0 263.4h.8M337.6 268.3h.8M421.6 266.6h.8M490.0 267.0h.8M495.6 265.6h.8M470.3 267.4h.8M340.3 265.2h.8M298.1 266.3h.8M426.1 268.0h.8M354.6 264.3h.8M366.7 265.7h.8M377.1 267.9h.8M451.5 266.8h.8M469.5 266.7h.8M411.4 268.1h.8M415.1 266.3h.8M474.0 267.3h.8M469.7 266.3h.8M435.6 268.4h.8M388.8 264.8h.8M339.5 267.3h.8M357.1 265.7h.8M452.6 267.1h.8M400.6 267.0h.8M364.6 265.4h.8M437.8 265.1h.8M421.0 267.4h.8M379.9 263.6h.8M497.7 266.7h.8M523.2 267.7h.8M447.5 267.0h.8M260.0 265.4h.8M279.1 267.6h.8M438.2 265.5h.8M382.2 267.1h.8M375.8 264.9h.8M386.3 267.5h.8M327.1 268.1h.8M280.6 266.7h.8M392.6 267.7h.8M450.2 265.9h.8M415.5 266.5h.8M441.5 266.0h.8M414.0 266.2h.8M368.5 266.3h.8M379.9 267.3h.8M402.2 266.2h.8M394.5 266.0h.8M368.9 266.0h.8M379.0 267.0h.8M395.9 263.4h.8M413.1 267.5h.8M429.3 267.0h.8M384.2 266.1h.8M269.9 266.4h.8M394.5 265.6h.8M419.4 267.8h.8M401.8 266.2h.8M508.4 265.5h.8M476.1 266.8h.8M287.7 267.9h.8M437.6 266.9h.8M317.2 267.2h.8M337.2 265.6h.8M409.4 264.2h.8M431.7 265.6h.8M477.7 265.0h.8M392.7 266.2h.8M390.8 266.5h.8M503.4 264.6h.8M395.8 266.7h.8M523.0 267.4h.8M357.4 266.9h.8M425.0 265.8h.8M333.6 268.1h.8M309.3 267.9h.8M309.8 267.7h.8M401.2 266.3h.8M444.0 264.4h.8M329.6 265.8h.8M378.6 269.1h.8M390.7 265.4h.8M469.0 266.4h.8M471.2 265.8h.8M291.2 266.3h.8M435.2 267.1h.8M279.3 267.6h.8M479.7 264.9h.8M437.4 265.9h.8M506.7 265.0h.8M457.8 265.7h.8M503.5 265.7h.8M268.0 265.2h.8M394.3 268.4h.8M511.7 265.1h.8M517.0 266.8h.8M443.1 266.5h.8M474.4 269.8h.8M401.8 268.0h.8M425.4 265.6h.8M335.3 264.1h.8M328.3 264.5h.8M531.6 265.9h.8M387.9 268.4h.8M371.8 267.5h.8M395.7 265.0h.8M415.3 266.4h.8M472.8 265.9h.8M482.1 265.3h.8M424.0 267.0h.8M514.3 264.8h.8M410.9 264.5h.8M412.5 265.9h.8M335.3 266.8h.8M410.7 265.5h.8M350.1 265.0h.8M336.6 267.0h.8M316.1 266.9h.8M395.2 268.6h.8M483.9 268.2h.8M395.8 264.4h.8M416.9 265.7h.8M368.3 264.2h.8M352.0 266.9h.8M450.2 264.2h.8M484.7 262.6h.8M413.6 266.0h.8M280.8 267.7h.8M396.5 266.5h.8M354.4 266.5h.8M382.3 264.3h.8M519.1 265.1h.8M494.2 265.0h.8M422.4 268.1h.8M421.0 265.6h.8M358.5 265.8h.8M271.8 266.2h.8M373.7 265.4h.8M384.5 267.4h.8M373.2 265.0h.8M478.0 268.2h.8M337.4 267.3h.8M435.0 265.7h.8M394.5 266.2h.8M435.0 265.9h.8M363.4 266.5h.8M368.6 264.4h.8M441.2 267.4h.8M382.7 264.5h.8M441.7 266.7h.8M465.6 265.6h.8M311.1 265.5h.8M298.7 264.8h.8M368.6 266.8h.8M362.4 268.7h.8M501.7 266.0h.8M433.5 265.2h.8M415.6 266.1h.8M449.9 264.6h.8M433.4 263.9h.8M296.0 264.5h.8M386.5 267.2h.8M443.7 265.4h.8M423.5 267.7h.8M427.2 263.8h.8M346.0 265.9h.8M479.7 267.4h.8M401.2 267.5h.8M378.3 265.9h.8M329.7 268.6h.8M406.4 264.5h.8M469.1 267.4h.8M519.9 267.8h.8M354.1 269.3h.8M373.7 265.7h.8M472.1 266.7h.8M319.5 265.8h.8M487.3 266.9h.8M342.1 267.5h.8M433.6 267.6h.8M349.4 270.2h.8M381.8 266.4h.8M448.2 264.7h.8M318.4 266.0h.8M322.4 263.9h.8M480.4 267.6h.8M514.0 268.1h.8M454.6 266.5h.8M472.6 266.6h.8M483.5 265.2h.8M284.6 267.7h.8M464.8 267.8h.8M435.3 265.8h.8M355.7 266.7h.8M484.7 265.2h.8M293.1 269.9h.8M390.0 268.6h.8M380.5 264.7h.8M355.7 267.9h.8M425.1 266.4h.8M308.1 268.7h.8M430.4 264.9h.8M418.7 266.5h.8M387.8 268.0h.8M354.1 265.3h.8M433.5 266.6h.8M437.2 268.2h.8M520.0 268.8h.8M361.0 267.1h.8M428.6 268.4h.8M297.0 268.1h.8M472.5 265.4h.8M386.4 267.4h.8M429.1 266.7h.8M383.8 266.3h.8M462.1 264.9h.8M462.3 266.8h.8M399.5 267.8h.8M522.2 265.7h.8M380.0 265.5h.8M362.6 266.0h.8M443.7 265.5h.8M392.3 267.4h.8M402.5 264.9h.8M281.9 267.2h.8M418.1 266.7h.8M439.5 265.3h.8M416.1 265.2h.8M511.0 264.0h.8M425.0 265.2h.8M463.4 268.4h.8M262.8 265.1h.8M414.2 265.0h.8M407.0 265.6h.8M374.6 265.1h.8M511.0 267.1h.8M420.8 264.2h.8M359.1 266.3h.8M533.1 266.9h.8M371.5 267.7h.8M542.6 266.7h.8M326.9 264.5h.8M396.5 265.4h.8M469.0 263.1h.8M264.5 265.2h.8M411.7 266.7h.8M268.9 266.7h.8M370.3 265.8h.8M374.2 266.4h.8M422.0 262.8h.8M394.5 266.2h.8M396.0 264.0h.8M458.5 265.5h.8M446.6 265.3h.8M402.7 267.6h.8M330.8 266.2h.8M413.3 266.8h.8M455.2 268.7h.8M519.5 268.5h.8M429.4 268.3h.8M364.3 265.5h.8M481.1 265.8h.8M396.9 266.5h.8M363.3 264.5h.8M352.7 267.7h.8M415.1 266.8h.8M459.6 269.4h.8M509.9 265.5h.8M361.9 265.7h.8M409.6 270.3h.8M501.1 264.2h.8M283.8 266.6h.8M375.8 266.2h.8M364.2 266.2h.8M430.1 267.9h.8M380.5 263.5h.8M494.2 265.6h.8M399.0 267.6h.8M273.7 266.3h.8M419.3 267.3h.8M357.8 265.8h.8M285.2 268.2h.8M371.4 266.4h.8M287.1 267.5h.8M326.3 266.9h.8M479.2 265.9h.8M335.3 265.8h.8M487.4 265.8h.8M509.4 265.9h.8M426.0 264.5h.8M320.1 268.8h.8M440.6 263.9h.8M355.5 265.3h.8M192.2 266.5h.8M226.4 267.6h.8M250.3 268.0h.8M172.6 266.8h.8M204.1 266.5h.8M250.5 268.5h.8M188.1 266.6h.8M202.8 266.7h.8M234.9 267.6h.8M223.7 267.0h.8M203.2 267.1h.8M256.6 267.4h.8M257.8 266.4h.8M222.9 267.3h.8M225.7 267.9h.8M205.8 267.0h.8M191.9 266.2h.8M231.8 266.5h.8M215.8 266.7h.8M257.0 266.6h.8M235.8 268.3h.8M190.1 267.1h.8M216.9 266.9h.8M175.3 266.6h.8M202.0 266.6h.8M213.1 266.8h.8M182.9 266.6h.8M253.6 264.9h.8M184.2 267.1h.8M189.7 266.8h.8M185.2 267.0h.8M227.9 264.9h.8M244.6 267.4h.8M199.6 267.1h.8M249.3 269.1h.8M255.4 266.8h.8M232.4 268.5h.8M208.6 268.8h.8M221.3 267.9h.8M174.7 268.7h.8M233.0 266.3h.8M213.7 265.5h.8M191.6 267.5h.8M232.4 266.8h.8M252.5 267.0h.8M209.4 266.8h.8M199.8 267.0h.8M198.4 266.6h.8M240.4 265.6h.8M228.0 266.5h.8M197.0 267.2h.8M206.8 266.5h.8M257.1 268.4h.8M247.0 268.4h.8M242.4 267.2h.8M216.9 267.7h.8M243.5 268.5h.8M185.9 265.5h.8M242.2 266.6h.8M188.7 266.0h.8M186.5 268.2h.8M185.7 267.6h.8M186.2 268.0h.8M250.0 266.5h.8M253.2 265.2h.8M182.8 267.3h.8M250.6 268.0h.8M210.4 267.5h.8M244.8 266.6h.8M199.8 266.7h.8M248.4 267.0h.8M174.1 267.3h.8M199.9 269.1h.8M223.0 267.2h.8M244.1 266.7h.8M214.6 266.8h.8M186.4 267.2h.8M192.1 266.8h.8M174.4 267.1h.8M204.8 268.3h.8M245.8 265.8h.8M193.0 267.0h.8M237.9 267.8h.8M228.8 266.0h.8M208.7 266.5h.8M211.7 268.2h.8M206.8 267.4h.8M216.9 266.3h.8M189.0 268.1h.8M184.3 267.2h.8M205.6 264.7h.8M247.6 265.5h.8M204.0 267.2h.8M236.1 269.2h.8M215.3 266.9h.8M226.8 267.4h.8M187.7 268.1h.8M221.0 268.2h.8M238.6 266.3h.8M190.1 267.4h.8M254.6 266.4h.8M214.4 269.2h.8M239.3 266.2h.8M245.8 267.4h.8M204.3 266.9h.8M179.7 267.7h.8M213.4 266.3h.8M256.0 267.5h.8M187.8 267.0h.8M230.5 267.9h.8M214.6 267.0h.8M207.5 267.5h.8M176.6 268.0h.8M214.8 266.9h.8M212.0 265.7h.8M237.5 265.4h.8M225.2 267.3h.8M215.8 265.8h.8M189.3 265.9h.8M204.9 267.5h.8M246.2 267.3h.8M219.1 266.7h.8M212.1 266.9h.8M200.1 268.1h.8M222.9 267.5h.8M252.7 267.7h.8M236.5 266.6h.8M219.8 267.2h.8M191.8 264.9h.8M178.9 268.9h.8M245.5 267.4h.8M242.2 267.8h.8M197.3 267.6h.8M186.6 268.5h.8M219.8 266.3h.8M256.3 266.6h.8M223.0 268.0h.8M208.2 265.5h.8M187.7 267.9h.8M249.5 267.3h.8M236.1 267.7h.8M208.5 267.3h.8M226.4 267.9h.8M251.1 266.1h.8M205.6 267.6h.8M233.5 267.1h.8M216.0 267.3h.8M196.4 267.2h.8M197.9 267.4h.8M194.0 267.1h.8M376.6 261.3h.8M367.7 258.5h.8M328.8 261.6h.8M377.6 259.5h.8M345.2 260.1h.8M375.8 258.4h.8M413.4 259.7h.8M416.8 259.2h.8M303.9 259.3h.8M424.0 259.4h.8M398.9 259.3h.8M376.5 259.8h.8M378.5 258.9h.8M408.4 258.3h.8M285.6 260.7h.8M331.2 260.6h.8M343.5 259.3h.8M306.7 259.3h.8M446.2 260.1h.8M380.6 260.4h.8M348.8 259.0h.8M331.8 260.6h.8M390.8 259.1h.8M295.7 260.1h.8M455.9 259.9h.8M366.8 260.1h.8M409.8 259.3h.8M390.4 259.8h.8M332.0 260.4h.8M360.2 260.0h.8M336.0 260.0h.8M417.2 259.7h.8M412.7 261.0h.8M456.8 258.4h.8M451.7 259.7h.8M288.0 258.9h.8M458.2 258.8h.8M409.6 260.5h.8M396.6 258.9h.8M329.0 261.4h.8M449.2 259.3h.8M354.1 260.0h.8M341.3 259.4h.8M410.8 259.7h.8M367.7 259.7h.8M436.0 260.0h.8M400.6 261.0h.8M411.2 260.7h.8M331.2 259.9h.8M322.9 259.4h.8M431.7 260.3h.8M386.4 260.8h.8M430.6 259.0h.8M458.5 260.0h.8M444.4 261.0h.8M457.2 258.5h.8M360.1 259.9h.8M394.0 259.7h.8M420.7 260.6h.8M388.8 259.0h.8M335.5 259.4h.8M450.2 258.0h.8M355.8 260.1h.8M443.5 259.0h.8M434.3 259.9h.8M314.3 260.1h.8M347.4 258.5h.8M419.6 259.3h.8M361.2 260.1h.8M397.1 259.0h.8M419.6 259.3h.8M394.2 260.2h.8M432.6 259.7h.8M400.0 259.2h.8M433.3 261.7h.8M360.0 259.3h.8M329.4 259.3h.8M411.3 258.6h.8M397.9 260.5h.8M414.2 259.4h.8M367.0 260.7h.8M362.4 259.0h.8M392.9 260.7h.8M432.8 260.1h.8M389.9 260.7h.8M457.4 258.5h.8M384.7 259.1h.8M424.1 259.0h.8M427.0 260.0h.8M413.4 258.7h.8M387.8 260.5h.8M417.9 259.1h.8M394.6 258.5h.8M427.1 260.7h.8M349.2 260.0h.8M326.6 259.3h.8M292.1 259.6h.8M392.5 259.4h.8M438.4 260.7h.8M373.3 260.6h.8M422.9 259.7h.8M421.4 259.1h.8M429.5 260.4h.8M410.8 260.2h.8M454.2 259.5h.8M383.9 260.1h.8M371.9 260.6h.8M455.3 260.7h.8M426.3 260.3h.8M332.1 259.2h.8M288.8 259.7h.8M380.9 259.3h.8M331.6 260.0h.8M351.6 260.9h.8M321.3 260.2h.8M314.1 259.7h.8M357.3 258.9h.8M443.2 261.2h.8M372.4 259.1h.8M411.7 260.1h.8M387.2 258.9h.8M336.1 258.7h.8M395.5 258.7h.8M421.9 259.4h.8M333.9 260.0h.8M380.9 258.2h.8M442.0 259.0h.8M323.3 259.6h.8M286.1 260.8h.8M395.3 258.7h.8M400.2 259.7h.8M430.6 259.9h.8M289.2 258.3h.8M332.2 259.1h.8M426.9 258.4h.8M341.7 259.6h.8M434.2 257.7h.8M437.5 260.1h.8M382.8 260.4h.8M408.5 260.8h.8M441.6 258.4h.8M366.0 258.8h.8M313.7 259.8h.8M381.3 260.2h.8M457.7 260.5h.8M348.8 259.5h.8M317.4 260.9h.8M378.8 259.2h.8M412.7 260.8h.8M338.5 259.3h.8M445.0 259.8h.8M303.6 258.8h.8M351.7 259.6h.8M374.1 260.6h.8M451.3 260.0h.8M391.0 259.8h.8M440.3 260.2h.8M344.2 259.4h.8M406.6 259.7h.8M373.8 257.7h.8M395.5 259.7h.8M409.0 260.1h.8M341.5 257.9h.8M357.4 259.2h.8M389.1 259.9h.8M338.0 257.2h.8M392.7 259.0h.8M425.0 259.1h.8M346.6 259.7h.8M337.1 259.5h.8M381.1 261.5h.8M443.5 260.9h.8M384.9 258.2h.8M322.2 257.6h.8M360.0 262.0h.8M288.6 259.2h.8M452.3 259.7h.8M372.1 260.8h.8M436.3 260.2h.8M419.3 260.7h.8M295.3 260.1h.8M420.0 260.1h.8M397.5 258.2h.8M347.9 260.0h.8M420.9 259.7h.8M290.1 261.2h.8M406.9 259.6h.8M378.0 259.1h.8M455.6 261.9h.8M396.0 260.2h.8M366.1 259.7h.8M323.4 259.3h.8M298.5 261.1h.8M443.5 261.7h.8M367.3 261.0h.8M308.9 259.7h.8M347.6 259.4h.8M313.9 260.2h.8M377.7 261.5h.8M346.2 259.7h.8M390.8 259.8h.8M440.0 260.1h.8M387.5 260.9h.8M371.5 260.9h.8M444.3 260.3h.8M417.0 259.1h.8M332.7 261.8h.8M344.1 260.2h.8M353.2 260.1h.8M342.7 259.4h.8M292.9 259.7h.8M428.5 260.2h.8M429.5 259.4h.8M289.4 259.9h.8M359.2 260.1h.8M450.6 261.1h.8M453.0 259.9h.8M423.8 259.2h.8M394.0 258.7h.8M402.1 259.3h.8M445.1 260.2h.8M287.4 258.0h.8M292.8 260.0h.8M454.5 260.0h.8M296.8 260.8h.8M397.0 258.8h.8M422.9 259.5h.8M453.1 259.3h.8M424.4 258.6h.8M388.1 258.3h.8M400.1 259.5h.8M449.6 260.2h.8M370.5 259.8h.8M446.1 260.1h.8M454.6 260.0h.8M419.0 261.5h.8M440.8 260.1h.8M380.7 258.2h.8M393.2 259.5h.8M415.0 259.3h.8M406.6 260.0h.8M329.4 259.2h.8M349.2 260.4h.8M318.4 259.0h.8M355.0 260.2h.8M401.1 259.2h.8M376.0 259.8h.8M400.4 260.2h.8M324.5 261.0h.8M454.0 260.9h.8M348.2 259.5h.8M433.5 259.1h.8M429.9 260.2h.8M372.3 259.2h.8M435.2 259.8h.8M447.4 259.6h.8M401.1 259.8h.8M391.7 258.5h.8M395.3 259.3h.8M378.2 258.8h.8M409.4 259.3h.8M388.0 258.8h.8M332.5 259.5h.8M326.2 258.4h.8M391.2 259.6h.8M373.1 259.9h.8M422.1 260.6h.8M364.0 260.9h.8M454.2 258.7h.8M451.9 259.3h.8M428.0 259.4h.8M422.2 259.2h.8M334.6 260.2h.8M448.3 259.3h.8M319.5 259.3h.8M348.0 260.3h.8M363.5 259.1h.8M293.8 258.9h.8M353.2 260.4h.8M289.2 259.5h.8M375.4 258.7h.8M383.5 259.8h.8M448.0 259.8h.8M363.8 259.3h.8M389.2 259.6h.8M375.9 260.0h.8M459.2 260.9h.8M456.6 258.5h.8M313.5 260.4h.8M455.8 259.6h.8M392.5 258.5h.8M404.8 259.7h.8M379.6 259.9h.8M312.3 260.8h.8M393.2 260.0h.8M421.1 259.9h.8M410.4 258.1h.8M389.3 261.1h.8M348.7 259.3h.8M421.5 260.7h.8M335.3 259.9h.8M427.1 259.9h.8M372.6 259.5h.8M417.5 258.9h.8M361.9 259.3h.8M347.8 260.4h.8M408.1 260.1h.8M394.0 260.1h.8M323.0 258.4h.8M423.9 259.9h.8M400.1 259.7h.8M285.7 257.4h.8M398.1 259.6h.8M454.7 259.6h.8M360.4 259.2h.8M379.2 259.9h.8M362.6 260.2h.8M294.9 260.1h.8M397.5 259.1h.8M336.2 259.9h.8M450.2 259.3h.8M343.5 261.7h.8M371.1 259.5h.8M306.5 259.1h.8M319.7 260.3h.8M398.8 258.5h.8M415.2 259.8h.8M323.1 259.4h.8M344.8 259.5h.8M318.9 260.2h.8M370.6 260.4h.8M408.1 259.9h.8M404.8 259.9h.8M446.9 259.9h.8M387.9 260.6h.8M447.5 260.9h.8M379.1 258.3h.8M443.5 258.4h.8M422.7 258.9h.8M389.7 258.2h.8M362.6 260.9h.8M396.3 261.5h.8M387.9 260.8h.8M412.9 259.1h.8M414.8 259.8h.8M428.3 258.3h.8M338.9 258.8h.8M396.9 259.0h.8M389.4 258.3h.8M314.3 259.5h.8M427.5 260.0h.8M312.6 258.6h.8M346.4 258.4h.8M441.6 260.5h.8M443.7 258.4h.8M359.4 258.5h.8M354.8 260.8h.8M394.6 259.1h.8M406.5 259.2h.8M410.6 259.5h.8M384.9 258.4h.8M398.2 259.7h.8M356.0 261.2h.8M398.0 258.9h.8M453.0 259.4h.8M398.1 258.5h.8M425.0 260.3h.8M377.1 259.3h.8M325.0 259.4h.8M329.6 261.7h.8M438.8 259.8h.8M399.3 260.6h.8M290.5 260.2h.8M297.7 259.7h.8M385.5 259.4h.8M421.4 262.1h.8M369.0 260.5h.8M365.0 260.2h.8M409.9 260.9h.8M446.6 259.6h.8M384.4 261.2h.8M319.5 259.7h.8M344.1 261.4h.8M352.3 260.6h.8M442.1 258.9h.8M356.2 259.7h.8M375.3 257.8h.8M347.1 259.7h.8M383.3 260.0h.8M391.6 260.0h.8M366.4 260.1h.8M420.2 258.6h.8M381.9 259.2h.8M355.0 261.2h.8M397.6 259.5h.8M299.2 260.9h.8M443.9 259.3h.8M408.1 260.7h.8M427.9 260.9h.8M418.4 259.7h.8M399.0 259.6h.8M345.2 259.8h.8M413.8 258.6h.8M417.1 260.0h.8M346.5 259.0h.8M406.1 259.4h.8M417.9 258.0h.8M455.8 259.9h.8M318.1 259.5h.8M337.2 258.4h.8M366.5 260.0h.8M416.5 259.9h.8M418.8 260.2h.8M391.7 258.7h.8M371.9 259.9h.8M363.1 258.8h.8M386.4 260.3h.8M342.7 259.0h.8M365.3 260.2h.8M396.7 260.1h.8M349.5 260.9h.8M371.5 259.7h.8M340.6 260.4h.8M432.7 259.1h.8M290.5 259.3h.8M404.8 258.8h.8M410.6 260.1h.8M389.3 259.8h.8M409.3 258.8h.8M393.7 259.9h.8M399.1 260.5h.8M459.3 260.4h.8M432.9 260.5h.8M379.8 260.4h.8M457.5 260.2h.8M339.4 259.0h.8M294.7 259.5h.8M434.7 260.0h.8M415.9 259.3h.8M457.7 259.8h.8M326.6 260.1h.8M406.8 259.6h.8M335.5 260.9h.8M434.4 260.1h.8M318.7 259.0h.8M361.1 258.4h.8M445.4 259.7h.8M407.6 260.7h.8M417.1 259.7h.8M359.2 259.7h.8M441.0 260.9h.8M364.0 259.5h.8M454.4 258.8h.8M380.3 260.3h.8M376.1 257.0h.8M386.3 259.7h.8M300.1 259.4h.8M375.8 259.0h.8M348.1 259.5h.8M403.4 260.3h.8M453.5 259.6h.8M422.6 259.9h.8M386.0 258.8h.8M446.2 261.2h.8M411.5 260.6h.8M457.7 258.9h.8M330.9 260.6h.8M430.3 259.0h.8M350.7 259.4h.8M440.5 261.6h.8M286.9 259.9h.8M441.4 259.9h.8M457.8 258.3h.8M354.6 260.4h.8M375.2 260.6h.8M389.8 258.6h.8M392.4 258.7h.8M438.6 260.3h.8M410.2 259.6h.8M435.9 259.3h.8M519.6 260.4h.8M467.9 260.3h.8M477.1 260.9h.8M524.0 260.9h.8M459.4 260.3h.8M474.3 260.1h.8M495.8 260.8h.8M508.7 260.4h.8M531.5 260.4h.8M512.2 260.9h.8M483.7 259.8h.8M496.7 260.4h.8M482.8 261.4h.8M541.5 260.5h.8M502.4 260.3h.8M506.4 261.0h.8M524.6 260.7h.8M480.4 261.1h.8M533.9 260.3h.8M480.7 260.9h.8M481.8 260.2h.8M502.2 260.3h.8M528.9 260.7h.8M533.7 261.0h.8M469.2 260.5h.8M505.3 260.3h.8M480.7 260.9h.8M528.7 260.3h.8M523.5 260.1h.8M502.0 260.7h.8M487.5 260.0h.8M515.3 260.4h.8M524.1 261.3h.8M469.7 260.6h.8M512.6 260.0h.8M534.1 260.7h.8M465.5 260.5h.8M463.4 260.9h.8M462.5 260.7h.8M535.4 260.2h.8M524.2 260.4h.8M516.6 260.4h.8M496.8 259.5h.8M528.2 261.1h.8M539.3 260.3h.8M464.3 261.1h.8M540.3 260.8h.8M509.7 260.6h.8M505.7 260.3h.8M473.2 261.2h.8M474.6 259.7h.8M476.5 260.8h.8M535.4 261.0h.8M486.8 260.5h.8M542.5 261.0h.8M536.2 260.4h.8M499.0 260.2h.8M498.7 261.1h.8M471.9 260.9h.8M513.7 260.4h.8M367.0 254.8h.8M340.8 255.3h.8M390.8 252.3h.8M395.9 254.3h.8M378.3 254.1h.8M378.5 253.7h.8M392.0 253.4h.8M427.3 253.9h.8M335.7 252.6h.8M400.6 251.6h.8M406.1 255.7h.8M362.4 255.0h.8M435.4 254.8h.8M389.1 251.6h.8M450.2 253.5h.8M457.6 254.6h.8M425.2 253.8h.8M422.6 253.8h.8M363.5 253.5h.8M429.7 254.4h.8M455.4 254.2h.8M357.1 254.0h.8M370.8 251.1h.8M355.3 257.9h.8M356.3 253.0h.8M323.5 254.8h.8M389.3 255.7h.8M368.7 257.3h.8M375.6 255.5h.8M356.9 257.0h.8M366.1 255.6h.8M341.6 255.5h.8M409.7 253.9h.8M430.4 251.8h.8M338.5 254.1h.8M430.8 254.3h.8M361.6 253.9h.8M396.7 256.2h.8M406.0 253.1h.8M364.6 253.6h.8M402.6 255.8h.8M434.5 253.6h.8M430.8 254.6h.8M388.9 253.4h.8M440.9 255.3h.8M436.1 252.9h.8M402.9 254.7h.8M378.6 254.3h.8M355.8 256.1h.8M384.7 253.4h.8M412.0 254.8h.8M351.0 255.3h.8M396.9 256.5h.8M428.4 255.2h.8M448.8 254.0h.8M361.2 252.5h.8M329.9 257.5h.8M391.3 253.5h.8M382.1 255.9h.8M419.5 255.2h.8M336.9 255.9h.8M335.9 256.3h.8M406.5 254.3h.8M376.3 255.6h.8M423.2 257.6h.8M408.2 256.7h.8M393.1 251.3h.8M433.8 254.2h.8M385.7 255.5h.8M428.8 257.8h.8M416.6 257.3h.8M331.3 255.7h.8M334.7 255.4h.8M408.1 254.1h.8M428.3 255.8h.8M424.2 254.1h.8M442.2 254.8h.8M327.4 254.4h.8M445.4 253.6h.8M414.9 253.8h.8M418.6 254.2h.8M424.8 255.1h.8M373.1 256.1h.8M381.8 254.0h.8M374.8 253.5h.8M358.4 255.7h.8M316.2 254.5h.8M354.2 253.9h.8M394.4 255.5h.8M398.5 254.1h.8M318.3 253.7h.8M398.2 256.2h.8M356.0 254.1h.8M428.9 253.1h.8M455.9 253.9h.8M374.2 255.7h.8M422.6 255.0h.8M366.6 251.7h.8M458.5 254.2h.8M340.6 253.2h.8M374.2 255.0h.8M314.8 254.2h.8M334.3 253.9h.8M446.9 253.0h.8M416.1 254.3h.8M408.0 253.7h.8M345.2 251.9h.8M416.1 253.6h.8M330.2 253.3h.8M445.5 254.7h.8M397.0 253.9h.8M430.2 253.9h.8M402.3 253.2h.8M377.4 255.0h.8M431.5 253.4h.8M430.2 255.5h.8M368.0 256.6h.8M376.1 252.6h.8M428.5 255.8h.8M379.4 254.2h.8M367.4 256.2h.8M414.3 257.0h.8M369.5 253.2h.8M391.5 253.1h.8M450.5 254.6h.8M393.8 257.0h.8M414.5 253.3h.8M401.4 253.4h.8M446.3 254.0h.8M426.4 256.9h.8M445.9 253.6h.8M321.5 253.9h.8M430.2 254.6h.8M441.2 254.7h.8M407.8 253.7h.8M377.6 255.8h.8M450.4 254.0h.8M347.9 253.7h.8M403.3 254.8h.8M414.1 258.0h.8M372.7 256.1h.8M454.9 255.2h.8M373.4 256.3h.8M418.2 255.1h.8M452.2 255.2h.8M414.9 253.2h.8M411.5 257.7h.8M335.8 255.1h.8M415.2 252.5h.8M433.6 253.0h.8M412.8 256.0h.8M337.8 256.5h.8M446.9 253.2h.8M393.1 257.3h.8M384.6 253.0h.8M383.5 251.0h.8M412.7 253.6h.8M366.0 257.2h.8M419.6 253.2h.8M406.1 256.0h.8M337.6 253.5h.8M326.6 254.5h.8M407.4 254.3h.8M388.5 251.5h.8M395.8 257.8h.8M356.9 254.9h.8M312.3 255.4h.8M455.4 255.4h.8M382.4 253.4h.8M438.0 255.3h.8M362.0 253.9h.8M424.8 254.2h.8M446.4 254.3h.8M438.3 254.2h.8M399.1 251.8h.8M451.7 254.3h.8M376.7 252.8h.8M438.0 255.4h.8M360.7 256.1h.8M352.7 252.3h.8M447.8 255.7h.8M434.7 253.8h.8M411.2 252.6h.8M378.3 253.0h.8M440.0 256.5h.8M438.0 254.2h.8M327.2 254.2h.8M455.2 254.7h.8M405.8 253.0h.8M404.2 256.3h.8M444.6 254.1h.8M448.5 254.9h.8M384.4 252.4h.8M399.7 256.2h.8M431.1 253.6h.8M378.6 255.4h.8M345.1 254.7h.8M438.4 257.3h.8M330.0 254.1h.8M425.8 254.0h.8M419.5 254.7h.8M434.4 254.2h.8M374.0 254.2h.8M399.7 256.5h.8M458.5 253.9h.8M400.3 252.8h.8M377.3 256.0h.8M429.5 254.8h.8M369.8 256.6h.8M331.1 255.2h.8M395.0 255.7h.8M434.1 255.3h.8M402.9 252.4h.8M433.6 254.8h.8M450.7 254.7h.8M377.6 257.4h.8M420.7 255.8h.8M441.7 255.7h.8M414.6 256.2h.8M381.5 255.9h.8M398.4 255.8h.8M309.5 255.3h.8M424.9 252.6h.8M373.1 257.6h.8M434.0 254.2h.8M426.0 257.1h.8M423.8 256.6h.8M429.5 253.1h.8M383.9 254.5h.8M367.2 254.7h.8M428.8 255.0h.8M423.1 252.2h.8M384.0 254.5h.8M452.5 255.2h.8M424.3 255.5h.8M414.2 252.6h.8M378.5 256.8h.8M417.3 256.8h.8M389.8 254.2h.8M426.3 255.0h.8M394.4 252.2h.8M339.3 254.5h.8M316.5 253.6h.8M406.6 252.1h.8M376.7 256.3h.8M422.8 254.3h.8M381.1 256.7h.8M403.6 253.9h.8M384.3 258.1h.8M362.5 254.5h.8M437.3 255.9h.8M401.7 253.9h.8M385.9 256.1h.8M398.7 253.3h.8M388.4 253.9h.8M352.7 254.4h.8M368.1 255.2h.8M341.1 255.5h.8M389.7 254.9h.8M358.3 254.9h.8M417.4 255.5h.8M386.2 255.1h.8M447.3 254.0h.8M372.8 255.8h.8M372.9 254.7h.8M428.0 256.7h.8M349.1 256.9h.8M421.3 254.4h.8M361.1 255.4h.8M337.8 254.2h.8M312.6 254.1h.8M386.1 256.0h.8M387.1 254.7h.8M446.5 255.7h.8M326.9 254.9h.8M431.7 254.9h.8M367.5 255.9h.8M383.1 253.9h.8M362.0 253.2h.8M338.2 252.3h.8M368.5 257.9h.8M378.6 253.8h.8M365.8 255.7h.8M440.9 254.9h.8M394.2 254.5h.8M441.6 255.3h.8M415.1 252.1h.8M350.8 252.2h.8M397.4 256.4h.8M373.0 257.2h.8M333.7 255.3h.8M381.2 254.6h.8M360.3 255.1h.8M418.3 255.5h.8M429.2 255.2h.8M385.0 254.9h.8M422.9 255.0h.8M419.6 254.5h.8M315.4 255.5h.8M376.6 256.1h.8M337.6 254.3h.8M399.1 252.8h.8M373.5 255.8h.8M341.3 254.5h.8M324.5 254.8h.8M324.7 253.8h.8M332.4 254.8h.8M378.0 260.9h.8M346.7 255.5h.8M456.5 253.9h.8M426.4 256.4h.8M429.3 256.1h.8M411.0 253.0h.8M356.3 254.3h.8M440.1 255.6h.8M395.0 255.6h.8M340.9 255.1h.8M436.8 255.8h.8M438.3 252.3h.8M439.0 255.7h.8M434.6 254.5h.8M409.2 256.7h.8M409.6 252.2h.8M407.7 252.5h.8M347.8 255.2h.8M374.1 254.6h.8M386.6 257.6h.8M458.9 254.7h.8M322.2 254.3h.8M311.0 255.6h.8M457.5 254.3h.8M398.4 254.6h.8M367.1 255.6h.8M421.5 254.7h.8M338.5 256.6h.8M375.5 254.8h.8M434.5 254.4h.8M443.4 255.2h.8M355.1 254.7h.8M401.7 253.2h.8M373.3 255.3h.8M413.5 253.5h.8M376.7 254.5h.8M424.5 255.6h.8M395.1 255.0h.8M396.9 254.3h.8M414.9 252.9h.8M423.0 253.7h.8M404.1 251.9h.8M336.0 256.8h.8M444.0 255.3h.8M425.8 253.4h.8M458.7 254.1h.8M363.8 254.9h.8M318.1 254.1h.8M357.6 254.8h.8M384.1 254.9h.8M341.4 253.3h.8M420.4 256.3h.8M354.4 252.6h.8M310.0 255.4h.8M428.4 252.0h.8M382.3 254.0h.8M327.3 256.3h.8M419.4 254.4h.8M453.3 254.9h.8M330.3 253.8h.8M417.0 252.4h.8M322.3 255.9h.8M396.8 257.0h.8M353.5 255.2h.8M392.5 254.5h.8M324.3 254.8h.8M457.1 254.8h.8M358.5 253.7h.8M370.3 252.4h.8M406.0 254.7h.8M441.2 254.8h.8M421.9 255.7h.8M434.3 254.5h.8M388.7 255.9h.8M395.7 251.2h.8M382.0 253.3h.8M310.4 254.3h.8M398.3 252.4h.8M354.0 257.7h.8M445.6 255.8h.8M449.9 255.8h.8M432.4 253.5h.8M441.5 256.3h.8M445.3 254.3h.8M386.0 254.9h.8M404.8 251.6h.8M324.3 255.2h.8M402.6 253.4h.8M431.8 255.2h.8M345.7 253.9h.8M389.0 253.7h.8M407.8 251.6h.8M369.7 253.2h.8M437.0 256.3h.8M345.9 255.8h.8M413.3 252.0h.8M418.0 255.0h.8M417.6 253.8h.8M449.5 254.5h.8M345.4 256.4h.8M448.6 254.3h.8M387.0 253.7h.8M452.8 255.1h.8M407.6 255.9h.8M445.9 253.8h.8M396.6 254.6h.8M401.6 255.4h.8M382.9 253.7h.8M442.5 254.5h.8M419.6 255.6h.8M376.8 255.0h.8M441.2 253.9h.8M398.7 252.1h.8M391.7 252.8h.8M441.2 254.9h.8M452.0 255.0h.8M434.0 254.2h.8M354.1 253.3h.8M343.7 253.7h.8M436.3 257.4h.8M441.6 255.1h.8M347.5 255.0h.8M443.9 256.3h.8M418.3 256.8h.8M319.5 255.3h.8M408.6 257.0h.8M420.2 254.8h.8M326.0 254.7h.8M424.1 255.7h.8M347.5 252.6h.8M447.1 254.6h.8M387.1 253.1h.8M423.1 257.7h.8M428.3 255.2h.8M362.4 254.6h.8M442.3 252.6h.8M408.5 252.5h.8M416.4 251.9h.8M386.6 254.1h.8M320.1 255.2h.8M416.1 252.5h.8M333.7 254.9h.8M378.1 257.0h.8M403.2 252.5h.8M385.5 253.2h.8M395.9 252.9h.8M417.1 253.4h.8M309.1 254.3h.8M417.0 254.7h.8M411.5 255.9h.8M458.1 254.2h.8M398.5 255.8h.8M431.5 256.0h.8M394.7 252.2h.8M436.0 253.7h.8M433.8 254.6h.8M318.0 255.7h.8M431.4 253.5h.8M418.8 257.4h.8M352.7 256.2h.8M393.2 254.1h.8M446.7 255.1h.8M345.7 255.7h.8M429.8 252.7h.8M439.6 256.3h.8M398.9 255.5h.8M373.0 254.9h.8M444.0 254.0h.8M420.7 254.8h.8M429.0 254.3h.8M457.6 254.3h.8M408.5 256.2h.8M359.8 256.4h.8M411.5 254.4h.8M375.1 256.7h.8M423.4 254.9h.8M427.1 256.8h.8M409.9 252.9h.8M440.6 256.0h.8M394.8 254.7h.8M386.6 255.1h.8M416.7 255.3h.8M434.0 255.0h.8M350.8 254.5h.8M346.6 254.0h.8M433.7 253.8h.8M311.0 254.1h.8M320.8 254.2h.8M398.6 252.3h.8M430.0 254.5h.8M335.2 253.7h.8M350.1 257.2h.8M376.8 254.7h.8M401.0 251.9h.8M432.5 254.8h.8M391.2 255.4h.8M374.2 252.6h.8M397.7 255.2h.8M364.5 252.8h.8M448.4 254.5h.8M450.5 254.9h.8M376.7 254.3h.8M313.8 253.9h.8M417.2 252.5h.8M424.1 256.5h.8M353.5 253.5h.8M454.4 254.9h.8M396.3 254.7h.8M374.2 257.1h.8M329.1 253.8h.8M332.7 254.6h.8M387.6 254.4h.8M384.4 255.7h.8M409.2 255.4h.8M425.8 256.0h.8M451.3 253.1h.8M401.2 257.3h.8M423.6 251.7h.8M336.5 256.0h.8M419.9 254.7h.8M401.2 256.2h.8M409.8 252.5h.8M413.3 250.3h.8M414.1 256.9h.8M368.6 255.7h.8M455.7 255.0h.8M385.3 258.2h.8M387.4 256.8h.8M383.3 253.2h.8M343.5 253.6h.8M428.2 254.9h.8M363.8 251.4h.8M381.7 253.8h.8M375.1 254.1h.8M374.4 256.7h.8M355.5 253.3h.8M388.7 255.7h.8M310.8 254.8h.8M378.0 254.0h.8M400.9 251.7h.8M390.3 256.6h.8M431.9 255.0h.8M374.5 253.2h.8M450.5 253.9h.8M431.5 255.2h.8M432.5 253.7h.8M423.7 254.3h.8M364.3 255.2h.8M386.3 255.6h.8M426.2 254.0h.8M337.6 255.4h.8M376.2 255.0h.8M362.5 254.8h.8M385.7 253.1h.8M424.4 252.2h.8M452.8 254.0h.8M401.2 256.8h.8M403.5 253.4h.8M363.3 256.0h.8M363.4 256.6h.8M408.0 254.0h.8M329.3 254.1h.8M349.7 255.9h.8M345.3 254.3h.8M354.0 254.8h.8M399.8 254.9h.8M351.7 256.4h.8M397.2 255.2h.8M413.0 253.7h.8M456.3 254.6h.8M398.3 259.0h.8M357.0 257.3h.8M375.7 253.6h.8M372.1 254.8h.8M356.5 255.0h.8M309.2 254.7h.8M312.3 255.5h.8M397.9 254.6h.8M340.0 252.0h.8M395.7 255.8h.8M310.9 254.7h.8M311.8 253.3h.8M390.9 254.9h.8M405.2 253.3h.8M417.9 254.2h.8M411.0 253.9h.8M373.0 254.4h.8M421.5 255.4h.8M376.4 253.9h.8M324.7 254.9h.8M429.5 256.8h.8M392.0 253.4h.8M367.2 256.6h.8M327.1 253.7h.8M400.8 255.6h.8M429.0 253.3h.8M401.4 255.5h.8M330.0 256.0h.8M401.1 255.7h.8M382.3 256.1h.8M401.4 254.8h.8M411.6 253.0h.8M361.2 254.4h.8M394.3 255.0h.8M411.2 254.1h.8M336.8 255.9h.8M447.6 255.1h.8M427.9 255.0h.8M424.3 253.3h.8M401.5 253.7h.8M351.4 254.3h.8M431.3 254.8h.8M376.6 252.2h.8M365.5 256.6h.8M372.2 253.2h.8M434.5 253.7h.8M407.0 256.1h.8M417.7 256.1h.8M371.2 255.5h.8M434.4 254.5h.8M310.3 254.7h.8M360.4 252.2h.8M347.4 254.6h.8M412.7 251.5h.8M324.7 253.8h.8M446.5 253.5h.8M324.9 255.8h.8M399.8 256.9h.8M408.3 257.7h.8M324.8 254.0h.8M442.3 255.3h.8M412.7 255.6h.8M448.2 254.4h.8M371.5 254.6h.8M392.3 255.5h.8M411.4 254.6h.8M362.7 251.5h.8M407.7 254.3h.8M411.3 254.4h.8M427.7 254.1h.8M397.8 254.0h.8M370.0 255.5h.8M343.8 255.3h.8M495.2 256.2h.8M480.5 254.6h.8M481.0 255.1h.8M459.6 256.0h.8M467.9 256.0h.8M478.4 255.8h.8M487.4 255.5h.8M485.2 255.8h.8M534.7 256.3h.8M518.1 255.6h.8M487.6 256.2h.8M507.9 255.7h.8M516.4 255.9h.8M528.4 256.1h.8M542.9 256.0h.8M486.7 255.5h.8M469.2 256.1h.8M504.0 256.0h.8M533.9 255.5h.8M534.7 256.4h.8M515.0 256.2h.8M496.9 255.8h.8M542.4 256.5h.8M526.5 255.8h.8M498.4 256.0h.8M472.1 255.9h.8M532.0 255.7h.8M497.5 256.6h.8M523.7 256.2h.8M532.0 255.7h.8M499.1 255.9h.8M508.4 255.5h.8M470.9 255.9h.8M479.9 255.4h.8M505.0 255.4h.8M480.3 255.9h.8M475.8 256.3h.8M465.4 255.8h.8M518.8 256.7h.8M539.6 255.9h.8M470.6 255.9h.8M501.4 256.3h.8M477.5 255.9h.8M481.6 255.4h.8M494.6 256.0h.8M521.3 256.0h.8M524.9 256.6h.8M485.1 255.9h.8M521.2 255.4h.8M481.8 255.7h.8M469.6 250.6h.8M466.4 250.7h.8M487.3 251.0h.8M516.8 250.3h.8M451.8 250.3h.8M484.4 250.7h.8M522.5 250.9h.8M454.5 251.0h.8M491.4 250.8h.8M508.9 250.5h.8M524.4 250.1h.8M453.8 250.3h.8M497.2 250.4h.8M533.1 251.1h.8M484.9 251.0h.8M516.5 249.9h.8M464.9 250.7h.8M485.7 250.4h.8M515.8 249.8h.8M465.4 251.0h.8M519.4 250.9h.8M529.9 250.2h.8M503.0 251.2h.8M512.9 250.7h.8M476.7 250.7h.8M524.3 250.7h.8M482.3 250.3h.8M526.7 250.6h.8M506.3 250.5h.8M513.2 250.6h.8M457.7 251.1h.8M461.0 251.7h.8M531.4 250.5h.8M503.5 250.4h.8M511.2 249.9h.8M451.9 250.0h.8M534.3 250.4h.8M521.1 250.6h.8M465.9 250.4h.8M492.2 250.2h.8M508.5 250.7h.8M460.6 250.3h.8M488.8 250.2h.8M478.9 250.7h.8M472.4 250.8h.8M485.5 250.7h.8M464.2 250.9h.8M542.1 250.9h.8M483.6 250.7h.8M451.0 250.7h.8M523.4 250.6h.8M512.1 250.8h.8M478.1 250.0h.8M494.9 250.7h.8M492.4 250.7h.8M503.0 250.5h.8M479.5 251.6h.8M515.8 250.2h.8M491.9 250.3h.8M483.5 250.9h.8M465.5 250.6h.8M507.6 251.2h.8M536.4 250.2h.8M530.9 250.5h.8M474.7 250.2h.8M481.3 250.5h.8M456.8 250.3h.8M542.3 250.6h.8M525.6 250.8h.8M492.4 251.0h.8M275.9 250.7h.8M327.8 250.1h.8M291.7 249.9h.8M275.2 250.1h.8M275.2 249.4h.8M269.2 250.9h.8M312.6 250.3h.8M333.8 249.8h.8M290.7 250.9h.8M286.0 251.0h.8M315.6 250.4h.8M304.1 249.9h.8M321.3 251.3h.8M355.8 250.2h.8M346.4 250.8h.8M350.7 250.4h.8M264.6 251.8h.8M354.1 250.8h.8M334.8 250.9h.8M349.1 251.8h.8M328.2 251.3h.8M318.6 249.7h.8M342.9 251.9h.8M314.8 250.7h.8M278.6 251.0h.8M270.7 251.3h.8M326.3 249.8h.8M340.5 250.7h.8M347.9 250.1h.8M271.8 249.7h.8M292.3 251.2h.8M342.4 249.8h.8M337.5 250.8h.8M273.4 250.4h.8M323.9 250.6h.8M335.6 250.6h.8M320.9 251.0h.8M280.2 250.6h.8M342.4 249.6h.8M281.1 250.3h.8M306.8 251.3h.8M297.4 251.1h.8M273.0 251.1h.8M352.9 250.0h.8M317.5 251.2h.8M345.1 251.3h.8M299.9 251.0h.8M274.5 249.3h.8M332.3 251.1h.8M333.0 249.7h.8M341.3 250.0h.8M292.0 250.6h.8M309.9 250.4h.8M352.8 250.2h.8M353.4 251.1h.8M318.8 250.2h.8M342.8 250.1h.8M321.4 250.4h.8M328.1 250.2h.8M312.8 250.5h.8M272.1 250.1h.8M346.8 250.3h.8M332.5 251.6h.8M266.5 249.7h.8M323.3 250.1h.8M343.1 250.5h.8M322.2 251.2h.8M355.4 249.8h.8M312.8 250.3h.8M309.9 250.9h.8M273.7 251.0h.8M333.9 249.9h.8M346.6 250.8h.8M344.5 251.7h.8M294.0 251.0h.8M297.1 251.2h.8M274.2 250.5h.8M269.6 250.9h.8M312.4 250.8h.8M294.0 251.0h.8M352.2 250.3h.8M263.4 250.5h.8M274.6 250.5h.8M321.2 251.7h.8M278.5 249.8h.8M295.7 249.9h.8M296.7 250.8h.8M317.2 249.5h.8M302.1 250.9h.8M343.8 250.0h.8M293.9 250.6h.8M350.3 250.7h.8M291.3 250.4h.8M332.2 250.4h.8M270.0 249.8h.8M303.6 250.7h.8M317.8 250.7h.8M283.2 251.4h.8M260.8 250.2h.8M304.4 252.2h.8M312.7 251.0h.8M348.3 249.7h.8M311.8 251.3h.8M274.4 250.6h.8M266.6 250.3h.8M303.9 250.8h.8M337.2 251.4h.8M279.7 250.5h.8M310.1 250.4h.8M289.1 250.6h.8M292.5 251.5h.8M285.9 251.7h.8M349.1 250.6h.8M333.7 250.8h.8M262.2 251.4h.8M330.1 250.4h.8M283.1 250.5h.8M289.6 250.5h.8M281.7 251.5h.8M357.8 249.8h.8M342.7 250.5h.8M271.0 250.9h.8M315.0 250.9h.8M262.2 250.6h.8M303.1 251.3h.8M275.6 250.2h.8M297.8 250.1h.8M294.6 250.5h.8M290.8 249.9h.8M327.4 250.6h.8M274.3 250.5h.8M260.3 251.1h.8M290.3 250.2h.8M315.9 250.6h.8M318.5 251.2h.8M351.5 250.1h.8M270.1 250.5h.8M315.4 250.2h.8M337.0 251.3h.8M300.1 249.7h.8M344.8 250.9h.8M274.3 250.3h.8M281.5 249.7h.8M331.8 252.1h.8M307.2 251.0h.8M312.4 251.2h.8M279.0 249.5h.8M269.7 249.1h.8M292.1 251.0h.8M276.2 250.9h.8M458.7 251.5h.8M434.2 250.7h.8M398.0 250.0h.8M441.9 251.9h.8M449.8 251.2h.8M445.1 251.4h.8M389.1 250.5h.8M407.5 251.2h.8M374.5 250.3h.8M426.9 252.1h.8M465.5 250.5h.8M463.8 251.6h.8M441.2 250.3h.8M400.8 250.7h.8M391.5 249.5h.8M421.7 250.9h.8M370.8 251.7h.8M411.7 249.7h.8M376.8 250.0h.8M379.8 251.2h.8M435.1 253.3h.8M377.2 251.2h.8M438.8 250.1h.8M405.0 250.1h.8M376.5 251.9h.8M407.2 250.0h.8M376.8 249.3h.8M439.5 250.9h.8M383.0 248.8h.8M375.4 251.2h.8M383.6 251.4h.8M452.1 249.8h.8M452.3 252.3h.8M444.2 252.4h.8M393.3 249.4h.8M456.5 249.2h.8M407.2 252.4h.8M464.0 251.8h.8M388.6 251.2h.8M429.1 250.1h.8M383.1 252.1h.8M371.1 249.4h.8M382.6 251.4h.8M448.4 250.9h.8M385.2 251.1h.8M460.6 252.0h.8M397.0 252.7h.8M387.2 251.2h.8M408.1 252.4h.8M410.2 251.9h.8M463.4 249.8h.8M374.5 252.9h.8M394.9 252.9h.8M380.0 250.1h.8M450.8 249.3h.8M371.2 250.4h.8M398.2 249.4h.8M436.7 249.8h.8M390.4 254.1h.8M453.7 250.8h.8M393.6 249.6h.8M381.6 251.1h.8M430.9 250.7h.8M450.0 251.8h.8M375.7 249.7h.8M416.7 250.1h.8M405.8 251.9h.8M397.8 251.9h.8M410.0 252.6h.8M465.8 250.9h.8M392.0 250.8h.8M439.0 252.2h.8M398.4 251.8h.8M460.7 252.3h.8M444.3 252.3h.8M386.2 249.7h.8M396.0 250.7h.8M438.8 252.7h.8M455.1 252.3h.8M451.3 251.4h.8M373.1 251.3h.8M453.4 250.5h.8M406.3 249.8h.8M433.8 250.5h.8M433.3 253.3h.8M441.0 250.2h.8M378.3 250.4h.8M440.9 252.6h.8M419.7 252.7h.8M409.0 252.8h.8M446.6 252.2h.8M422.1 250.9h.8M414.3 250.8h.8M451.8 249.9h.8M379.8 251.1h.8M374.6 250.4h.8M443.8 252.6h.8M404.3 251.5h.8M440.4 252.4h.8M429.4 249.3h.8M429.6 247.7h.8M438.4 246.4h.8M464.9 247.5h.8M411.1 247.4h.8M407.8 247.1h.8M419.7 247.2h.8M412.4 247.5h.8M454.4 247.8h.8M464.4 247.1h.8M425.5 247.2h.8M453.3 246.0h.8M435.9 247.5h.8M428.7 247.8h.8M407.4 247.0h.8M440.9 247.4h.8M449.2 246.8h.8M447.0 247.2h.8M406.0 246.1h.8M458.9 247.3h.8M416.2 246.7h.8M413.9 247.9h.8M419.5 247.4h.8M417.6 247.4h.8M461.8 246.2h.8M460.0 247.3h.8M456.7 247.1h.8M424.5 246.4h.8M415.5 246.5h.8M454.6 247.4h.8M463.7 247.3h.8M444.8 247.0h.8M436.7 247.4h.8M418.6 247.1h.8M404.8 249.3h.8M411.0 247.5h.8M417.7 246.6h.8M465.7 246.5h.8M459.2 244.6h.8M450.8 246.8h.8M436.7 247.2h.8M407.5 246.4h.8M456.2 247.7h.8M444.4 246.7h.8M452.5 246.1h.8M461.5 247.6h.8M451.4 247.0h.8M414.5 248.0h.8M453.4 247.2h.8M444.5 247.4h.8M454.0 246.3h.8M425.0 242.1h.8M446.2 241.8h.8M430.9 241.5h.8M438.3 242.8h.8M410.7 241.6h.8M402.6 242.4h.8M385.7 241.6h.8M493.5 242.9h.8M488.0 242.7h.8M440.4 241.8h.8M409.6 241.5h.8M408.0 242.4h.8M482.3 241.3h.8M472.4 242.3h.8M481.1 242.2h.8M486.4 241.9h.8M402.7 242.6h.8M407.8 240.9h.8M419.4 242.4h.8M464.4 241.6h.8M440.4 241.5h.8M481.2 243.5h.8M399.9 241.8h.8M400.9 241.8h.8M491.4 241.0h.8M439.4 241.2h.8M482.3 240.7h.8M489.4 241.2h.8M478.4 240.8h.8M451.1 241.5h.8M490.3 241.7h.8M382.6 242.5h.8M402.6 241.8h.8M416.7 240.9h.8M474.7 241.6h.8M406.7 241.7h.8M425.1 241.7h.8M467.5 242.3h.8M381.2 240.5h.8M455.6 241.4h.8M467.5 241.6h.8M478.1 241.8h.8M492.5 242.5h.8M402.8 242.3h.8M492.9 241.3h.8M440.5 242.7h.8M388.4 241.2h.8M447.5 240.2h.8M429.3 242.2h.8M434.8 242.4h.8M409.3 241.5h.8M412.6 241.3h.8M451.2 241.7h.8M426.3 241.2h.8M454.5 241.5h.8M381.3 242.1h.8M418.2 241.0h.8M427.9 240.6h.8M416.8 241.6h.8M390.2 242.5h.8M384.7 242.7h.8M453.1 241.7h.8M470.8 240.8h.8M453.6 241.7h.8M483.1 242.0h.8M440.1 241.8h.8M443.7 241.1h.8M404.1 241.0h.8M487.2 241.4h.8M398.3 242.5h.8M479.2 241.6h.8M473.0 241.7h.8M386.2 241.3h.8M385.5 241.2h.8M448.3 240.7h.8M413.7 241.1h.8M414.1 242.3h.8M487.0 240.9h.8M406.1 242.5h.8M413.6 240.8h.8M447.8 241.1h.8M426.7 241.0h.8M425.9 241.6h.8M421.1 241.4h.8M430.1 242.3h.8M401.8 241.2h.8M459.4 241.6h.8M481.3 242.2h.8M463.7 242.6h.8M429.4 241.5h.8M405.5 242.6h.8M450.5 241.8h.8M406.7 242.4h.8M477.4 242.0h.8M493.3 242.5h.8M443.0 242.6h.8M477.8 242.2h.8M470.3 242.2h.8M459.1 240.9h.8M452.5 241.8h.8M426.9 241.0h.8M479.5 241.5h.8M490.8 241.4h.8M403.0 243.0h.8M403.7 241.7h.8M484.8 242.1h.8M476.7 242.4h.8M454.7 241.9h.8M446.2 242.2h.8M410.3 241.8h.8M426.2 242.8h.8M425.1 241.7h.8M420.3 242.4h.8M423.1 241.4h.8M393.6 243.2h.8M447.0 242.0h.8M405.8 241.4h.8M488.1 241.9h.8M391.3 243.7h.8M382.7 243.5h.8M387.0 241.8h.8M405.7 241.9h.8M419.2 242.1h.8M410.0 241.0h.8M441.0 241.7h.8M409.2 242.5h.8M489.6 241.8h.8M424.0 241.2h.8M383.8 242.9h.8M487.1 242.2h.8M437.1 241.8h.8M440.1 242.3h.8M390.4 240.8h.8M420.8 242.0h.8M418.8 242.3h.8M461.8 242.6h.8M436.4 241.6h.8M390.3 241.3h.8M384.5 241.1h.8M413.7 242.2h.8M426.0 242.3h.8M403.4 241.1h.8M382.4 241.5h.8M418.3 242.3h.8M385.9 242.3h.8M451.9 241.6h.8M389.9 241.9h.8M394.9 242.1h.8M452.7 241.7h.8M414.4 241.6h.8M434.5 239.8h.8M336.1 234.9h.8M341.1 239.7h.8M428.6 233.5h.8M300.6 236.5h.8M404.0 236.0h.8M306.2 236.3h.8M419.4 240.1h.8M373.9 236.8h.8M411.0 237.7h.8M436.5 235.3h.8M347.4 237.1h.8M409.9 234.2h.8M312.8 237.7h.8M318.9 233.5h.8M296.6 237.2h.8M331.6 235.9h.8M372.5 233.6h.8M352.3 236.4h.8M423.0 236.6h.8M361.7 237.0h.8M433.6 236.1h.8M324.8 244.8h.8M441.6 233.2h.8M400.2 236.2h.8M180.7 235.8h.8M181.5 235.8h.8M214.8 235.8h.8M215.7 235.8h.8M305.7 235.8h.8M306.5 235.8h.8M345.0 235.8h.8M345.8 235.8h.8M387.6 235.8h.8M388.5 235.8h.8M449.1 235.8h.8M450.0 235.8h.8M460.8 208.3h.8M396.9 207.6h.8M371.5 207.8h.8M372.7 208.1h.8M346.6 211.6h.8M366.8 208.1h.8M380.1 209.2h.8M375.1 209.1h.8M449.7 208.8h.8M376.3 204.2h.8M311.9 211.3h.8M405.1 210.2h.8M384.7 213.6h.8M429.5 213.3h.8M401.5 210.4h.8M309.7 209.1h.8M385.7 210.3h.8M353.2 211.4h.8M404.5 208.9h.8M327.8 210.4h.8M396.9 209.3h.8M415.3 211.0h.8M333.4 209.3h.8M318.5 210.5h.8M397.4 208.1h.8M396.0 207.7h.8M437.2 210.3h.8M377.1 208.6h.8M280.6 208.1h.8M419.0 211.4h.8M320.5 209.8h.8M381.6 207.2h.8M324.2 208.9h.8M354.9 206.3h.8M347.0 210.3h.8M334.2 210.2h.8M303.0 209.2h.8M287.2 208.5h.8M397.4 210.1h.8M394.5 210.9h.8M433.4 206.8h.8M377.4 207.1h.8M421.7 209.5h.8M423.9 205.6h.8M317.0 208.5h.8M392.6 211.5h.8M312.9 209.0h.8M352.9 208.8h.8M465.8 207.6h.8M388.3 211.3h.8M313.9 208.0h.8M320.9 208.5h.8M430.9 209.2h.8M374.1 209.5h.8M381.1 206.1h.8M382.0 210.6h.8M370.5 209.5h.8M422.1 209.0h.8M420.2 204.7h.8M419.2 209.0h.8M375.1 208.3h.8M398.1 208.7h.8M343.8 209.9h.8M320.1 211.3h.8M423.3 208.2h.8M331.6 206.3h.8M368.2 206.3h.8M353.6 207.8h.8M417.1 207.4h.8M412.1 207.3h.8M416.9 206.9h.8M389.0 210.4h.8M342.8 209.8h.8M315.9 209.5h.8M373.9 206.1h.8M378.6 212.5h.8M396.8 210.2h.8M449.7 208.6h.8M315.7 209.2h.8M431.2 207.6h.8M408.8 209.9h.8M343.5 209.1h.8M399.9 206.5h.8M446.9 208.8h.8M394.1 209.5h.8M397.9 207.1h.8M278.2 208.3h.8M383.6 209.4h.8M415.6 209.0h.8M460.6 208.3h.8M388.9 209.6h.8M338.3 206.2h.8M342.8 211.2h.8M444.2 209.9h.8M425.7 210.5h.8M432.5 207.7h.8M340.2 211.5h.8M453.2 207.4h.8M388.8 209.1h.8M381.8 208.2h.8M395.3 208.6h.8M391.7 211.7h.8M436.6 209.2h.8M364.6 207.7h.8M398.1 208.4h.8M347.8 202.6h.8M377.6 208.5h.8M328.9 208.7h.8M367.2 207.7h.8M281.7 210.0h.8M354.6 209.0h.8M340.3 209.8h.8M353.8 208.0h.8M349.6 208.0h.8M280.1 209.2h.8M419.5 208.8h.8M397.4 210.1h.8M463.1 208.7h.8M391.3 207.9h.8M422.3 207.3h.8M378.8 210.0h.8M327.7 208.0h.8M436.6 207.8h.8M346.3 209.7h.8M423.4 207.8h.8M312.7 208.1h.8M437.8 209.8h.8M419.6 209.6h.8M296.7 211.0h.8M296.2 208.4h.8M341.1 213.1h.8M407.0 210.4h.8M343.8 205.8h.8M286.4 209.3h.8M286.7 208.2h.8M285.1 208.7h.8M360.9 211.9h.8M314.4 211.6h.8M361.9 206.5h.8M389.8 209.4h.8M300.9 210.1h.8M368.9 211.1h.8M308.3 205.5h.8M384.0 210.3h.8M369.5 212.5h.8M294.1 207.7h.8M371.9 207.6h.8M309.6 208.2h.8M377.2 210.7h.8M345.4 208.5h.8M376.2 206.5h.8M358.0 207.9h.8M319.0 208.4h.8M383.6 204.7h.8M306.4 210.0h.8M350.9 207.9h.8M375.5 205.2h.8M414.6 211.9h.8M397.1 208.1h.8M446.6 209.5h.8M409.9 209.3h.8M314.7 212.2h.8M295.3 211.6h.8M297.4 209.3h.8M366.1 207.7h.8M304.9 208.0h.8M465.2 208.7h.8M375.7 208.1h.8M421.2 211.3h.8M329.1 206.2h.8M395.6 210.8h.8M302.4 207.2h.8M353.9 208.3h.8M415.1 206.6h.8M396.6 210.9h.8M384.0 209.7h.8M408.1 209.1h.8M329.4 209.8h.8M416.6 208.5h.8M339.4 211.3h.8M345.5 205.2h.8M300.0 208.2h.8M391.6 210.9h.8M423.1 211.6h.8M327.8 208.2h.8M353.9 208.1h.8M361.9 210.9h.8M375.1 209.2h.8M432.8 206.5h.8M419.2 210.0h.8M402.9 206.0h.8M325.4 210.6h.8M393.8 208.3h.8M327.3 210.3h.8M322.2 205.6h.8M331.3 209.7h.8M425.8 210.7h.8M414.1 212.0h.8M422.0 207.2h.8M314.5 206.2h.8M436.3 208.2h.8M442.9 206.2h.8M423.0 208.4h.8M360.4 210.7h.8M373.0 206.2h.8M283.3 210.0h.8M450.1 209.2h.8M338.7 206.7h.8M392.7 213.7h.8M370.2 208.3h.8M406.7 212.5h.8M355.4 206.0h.8M382.1 209.5h.8M401.3 207.9h.8M426.0 208.4h.8M422.1 210.3h.8M303.2 209.4h.8M404.0 209.0h.8M422.6 204.3h.8M316.2 208.9h.8M318.0 211.5h.8M392.0 205.9h.8M295.0 209.6h.8M404.2 208.7h.8M456.0 210.2h.8M323.2 211.9h.8M354.2 208.7h.8M430.4 206.2h.8M428.3 213.6h.8M377.7 209.2h.8M398.3 207.4h.8M387.6 205.8h.8M438.2 207.9h.8M375.8 212.6h.8M434.0 209.2h.8M340.1 206.1h.8M296.0 209.0h.8M458.7 208.7h.8M321.5 209.5h.8M366.5 210.5h.8M438.0 208.2h.8M367.4 207.3h.8M400.3 208.4h.8M327.2 208.7h.8M463.8 208.7h.8M406.0 207.0h.8M355.2 212.2h.8M351.8 210.2h.8M430.8 210.7h.8M365.7 209.5h.8M343.9 208.7h.8M407.4 209.4h.8M434.7 207.2h.8M350.0 208.6h.8M430.9 210.2h.8M409.7 213.7h.8M328.3 207.4h.8M402.2 211.7h.8M289.5 209.6h.8M419.6 210.8h.8M366.3 208.4h.8M380.6 207.9h.8M431.7 210.8h.8M466.0 209.8h.8M348.7 210.1h.8M333.0 209.0h.8M402.2 210.8h.8M287.9 209.9h.8M400.3 210.7h.8M438.6 206.8h.8M361.2 208.3h.8M448.3 209.1h.8M407.7 211.5h.8M341.4 211.9h.8M365.2 210.7h.8M289.9 206.9h.8M323.1 211.3h.8M433.5 211.1h.8M435.1 209.8h.8M398.1 210.9h.8M462.5 208.9h.8M417.0 205.2h.8M449.5 211.2h.8M301.5 208.5h.8M459.4 210.2h.8M422.1 206.2h.8M399.1 205.2h.8M438.2 206.0h.8M429.9 208.6h.8M419.3 210.1h.8M451.1 208.2h.8M449.4 208.7h.8M444.4 209.8h.8M302.6 208.8h.8M340.1 208.0h.8M411.6 207.9h.8M425.7 208.2h.8M393.6 209.9h.8M430.5 209.7h.8M372.0 209.1h.8M328.0 205.5h.8M325.9 211.4h.8M425.0 211.3h.8M386.8 207.9h.8M317.9 209.4h.8M360.5 208.6h.8M400.9 209.2h.8M413.7 203.8h.8M360.0 208.9h.8M299.3 208.1h.8M383.2 209.2h.8M404.9 206.5h.8M415.8 212.3h.8M317.5 207.8h.8M398.0 212.1h.8M413.3 211.5h.8M377.1 208.1h.8M441.4 208.2h.8M438.2 211.1h.8M396.7 206.9h.8M362.0 208.0h.8M406.7 208.7h.8M362.8 206.3h.8M401.7 212.0h.8M419.3 208.2h.8M322.4 207.0h.8M420.3 209.5h.8M368.9 211.4h.8M326.5 207.8h.8M316.5 208.5h.8M350.1 211.9h.8M341.8 206.7h.8M345.8 208.2h.8M425.3 208.0h.8M340.4 208.1h.8M433.8 207.8h.8M439.7 208.4h.8M350.6 210.1h.8M448.0 210.9h.8M442.1 210.5h.8M375.6 208.3h.8M318.5 205.5h.8M408.0 207.2h.8M358.8 213.0h.8M383.1 209.6h.8M436.7 209.4h.8M448.3 208.8h.8M402.1 210.3h.8M392.3 213.8h.8M312.7 209.9h.8M402.2 212.9h.8M379.9 209.9h.8M393.3 209.2h.8M450.5 209.4h.8M450.3 205.6h.8M323.5 210.6h.8M380.5 207.4h.8M376.0 204.7h.8M459.6 208.8h.8M361.5 210.1h.8M391.4 207.8h.8M349.3 207.7h.8M380.5 206.6h.8M443.0 207.6h.8M456.6 208.3h.8M342.1 208.8h.8M291.2 209.1h.8M414.0 208.3h.8M461.9 208.3h.8M438.8 207.6h.8M392.1 208.5h.8M277.3 209.6h.8M351.5 210.8h.8M387.5 203.4h.8M367.2 210.6h.8M422.5 210.1h.8M418.7 207.6h.8M443.1 207.4h.8M437.2 208.7h.8M306.7 210.0h.8M419.7 207.8h.8M406.0 210.5h.8M356.1 210.5h.8M305.1 210.2h.8M302.3 209.6h.8M383.2 209.6h.8M387.0 212.7h.8M320.9 207.5h.8M417.3 209.1h.8M373.0 206.5h.8M356.7 210.6h.8M291.3 206.1h.8M408.0 211.2h.8M380.7 209.2h.8M419.4 207.5h.8M400.4 210.2h.8M387.8 209.3h.8M411.7 209.1h.8M352.8 209.6h.8M432.4 208.3h.8M427.0 208.8h.8M313.7 210.6h.8M342.4 207.2h.8M432.0 211.8h.8M400.4 212.9h.8M285.2 210.3h.8M401.1 206.9h.8M324.5 206.9h.8M449.9 209.6h.8M403.2 208.6h.8M340.6 209.0h.8M410.9 210.0h.8M413.3 210.0h.8M383.9 207.1h.8M335.6 210.0h.8M368.1 211.3h.8M402.4 205.8h.8M414.4 206.3h.8M376.4 204.0h.8M380.1 200.2h.8M359.2 208.9h.8M395.1 209.3h.8M451.5 207.9h.8M421.9 209.6h.8M434.9 209.4h.8M360.5 210.9h.8M310.6 209.9h.8M392.3 207.4h.8M465.4 208.3h.8M407.2 210.1h.8M320.8 211.2h.8M376.2 208.8h.8M397.9 209.3h.8M375.5 206.8h.8M385.1 209.5h.8M383.4 212.0h.8M374.4 210.0h.8M402.7 212.2h.8M410.6 209.5h.8M300.9 211.5h.8M284.7 210.5h.8M372.3 209.1h.8M450.6 208.1h.8M461.2 210.8h.8M407.7 213.8h.8M401.0 211.1h.8M393.1 204.4h.8M309.3 207.7h.8M409.8 211.6h.8M344.5 208.5h.8M337.4 209.6h.8M450.7 207.7h.8M367.7 212.3h.8M337.3 207.1h.8M406.0 209.4h.8M408.7 213.3h.8M459.1 209.4h.8M421.9 207.5h.8M346.3 208.2h.8M455.2 208.0h.8M370.9 211.9h.8M396.0 207.5h.8M401.4 209.3h.8M322.1 206.4h.8M330.8 209.9h.8M325.7 210.1h.8M446.4 209.2h.8M448.9 208.2h.8M350.9 205.6h.8M285.9 207.6h.8M380.6 210.3h.8M420.3 211.3h.8M346.6 210.0h.8M396.0 211.4h.8M422.3 212.1h.8M436.5 205.9h.8M368.9 208.1h.8M440.6 211.4h.8M341.7 208.1h.8M419.6 209.1h.8M375.5 211.9h.8M306.0 208.0h.8M426.4 212.5h.8M455.7 209.7h.8M415.7 207.3h.8M318.2 207.9h.8M419.9 207.8h.8M433.3 207.8h.8M346.3 205.1h.8M400.1 207.7h.8M328.3 209.4h.8M392.1 209.2h.8M402.6 204.7h.8M369.5 207.5h.8M454.3 207.8h.8M424.2 207.5h.8M449.1 208.4h.8M372.6 209.7h.8M443.7 210.2h.8M437.6 212.0h.8M376.1 206.4h.8M355.7 207.0h.8M427.0 207.5h.8M442.2 209.3h.8M454.7 209.6h.8M297.0 209.1h.8M435.6 208.5h.8M411.7 208.7h.8M383.2 210.2h.8M399.4 213.6h.8M318.9 206.3h.8M412.5 210.3h.8M291.4 206.2h.8M343.8 212.2h.8M413.8 209.3h.8M331.1 208.4h.8M449.9 208.7h.8M345.6 210.0h.8M339.4 209.7h.8M382.7 208.1h.8M426.6 211.2h.8M404.0 210.9h.8M293.0 207.5h.8M329.2 209.5h.8M323.0 207.3h.8M421.7 213.3h.8M440.8 208.6h.8M395.7 208.5h.8M400.2 209.8h.8M397.8 209.2h.8M412.1 202.9h.8M460.7 208.7h.8M415.7 204.7h.8M350.3 211.3h.8M305.4 207.6h.8M334.1 207.8h.8M317.8 211.2h.8M350.5 208.8h.8M421.0 207.1h.8M399.6 209.7h.8M408.6 207.6h.8M458.1 208.5h.8M389.9 210.9h.8M405.6 210.0h.8M417.7 209.3h.8M413.7 213.0h.8M280.2 207.5h.8M432.8 210.9h.8M326.2 208.4h.8M439.3 210.5h.8M300.9 208.9h.8M389.7 210.4h.8M376.9 209.7h.8M412.4 208.4h.8M423.2 206.3h.8M429.7 209.5h.8M341.2 205.5h.8M385.0 208.9h.8M431.2 206.7h.8M380.0 208.5h.8M454.1 207.2h.8M305.7 211.7h.8M435.3 203.6h.8M341.6 209.8h.8M400.0 207.0h.8M440.4 209.1h.8M378.5 211.0h.8M365.2 206.9h.8M390.4 207.2h.8M331.0 208.7h.8M335.9 208.2h.8M363.0 205.8h.8M457.4 210.5h.8M430.9 209.2h.8M451.0 210.6h.8M399.9 209.9h.8M388.3 206.1h.8M322.3 207.6h.8M312.0 211.1h.8M349.5 210.3h.8M446.6 211.7h.8M390.4 211.1h.8M388.5 209.1h.8M426.0 207.5h.8M364.9 207.9h.8M313.6 210.6h.8M356.9 209.4h.8M305.1 210.2h.8M433.8 206.9h.8M427.3 205.5h.8M360.3 207.9h.8M395.1 211.9h.8M404.9 212.6h.8M295.9 208.4h.8M329.8 206.1h.8M379.8 211.2h.8M447.6 207.9h.8M391.2 204.2h.8M380.5 205.9h.8M391.3 207.0h.8M446.0 208.4h.8M396.9 210.9h.8M396.9 211.1h.8M372.2 206.5h.8M433.1 211.2h.8M454.7 211.5h.8M424.1 207.8h.8M406.7 208.1h.8M333.5 209.4h.8M419.8 208.1h.8M459.9 209.5h.8M426.6 211.1h.8M345.9 208.8h.8M462.4 208.9h.8M364.3 205.5h.8M350.7 208.6h.8M421.2 209.2h.8M323.6 209.8h.8M280.1 208.2h.8M423.3 210.0h.8M318.0 209.6h.8M434.5 209.4h.8M430.1 205.3h.8M363.0 209.5h.8M370.2 209.1h.8M317.3 211.1h.8M359.0 209.3h.8M283.8 207.9h.8M402.6 206.0h.8M300.9 209.3h.8M312.0 207.7h.8M359.2 206.9h.8M406.6 213.1h.8M364.5 210.3h.8M427.6 208.0h.8M388.5 208.4h.8M413.2 214.5h.8M361.1 210.4h.8M444.3 209.6h.8M409.2 210.2h.8M394.8 209.7h.8M331.8 205.5h.8M386.1 214.7h.8M336.9 208.2h.8M420.2 208.1h.8M374.7 209.7h.8M375.3 206.5h.8M360.1 209.9h.8M380.3 204.7h.8M387.5 209.0h.8M412.2 211.1h.8M442.2 211.0h.8M347.1 207.1h.8M436.0 209.6h.8M327.5 206.8h.8M335.2 207.9h.8M364.4 208.3h.8M386.7 211.9h.8M416.8 212.4h.8M395.0 212.9h.8M432.9 208.7h.8M309.2 207.0h.8M451.2 209.8h.8M279.9 209.2h.8M446.4 209.0h.8M408.1 211.0h.8M400.6 210.1h.8M441.7 208.0h.8M308.4 208.5h.8M278.7 207.7h.8M354.4 209.8h.8M324.5 211.1h.8M410.5 206.9h.8M419.8 209.4h.8M386.1 207.8h.8M385.7 206.8h.8M397.5 208.8h.8M383.4 210.4h.8M456.0 209.3h.8M355.8 206.7h.8M427.7 207.7h.8M464.2 207.6h.8M309.4 209.3h.8M379.1 212.0h.8M293.1 208.2h.8M437.7 208.7h.8M316.6 206.2h.8M435.2 208.9h.8M441.0 207.0h.8M402.3 205.9h.8M285.0 207.1h.8M386.2 209.0h.8M374.4 208.2h.8M379.1 206.3h.8M404.4 206.8h.8M378.3 208.2h.8M346.4 207.5h.8M361.7 209.5h.8M404.8 207.5h.8M299.4 209.4h.8M316.7 210.0h.8M362.4 208.0h.8M438.1 207.0h.8M432.2 208.4h.8M407.9 207.3h.8M395.1 207.2h.8M339.4 209.1h.8M298.3 208.5h.8M359.9 209.6h.8M378.8 212.1h.8M386.7 207.7h.8M392.6 207.0h.8M386.1 208.5h.8M419.8 208.9h.8M405.1 211.7h.8M365.8 208.3h.8M355.3 210.2h.8M382.5 207.8h.8M433.3 207.4h.8M431.8 209.8h.8M337.8 208.3h.8M403.8 209.0h.8M432.7 211.5h.8M439.4 209.3h.8M368.7 211.9h.8M363.6 209.1h.8M437.9 210.9h.8M355.1 209.7h.8M396.0 209.9h.8M321.5 211.1h.8M298.7 209.1h.8M455.1 209.1h.8M414.9 208.7h.8M439.2 210.4h.8M383.4 210.8h.8M365.4 210.8h.8M351.9 210.0h.8M427.1 214.2h.8M428.6 207.3h.8M372.0 207.2h.8M413.5 204.5h.8M366.3 208.3h.8M462.8 208.6h.8M427.2 207.2h.8M370.0 209.7h.8M396.1 210.4h.8M418.1 206.6h.8M414.7 209.2h.8M305.8 207.2h.8M443.5 209.8h.8M278.7 208.8h.8M400.9 208.3h.8M321.1 210.7h.8M441.7 205.8h.8M365.1 209.8h.8M422.9 207.0h.8M445.9 206.3h.8M401.1 209.9h.8M346.8 208.5h.8M433.5 208.7h.8M374.3 207.8h.8M437.1 207.8h.8M326.6 212.1h.8M421.5 209.9h.8M285.0 208.5h.8M364.2 207.3h.8M434.3 206.4h.8M424.6 211.0h.8M302.7 210.3h.8M435.8 208.8h.8M278.7 208.8h.8M331.8 205.6h.8M382.3 211.1h.8M418.7 207.3h.8M374.2 210.4h.8M399.2 206.4h.8M385.1 210.1h.8M320.3 208.5h.8M418.0 207.4h.8M378.3 208.2h.8M364.6 209.7h.8M454.5 210.1h.8M425.2 208.5h.8M429.6 208.5h.8M384.1 212.4h.8M464.0 206.9h.8M307.3 208.2h.8M430.2 207.6h.8M357.1 211.1h.8M343.2 207.1h.8M419.2 209.0h.8M428.1 207.1h.8M405.9 208.0h.8M375.3 207.4h.8M393.5 211.0h.8M363.7 210.6h.8M335.9 205.1h.8M310.6 207.6h.8M414.9 205.4h.8M408.0 207.7h.8M365.9 206.6h.8M312.0 208.7h.8M449.5 209.7h.8M385.1 210.4h.8M454.9 208.6h.8M339.3 209.6h.8M353.8 209.6h.8M313.8 212.4h.8M318.1 209.3h.8M310.5 208.2h.8M377.3 211.3h.8M396.0 209.3h.8M396.4 208.7h.8M408.4 210.5h.8M395.9 208.6h.8M280.1 207.7h.8M292.8 207.7h.8M364.5 209.7h.8M449.9 210.5h.8M341.4 208.4h.8M380.2 211.8h.8M384.3 207.8h.8M306.1 209.0h.8M438.2 210.7h.8M388.8 206.9h.8M327.9 208.2h.8M413.4 204.0h.8M324.1 210.0h.8M365.7 212.6h.8M353.9 210.6h.8M381.9 210.8h.8M448.1 210.1h.8M319.4 210.6h.8M360.8 207.9h.8M413.0 209.9h.8M396.9 207.1h.8M379.3 205.5h.8M307.5 207.5h.8M301.4 208.3h.8M337.8 204.5h.8M322.1 208.8h.8M381.7 208.5h.8M293.4 208.6h.8M342.9 208.4h.8M285.0 210.2h.8M378.7 212.5h.8M456.0 210.0h.8M365.8 208.2h.8M431.2 208.6h.8M390.7 210.6h.8M459.0 208.9h.8M307.9 209.6h.8M442.0 209.6h.8M291.8 208.9h.8M420.1 211.9h.8M281.6 209.5h.8M416.8 209.8h.8M414.2 206.6h.8M342.3 210.5h.8M324.5 210.1h.8M354.0 213.3h.8M384.1 208.1h.8M410.3 208.3h.8M301.4 209.5h.8M442.8 208.1h.8M339.9 211.7h.8M341.3 212.1h.8M373.5 209.5h.8M321.7 208.7h.8M401.6 206.5h.8M338.8 210.9h.8M391.2 210.3h.8M352.3 205.6h.8M338.7 208.4h.8M420.1 210.5h.8M446.0 209.8h.8M382.7 209.3h.8M412.0 210.1h.8M347.0 206.5h.8M326.1 206.0h.8M354.9 208.9h.8M412.8 208.2h.8M389.8 212.4h.8M445.8 210.4h.8M334.5 207.1h.8M410.9 211.6h.8M442.6 207.9h.8M378.7 210.3h.8M398.0 209.1h.8M329.8 207.3h.8M407.6 207.9h.8M275.4 209.6h.8M378.6 209.3h.8M372.9 207.7h.8M370.0 208.6h.8M444.6 210.1h.8M346.2 211.7h.8M442.3 207.6h.8M462.1 208.1h.8M379.3 212.9h.8M341.6 212.2h.8M332.7 209.3h.8M368.7 210.2h.8M423.6 207.8h.8M436.1 209.6h.8M291.2 208.6h.8M422.9 208.9h.8M413.2 207.8h.8M423.7 210.2h.8M372.1 207.5h.8M402.8 210.0h.8M304.8 210.2h.8M375.3 207.7h.8M307.1 206.7h.8M369.2 209.1h.8M432.9 207.3h.8M330.0 208.4h.8M342.4 207.4h.8M363.7 206.2h.8M372.1 208.0h.8M421.0 207.5h.8M438.1 211.0h.8M373.1 210.6h.8M343.0 209.2h.8M325.1 207.3h.8M363.3 210.1h.8M371.8 209.6h.8M328.4 210.3h.8M386.5 208.4h.8M404.2 208.7h.8M319.0 210.6h.8M371.9 207.5h.8M435.8 209.6h.8M454.0 209.3h.8M367.1 205.9h.8M307.4 209.7h.8M395.9 206.6h.8M348.4 208.6h.8M386.9 208.1h.8M464.6 208.8h.8M342.2 207.5h.8M293.9 209.0h.8M432.1 209.9h.8M405.0 205.3h.8M404.7 206.9h.8M410.0 209.2h.8M351.4 210.8h.8M313.3 210.0h.8M355.6 207.7h.8M457.5 209.7h.8M376.7 208.6h.8M353.6 209.6h.8M330.4 207.7h.8M448.7 208.1h.8M349.3 208.6h.8M456.6 209.1h.8M372.2 211.8h.8M413.2 208.5h.8M283.2 209.2h.8M344.6 208.5h.8M404.4 211.5h.8M343.2 205.3h.8M418.8 207.2h.8M360.9 210.8h.8M349.9 210.6h.8M460.9 208.5h.8M413.2 206.9h.8M305.8 209.5h.8M287.2 208.4h.8M283.1 209.2h.8M439.8 210.2h.8M376.2 213.1h.8M434.3 211.1h.8M410.9 210.4h.8M331.7 209.8h.8M445.4 209.4h.8M404.1 212.0h.8M326.7 211.1h.8M339.8 208.7h.8M447.0 211.8h.8M421.7 206.9h.8M428.9 209.2h.8M306.1 209.5h.8M344.5 211.8h.8M318.9 207.0h.8M400.4 206.7h.8M431.3 208.8h.8M355.8 208.1h.8M387.6 204.2h.8M370.5 210.3h.8M441.2 211.5h.8M379.6 211.2h.8M429.7 207.1h.8M324.7 206.4h.8M426.7 208.1h.8M348.8 210.9h.8M429.6 205.4h.8M376.4 207.4h.8M360.7 209.6h.8M313.8 208.6h.8M346.6 210.2h.8M395.4 209.9h.8M419.3 208.7h.8M338.1 210.8h.8M381.8 210.1h.8M451.7 211.0h.8M410.6 213.1h.8M386.8 209.9h.8M348.9 208.2h.8M439.5 208.0h.8M370.7 208.1h.8M461.5 208.1h.8M379.6 212.1h.8M392.1 205.7h.8M369.6 209.7h.8M431.3 209.1h.8M415.4 209.3h.8M350.4 213.8h.8M450.0 209.3h.8M414.1 209.8h.8M361.5 209.4h.8M291.6 205.9h.8M384.1 209.7h.8M291.1 211.5h.8M362.7 206.3h.8M358.5 206.5h.8M389.2 211.1h.8M408.9 207.5h.8M458.0 210.2h.8M319.6 209.2h.8M453.0 208.6h.8M357.7 207.2h.8M349.2 211.1h.8M396.6 209.5h.8M354.8 211.0h.8M386.3 207.9h.8M405.4 208.4h.8M370.9 209.5h.8M355.3 208.6h.8M412.3 210.4h.8M375.5 207.9h.8M431.9 207.4h.8M401.5 211.8h.8M391.7 206.1h.8M381.2 209.2h.8M435.5 210.6h.8M316.8 207.8h.8M423.8 213.0h.8M384.7 205.3h.8M341.0 207.9h.8M430.4 209.8h.8M417.9 207.1h.8M417.0 207.1h.8M359.1 209.6h.8M360.6 209.1h.8M351.0 214.0h.8M342.9 208.5h.8M419.0 207.7h.8M369.2 209.9h.8M378.7 211.9h.8M438.8 207.8h.8M342.9 209.2h.8M425.1 207.5h.8M398.1 210.6h.8M417.3 205.9h.8M395.5 210.3h.8M460.8 208.2h.8M389.4 211.2h.8M417.6 208.1h.8M413.1 208.9h.8M362.7 210.6h.8M397.5 207.4h.8M338.1 208.2h.8M338.1 209.5h.8M379.2 210.7h.8M320.4 207.8h.8M367.8 207.7h.8M432.5 210.0h.8M418.6 210.6h.8M374.6 211.0h.8M441.2 211.1h.8M305.7 209.0h.8M390.4 211.0h.8M337.4 209.0h.8M388.0 210.8h.8M350.2 210.1h.8M433.1 209.0h.8M405.7 209.4h.8M351.9 211.1h.8M401.7 210.9h.8M405.1 206.9h.8M371.0 207.8h.8M458.2 209.2h.8M447.1 211.1h.8M363.8 211.9h.8M374.5 208.8h.8M425.0 209.5h.8M379.0 206.9h.8M364.3 211.6h.8M457.2 209.5h.8M328.1 205.5h.8M384.7 207.9h.8M282.9 209.8h.8M353.9 205.6h.8M398.5 210.8h.8M410.6 206.2h.8M400.5 209.5h.8M459.9 208.9h.8M365.2 210.1h.8M365.1 204.4h.8M416.8 210.4h.8M325.2 207.1h.8M419.6 208.2h.8M318.3 210.7h.8M380.1 205.1h.8M422.1 212.8h.8M401.2 209.8h.8M361.9 207.1h.8M438.1 211.0h.8M447.5 209.3h.8M387.7 209.8h.8M347.3 210.4h.8M364.2 205.6h.8M427.4 209.8h.8M460.0 206.8h.8M327.4 208.7h.8M381.0 211.0h.8M329.0 209.2h.8M393.1 208.8h.8M334.8 209.5h.8M451.9 209.4h.8M418.1 207.7h.8M342.8 209.6h.8M413.9 211.1h.8M331.6 209.1h.8M350.0 207.8h.8M395.1 206.1h.8M389.5 210.2h.8M396.3 208.8h.8M389.3 210.1h.8M409.7 210.6h.8M370.8 212.9h.8M444.7 207.7h.8M395.6 213.5h.8M346.4 209.7h.8M407.5 208.9h.8M358.6 210.5h.8M388.5 207.7h.8M374.5 205.3h.8M443.4 207.7h.8M303.7 209.0h.8M375.7 210.0h.8M408.4 211.6h.8M310.4 208.6h.8M301.3 208.2h.8M405.5 204.6h.8M460.1 207.7h.8M423.8 207.9h.8M340.2 210.6h.8M397.2 210.8h.8M375.3 208.5h.8M457.4 209.0h.8M454.7 208.5h.8M408.9 205.4h.8M297.6 209.0h.8M396.1 209.3h.8M377.4 209.6h.8M310.1 210.2h.8M385.9 207.3h.8M331.2 209.3h.8M367.9 209.2h.8M293.9 207.6h.8M417.1 209.4h.8M366.4 208.0h.8M329.8 211.6h.8M332.3 210.1h.8M363.1 210.1h.8M373.2 207.9h.8M351.5 211.3h.8M456.6 206.8h.8M319.4 207.9h.8M414.5 209.0h.8M387.3 213.0h.8M305.4 208.2h.8M401.8 207.9h.8M381.0 211.6h.8M420.6 207.8h.8M328.8 209.8h.8M379.5 208.7h.8M319.0 212.9h.8M381.8 209.7h.8M393.2 210.9h.8M362.1 211.0h.8M322.5 209.8h.8M430.7 211.2h.8M346.3 206.0h.8M382.6 207.5h.8M356.5 208.8h.8M416.5 212.9h.8M435.1 207.3h.8M314.9 210.6h.8M307.0 209.1h.8M401.1 206.7h.8M435.0 207.9h.8M286.9 206.9h.8M332.2 208.5h.8M400.6 208.1h.8M404.8 211.8h.8M361.3 209.3h.8M309.2 210.7h.8M347.8 206.6h.8M286.4 210.5h.8M367.6 207.3h.8M378.9 210.0h.8M369.3 206.3h.8M437.6 208.6h.8M388.4 210.7h.8M291.5 208.0h.8M465.5 210.1h.8M399.7 209.4h.8M319.2 209.5h.8M434.6 212.3h.8M408.1 206.7h.8M319.5 208.7h.8M302.5 208.4h.8M452.4 209.1h.8M406.2 210.8h.8M357.8 208.4h.8M318.4 210.4h.8M428.1 211.5h.8M336.6 211.2h.8M458.1 209.0h.8M279.9 209.6h.8M387.2 210.2h.8M359.3 211.3h.8M301.3 208.9h.8M389.8 208.0h.8M312.4 208.6h.8M437.7 208.9h.8M385.7 209.3h.8M356.4 210.5h.8M438.8 209.1h.8M448.2 208.3h.8M374.3 207.7h.8M279.0 208.4h.8M367.1 207.8h.8M336.3 205.4h.8M400.6 209.0h.8M396.2 204.6h.8M461.3 207.5h.8M353.2 207.9h.8M368.4 205.8h.8M393.6 204.3h.8M360.5 208.7h.8M427.4 207.2h.8M278.8 208.6h.8M449.0 210.6h.8M416.9 207.4h.8M459.5 209.7h.8M440.4 206.9h.8M441.9 212.6h.8M418.7 207.4h.8M387.7 211.2h.8M372.9 209.9h.8M283.7 207.2h.8M279.9 208.4h.8M437.3 210.9h.8M443.3 208.6h.8M423.9 208.4h.8M438.1 206.7h.8M340.0 208.4h.8M345.8 208.1h.8M332.0 211.6h.8M416.7 210.7h.8M421.2 207.4h.8M378.6 210.8h.8M436.2 209.1h.8M405.1 211.0h.8M326.2 204.3h.8M379.0 208.6h.8M420.3 210.0h.8M359.3 210.9h.8M428.0 211.8h.8M329.4 207.7h.8M430.5 205.7h.8M372.9 210.1h.8M402.4 211.7h.8M390.0 209.5h.8M299.4 207.8h.8M434.5 210.8h.8M396.0 208.6h.8M416.4 207.3h.8M425.0 210.0h.8M351.6 210.1h.8M318.8 211.4h.8M359.5 208.6h.8M342.4 203.1h.8M452.6 206.8h.8M442.9 207.5h.8M420.2 207.5h.8M316.1 206.4h.8M408.5 211.4h.8M364.5 212.1h.8M312.0 206.7h.8M347.2 210.1h.8M284.5 208.8h.8M397.4 209.7h.8M435.2 211.1h.8M343.0 210.2h.8M398.9 206.0h.8M301.7 208.5h.8M390.5 207.2h.8M397.7 205.7h.8M317.7 208.6h.8M412.4 205.6h.8M404.3 213.3h.8M401.9 207.9h.8M379.3 212.4h.8M418.5 210.7h.8M381.7 209.5h.8M355.3 211.5h.8M453.8 209.2h.8M397.7 211.2h.8M370.4 208.4h.8M427.7 211.1h.8M334.6 210.3h.8M388.4 209.8h.8M279.1 209.3h.8M315.8 209.4h.8M350.1 207.9h.8M420.7 210.9h.8M331.2 207.5h.8M377.5 211.3h.8M345.4 207.8h.8M457.6 208.1h.8M409.0 211.1h.8M416.3 205.6h.8M391.9 211.1h.8M347.2 210.8h.8M318.8 208.9h.8M407.6 212.0h.8M331.7 205.2h.8M410.9 210.0h.8M371.3 211.8h.8M359.9 211.8h.8M308.4 209.2h.8M414.1 211.0h.8M312.7 206.1h.8M444.1 209.6h.8M296.3 211.1h.8M298.5 211.2h.8M410.1 208.3h.8M389.0 212.3h.8M327.0 207.6h.8M396.8 206.7h.8M442.0 208.9h.8M435.9 210.3h.8M435.7 208.0h.8M315.4 210.1h.8M391.1 212.3h.8M310.3 209.9h.8M434.6 210.3h.8M353.1 210.3h.8M310.4 209.4h.8M345.8 207.8h.8M310.1 208.0h.8M366.6 209.5h.8M343.7 207.7h.8M374.4 208.2h.8M276.3 207.5h.8M409.3 209.7h.8M398.7 206.6h.8M380.5 207.9h.8M401.5 207.5h.8M442.6 207.6h.8M303.7 210.0h.8M388.7 211.0h.8M359.2 205.7h.8M393.6 211.0h.8M417.3 210.3h.8M333.1 209.8h.8M284.6 209.3h.8M415.5 209.0h.8M372.7 206.4h.8M458.8 208.7h.8M359.4 207.5h.8M415.7 209.2h.8M402.2 210.1h.8M424.7 208.1h.8M401.0 209.3h.8M424.4 209.7h.8M392.8 208.8h.8M452.5 208.8h.8M388.5 205.0h.8M350.6 209.4h.8M390.8 209.3h.8M316.5 208.6h.8M424.2 208.0h.8M363.4 210.0h.8M415.9 209.5h.8M312.6 207.5h.8M400.2 207.5h.8M380.4 213.5h.8M347.9 207.5h.8M436.3 208.8h.8M300.3 210.3h.8M356.9 207.5h.8M448.1 207.9h.8M304.7 210.2h.8M433.8 205.1h.8M396.3 208.1h.8M332.6 207.8h.8M433.3 212.7h.8M330.6 210.0h.8M328.8 210.9h.8M389.5 209.0h.8M324.8 207.5h.8M418.2 206.0h.8M445.3 208.2h.8M316.7 208.4h.8M367.8 208.5h.8M368.1 209.0h.8M428.4 212.6h.8M352.0 209.8h.8M367.0 210.7h.8M408.2 210.3h.8M416.1 205.2h.8M404.6 209.4h.8M315.4 210.2h.8M411.8 210.8h.8M371.9 207.5h.8M356.3 207.5h.8M310.3 204.6h.8M365.6 211.7h.8M341.8 209.0h.8M389.5 207.3h.8M350.4 212.7h.8M430.1 209.0h.8M343.7 210.7h.8M286.2 208.4h.8M433.8 206.6h.8M344.6 210.9h.8M402.3 209.7h.8M424.6 208.2h.8M327.7 211.6h.8M381.1 210.5h.8M298.2 210.4h.8M315.1 208.8h.8M398.2 214.9h.8M432.9 207.3h.8M461.1 210.6h.8M377.7 215.2h.8M457.9 209.1h.8M351.0 207.4h.8M362.0 210.9h.8M372.9 208.3h.8M383.7 209.0h.8M455.3 208.3h.8M440.2 208.1h.8M416.2 207.1h.8M389.0 210.1h.8M325.2 210.8h.8M393.7 209.8h.8M461.6 208.1h.8M361.7 208.6h.8M383.5 209.3h.8M463.8 208.2h.8M411.7 210.5h.8M365.5 211.6h.8M400.6 212.4h.8M330.7 211.1h.8M400.0 208.6h.8M417.5 207.5h.8M413.3 208.0h.8M400.3 210.0h.8M410.7 207.7h.8M371.4 209.4h.8M458.3 207.6h.8M366.1 206.4h.8M436.9 208.1h.8M282.4 208.0h.8M402.6 206.0h.8M392.6 210.7h.8M407.7 212.0h.8M429.1 209.0h.8M388.2 204.9h.8M442.4 209.3h.8M393.5 209.5h.8M356.4 206.5h.8M276.3 209.1h.8M386.3 207.8h.8M406.6 211.4h.8M369.4 208.2h.8M389.2 209.3h.8M364.2 206.5h.8M402.5 208.0h.8M372.0 208.5h.8M393.5 209.4h.8M461.8 209.7h.8M390.4 211.4h.8M430.7 208.4h.8M415.5 206.7h.8M448.5 208.4h.8M328.0 208.2h.8M288.0 208.2h.8M391.3 208.8h.8M294.3 210.3h.8M394.7 208.6h.8M393.5 209.3h.8M393.2 207.6h.8M418.7 207.4h.8M409.1 209.0h.8M411.8 209.1h.8M344.6 207.7h.8M410.7 207.3h.8M346.2 208.5h.8M372.9 212.9h.8M430.9 209.5h.8M324.4 210.1h.8M384.4 206.1h.8M363.2 205.4h.8M440.8 213.5h.8M359.2 210.9h.8M428.5 206.4h.8M435.3 210.4h.8M327.9 208.4h.8M352.9 212.5h.8M316.2 208.2h.8M377.0 209.3h.8M406.7 203.1h.8M369.8 207.3h.8M410.2 207.3h.8M356.1 211.0h.8M361.4 209.6h.8M462.4 209.1h.8M375.1 214.6h.8M425.3 209.6h.8M282.5 210.0h.8M351.5 210.7h.8M281.6 208.2h.8M341.1 209.8h.8M363.6 208.1h.8M380.8 206.7h.8M446.7 208.4h.8M411.0 208.8h.8M410.0 211.4h.8M445.1 205.9h.8M418.7 210.0h.8M373.5 207.0h.8M432.6 206.9h.8M371.9 207.7h.8M440.7 206.4h.8M418.0 209.9h.8M419.0 211.5h.8M458.2 208.8h.8M362.4 207.6h.8M440.7 209.8h.8M366.2 209.1h.8M322.4 207.0h.8M427.2 211.2h.8M387.3 213.1h.8M400.3 210.6h.8M387.4 207.2h.8M456.8 209.4h.8M338.5 207.8h.8M393.6 208.4h.8M438.5 207.4h.8M354.0 207.3h.8M394.2 207.3h.8M311.0 211.8h.8M410.9 204.5h.8M317.4 211.1h.8M389.7 208.0h.8M426.4 210.2h.8M334.1 210.8h.8M331.3 211.1h.8M435.9 209.5h.8M461.7 208.2h.8M409.4 203.4h.8M356.7 205.5h.8M431.0 209.5h.8M398.2 206.5h.8M357.2 211.1h.8M341.8 205.3h.8M295.9 207.0h.8M420.8 206.9h.8M435.4 209.4h.8M424.5 205.3h.8M365.1 207.4h.8M375.7 208.8h.8M287.3 210.1h.8M429.7 207.1h.8M403.7 208.5h.8M454.7 207.6h.8M358.9 206.9h.8M324.8 209.5h.8M406.9 208.6h.8M350.9 210.2h.8M419.2 207.0h.8M428.2 207.6h.8M409.7 208.0h.8M348.9 210.9h.8M374.0 209.2h.8M368.2 208.5h.8M388.4 211.1h.8M427.2 209.1h.8M444.9 208.2h.8M302.0 208.7h.8M416.4 209.5h.8M282.8 208.0h.8M305.8 209.6h.8M336.6 207.7h.8M361.9 212.4h.8M331.7 208.2h.8M433.3 209.0h.8M311.2 209.2h.8M365.7 206.8h.8M430.8 211.6h.8M463.3 210.1h.8M452.3 210.7h.8M379.4 211.4h.8M416.1 207.9h.8M345.6 207.1h.8M334.4 207.6h.8M371.5 209.2h.8M344.6 214.9h.8M408.7 208.4h.8M409.9 210.6h.8M464.8 209.4h.8M398.5 209.9h.8M388.9 210.4h.8M422.1 206.9h.8M367.0 212.0h.8M443.7 208.7h.8M294.5 208.3h.8M373.5 207.1h.8M368.1 210.4h.8M311.8 208.9h.8M450.5 209.7h.8M412.2 205.0h.8M414.1 208.8h.8M319.8 207.6h.8M324.7 212.3h.8M407.4 207.6h.8M341.8 211.4h.8M362.8 207.6h.8M326.0 209.5h.8M366.9 206.4h.8M379.5 206.8h.8M404.5 204.7h.8M359.8 209.4h.8M381.9 210.4h.8M318.4 208.9h.8M459.3 208.2h.8M361.2 211.8h.8M357.2 210.5h.8M418.1 208.8h.8M354.8 205.9h.8M410.0 208.6h.8M366.0 205.4h.8M404.8 210.2h.8M439.1 208.8h.8M369.4 209.3h.8M408.3 208.7h.8M331.4 210.1h.8M406.0 209.2h.8M442.0 211.0h.8M287.8 208.0h.8M439.7 207.9h.8M355.6 211.1h.8M353.9 208.3h.8M416.8 213.0h.8M444.3 209.1h.8M371.3 208.7h.8M390.7 207.4h.8M377.0 209.6h.8M319.5 206.5h.8M380.5 209.0h.8M362.4 209.4h.8M302.3 210.6h.8M351.9 201.7h.8M444.8 208.7h.8M389.6 208.6h.8M379.7 212.1h.8M464.2 209.6h.8M350.3 208.5h.8M290.7 208.4h.8M427.0 208.2h.8M388.2 206.6h.8M390.0 207.8h.8M355.7 207.8h.8M380.4 215.1h.8M378.0 204.8h.8M328.8 209.2h.8M425.6 211.7h.8M354.8 209.3h.8M455.0 207.3h.8M453.5 210.8h.8M402.5 208.0h.8M419.5 210.4h.8M450.9 209.6h.8M363.3 206.6h.8M402.5 206.7h.8M316.9 209.4h.8M381.5 210.9h.8M377.7 209.7h.8M421.5 215.8h.8M442.4 208.7h.8M429.1 212.2h.8M447.0 208.9h.8M290.9 208.8h.8M318.7 208.4h.8M343.2 208.8h.8M413.8 208.8h.8M369.1 208.6h.8M337.6 206.8h.8M462.8 209.1h.8M359.4 207.7h.8M465.1 208.4h.8M376.6 210.3h.8M415.1 206.1h.8M357.1 209.5h.8M320.1 209.5h.8M335.6 207.2h.8M296.1 206.9h.8M369.9 210.0h.8M448.2 206.9h.8M333.1 210.7h.8M324.3 206.7h.8M367.7 207.1h.8M356.4 207.9h.8M348.2 207.9h.8M406.4 207.9h.8M394.0 208.2h.8M456.2 210.1h.8M346.9 208.7h.8M367.3 205.0h.8M367.5 208.6h.8M389.2 207.1h.8M336.0 208.0h.8M415.4 208.0h.8M443.7 210.2h.8M455.7 209.9h.8M404.5 208.3h.8M345.4 210.9h.8M401.0 209.3h.8M422.8 211.5h.8M447.6 212.1h.8M461.0 210.3h.8M433.1 208.3h.8M466.3 208.8h.8M542.0 208.6h.8M539.2 209.2h.8M501.7 208.9h.8M481.6 209.0h.8M471.2 209.0h.8M537.7 209.7h.8M496.9 209.5h.8M480.7 209.5h.8M468.6 208.4h.8M495.5 209.3h.8M495.6 208.3h.8M501.1 208.3h.8M536.4 208.9h.8M486.6 209.0h.8M532.7 208.8h.8M507.4 208.4h.8M516.5 208.5h.8M466.5 208.4h.8M503.6 208.0h.8M508.1 209.1h.8M483.7 208.1h.8M502.8 209.1h.8M511.2 209.4h.8M481.2 208.3h.8M471.0 208.8h.8M505.7 210.0h.8M509.0 209.5h.8M532.8 208.6h.8M472.4 208.8h.8M502.7 208.9h.8M523.0 208.5h.8M506.5 209.3h.8M483.4 208.5h.8M505.0 208.8h.8M483.1 209.3h.8M508.7 209.8h.8M526.5 208.2h.8M490.6 208.2h.8M539.6 209.4h.8M512.8 209.7h.8M538.0 208.4h.8M525.3 208.8h.8M500.0 208.4h.8M506.2 209.5h.8M537.4 208.9h.8M492.1 208.2h.8M533.6 207.9h.8M529.6 209.2h.8M504.3 208.9h.8M503.9 209.4h.8M541.7 208.7h.8M472.7 208.6h.8M526.0 210.0h.8M541.2 208.7h.8M466.8 208.8h.8M518.9 209.4h.8M512.3 208.5h.8M480.0 209.7h.8M484.7 209.2h.8M488.0 208.5h.8M492.8 208.8h.8M484.9 208.3h.8M467.0 209.5h.8M469.3 208.6h.8M508.4 208.4h.8M513.6 209.3h.8M519.5 209.6h.8M509.4 209.0h.8M503.4 208.9h.8M501.1 209.1h.8M497.7 208.8h.8M472.5 209.7h.8M540.0 208.6h.8M493.0 209.6h.8M504.1 207.8h.8M496.2 209.2h.8M533.3 209.2h.8M507.6 208.4h.8M489.2 209.2h.8M531.0 209.6h.8M523.1 209.0h.8M511.5 208.6h.8M478.6 209.0h.8M501.2 208.4h.8M486.2 208.2h.8M502.7 209.0h.8M511.3 210.6h.8M479.9 209.0h.8M486.6 208.7h.8M476.1 209.5h.8M507.4 208.9h.8M520.1 208.9h.8M499.4 208.9h.8M476.7 209.3h.8M516.7 209.1h.8M483.0 207.9h.8M538.4 208.3h.8M505.4 208.0h.8M524.0 207.9h.8M511.8 209.2h.8M529.6 209.1h.8M519.3 209.4h.8M531.3 209.2h.8M482.1 209.4h.8M527.5 208.9h.8M489.7 208.5h.8M467.0 209.6h.8M534.8 209.0h.8M498.3 208.6h.8M542.8 209.8h.8M479.3 208.7h.8M489.9 209.3h.8M472.9 207.7h.8M482.3 209.3h.8M539.6 208.8h.8M534.2 208.8h.8M531.9 209.7h.8M537.8 209.4h.8M538.6 209.0h.8M470.0 209.4h.8M474.7 209.4h.8M541.5 209.1h.8M487.8 209.3h.8M533.5 209.6h.8M542.7 209.1h.8M493.2 209.0h.8M484.7 210.2h.8M504.0 209.1h.8M504.7 209.1h.8M504.6 208.8h.8M527.0 209.1h.8M514.0 209.2h.8M485.9 208.0h.8M486.2 208.4h.8M471.9 208.4h.8M499.3 209.2h.8M512.7 209.2h.8M526.1 208.6h.8M519.6 208.3h.8M466.5 209.2h.8M505.8 208.2h.8M511.6 209.1h.8M508.4 208.7h.8M523.4 207.6h.8M522.2 208.7h.8M480.3 208.7h.8M475.3 209.3h.8M517.8 209.0h.8M504.3 209.1h.8M497.6 209.4h.8M521.4 210.2h.8M472.3 209.6h.8M507.8 209.0h.8M531.9 208.3h.8M532.8 209.2h.8M517.4 209.0h.8M522.4 209.0h.8M511.5 210.1h.8M488.2 209.1h.8M488.4 208.5h.8M486.8 208.4h.8M513.8 208.5h.8M521.1 209.2h.8M472.4 208.1h.8M513.7 209.6h.8M491.8 209.0h.8M483.3 208.3h.8M505.6 209.9h.8M504.8 210.5h.8M249.0 209.2h.8M209.7 208.7h.8M210.5 209.3h.8M258.6 209.2h.8M211.1 208.9h.8M209.5 209.3h.8M262.9 208.4h.8M217.8 208.9h.8M256.8 208.6h.8M252.3 209.5h.8M221.7 208.8h.8M215.5 209.2h.8M208.6 209.4h.8M256.3 209.1h.8M230.9 208.4h.8M257.5 209.9h.8M249.6 208.7h.8M217.5 208.4h.8M212.4 208.9h.8M237.4 208.6h.8M225.1 208.1h.8M236.6 208.7h.8M238.5 209.1h.8M209.9 209.0h.8M229.2 208.1h.8M229.0 208.8h.8M239.7 209.2h.8M234.7 209.1h.8M225.1 208.7h.8M237.0 209.6h.8M226.2 208.7h.8M226.3 209.1h.8M266.9 208.6h.8M207.7 208.8h.8M272.0 209.2h.8M209.3 209.1h.8M242.4 209.4h.8M272.1 208.1h.8M221.3 209.2h.8M226.5 208.6h.8M253.8 209.2h.8M241.2 209.5h.8M262.9 209.3h.8M238.8 208.7h.8M262.9 208.9h.8M272.6 209.4h.8M228.2 209.2h.8M247.2 209.4h.8M212.8 209.0h.8M226.7 209.2h.8M256.4 209.3h.8M227.7 208.6h.8M217.3 209.5h.8M270.3 209.7h.8M232.9 208.3h.8M274.4 208.6h.8M262.9 209.3h.8M256.3 209.1h.8M270.7 209.3h.8M260.1 209.2h.8M224.5 209.6h.8M213.1 208.6h.8M221.7 209.1h.8M267.5 209.1h.8M233.8 209.1h.8M211.3 208.8h.8M225.8 209.0h.8M252.1 209.2h.8M233.5 209.1h.8M233.1 209.0h.8M446.9 196.8h.8M414.9 194.8h.8M329.4 194.5h.8M399.3 197.2h.8M382.1 193.3h.8M332.1 194.4h.8M305.2 194.4h.8M360.0 190.9h.8M379.9 196.4h.8M397.2 196.7h.8M376.8 192.7h.8M368.8 198.2h.8M355.1 195.0h.8M430.6 200.1h.8M335.9 192.9h.8M466.7 194.3h.8M400.3 194.2h.8M447.1 195.6h.8M460.6 194.3h.8M335.0 194.7h.8M321.9 197.2h.8M320.7 196.1h.8M347.8 196.5h.8M330.3 195.8h.8M358.4 193.9h.8M317.8 196.0h.8M421.7 194.2h.8M435.3 194.9h.8M392.5 197.0h.8M422.4 197.4h.8M391.4 193.0h.8M389.0 194.3h.8M415.3 194.3h.8M335.5 196.0h.8M439.1 195.3h.8M399.8 193.3h.8M320.6 197.1h.8M319.7 197.2h.8M414.5 194.9h.8M304.6 193.1h.8M315.7 195.6h.8M401.9 192.8h.8M373.1 194.2h.8M387.3 194.9h.8M350.2 195.2h.8M299.2 194.7h.8M402.2 198.3h.8M365.1 196.9h.8M421.7 194.6h.8M421.5 196.4h.8M431.2 195.4h.8M388.8 198.1h.8M374.8 194.4h.8M291.8 196.4h.8M421.4 193.0h.8M407.3 195.1h.8M387.5 194.8h.8M301.7 195.8h.8M405.2 194.6h.8M409.5 196.0h.8M396.4 194.0h.8M396.1 192.5h.8M381.4 193.8h.8M388.0 194.5h.8M390.2 196.5h.8M423.0 197.0h.8M338.0 198.9h.8M465.8 197.3h.8M349.8 193.3h.8M413.5 197.9h.8M311.7 193.0h.8M467.7 194.0h.8M405.8 193.3h.8M337.9 194.2h.8M385.9 194.1h.8M412.7 196.2h.8M367.5 197.4h.8M345.1 195.9h.8M452.3 194.9h.8M300.9 195.4h.8M460.8 195.0h.8M421.0 191.6h.8M370.1 193.6h.8M460.5 193.8h.8M338.5 192.9h.8M452.2 194.1h.8M375.5 193.9h.8M376.5 192.3h.8M348.7 194.6h.8M437.4 194.9h.8M306.5 193.4h.8M327.4 194.8h.8M354.5 195.3h.8M380.0 191.8h.8M365.3 192.2h.8M414.1 199.8h.8M337.3 196.7h.8M430.4 198.6h.8M361.8 195.0h.8M427.2 193.1h.8M346.4 198.5h.8M391.7 197.1h.8M342.2 197.7h.8M347.6 193.2h.8M380.5 195.0h.8M387.8 193.5h.8M364.6 196.1h.8M368.5 194.8h.8M374.3 194.2h.8M418.0 192.2h.8M332.2 194.8h.8M425.9 192.0h.8M341.1 195.1h.8M369.6 194.0h.8M401.2 196.1h.8M455.6 195.2h.8M306.6 197.4h.8M293.1 194.6h.8M426.1 194.3h.8M450.7 194.5h.8M437.5 193.9h.8M369.4 195.6h.8M421.0 196.9h.8M440.9 193.4h.8M365.0 195.9h.8M433.0 196.4h.8M405.2 197.1h.8M397.1 195.0h.8M425.4 194.9h.8M445.8 194.9h.8M396.9 196.2h.8M348.2 197.9h.8M395.4 192.0h.8M352.1 193.8h.8M441.0 195.1h.8M325.1 196.4h.8M392.0 193.9h.8M398.2 195.0h.8M360.5 190.5h.8M442.1 194.2h.8M374.0 196.4h.8M378.3 196.4h.8M414.0 192.6h.8M450.1 194.4h.8M417.4 199.3h.8M398.3 196.0h.8M345.6 194.2h.8M351.3 196.9h.8M418.1 195.7h.8M411.8 197.1h.8M372.5 196.7h.8M309.9 194.0h.8M413.5 195.9h.8M298.2 195.6h.8M391.6 199.1h.8M400.3 196.9h.8M435.1 195.8h.8M305.4 195.2h.8M292.4 194.7h.8M367.7 196.8h.8M430.0 192.4h.8M361.1 192.3h.8M392.1 192.6h.8M368.3 192.5h.8M434.8 191.7h.8M313.5 195.5h.8M425.8 192.3h.8M394.3 195.5h.8M446.7 196.0h.8M428.0 194.8h.8M317.4 194.9h.8M391.5 195.1h.8M361.6 195.6h.8M316.1 195.3h.8M430.9 198.7h.8M389.4 197.0h.8M291.2 195.6h.8M366.4 195.0h.8M355.1 195.0h.8M343.4 196.8h.8M402.8 196.7h.8M389.0 194.7h.8M300.7 195.5h.8M467.0 194.2h.8M398.1 196.2h.8M407.3 198.7h.8M415.0 196.1h.8M386.1 197.5h.8M302.7 194.4h.8M370.2 193.8h.8M336.3 197.1h.8M426.5 197.2h.8M394.6 194.4h.8M343.2 194.1h.8M402.4 190.4h.8M340.1 196.8h.8M412.5 193.9h.8M350.7 194.9h.8M378.1 192.3h.8M314.3 197.6h.8M467.1 195.4h.8M421.2 197.3h.8M350.2 192.0h.8M434.5 192.3h.8M374.5 194.7h.8M300.7 193.2h.8M343.1 195.0h.8M378.6 197.2h.8M470.8 195.2h.8M376.0 195.5h.8M288.9 194.7h.8M460.7 194.0h.8M303.3 194.1h.8M370.6 195.0h.8M403.7 193.5h.8M427.0 191.9h.8M297.5 195.2h.8M362.9 193.4h.8M328.0 193.8h.8M384.5 196.1h.8M383.9 196.5h.8M374.7 193.6h.8M361.7 197.6h.8M347.2 197.4h.8M382.5 195.4h.8M381.6 194.5h.8M320.7 194.7h.8M435.6 194.7h.8M434.0 197.1h.8M354.7 194.5h.8M375.5 198.4h.8M427.7 198.2h.8M461.2 194.8h.8M435.4 197.0h.8M386.5 195.1h.8M406.3 196.3h.8M292.6 194.5h.8M381.9 195.7h.8M450.5 197.7h.8M392.3 196.2h.8M426.2 195.8h.8M455.6 193.6h.8M436.0 195.9h.8M462.9 194.7h.8M338.4 196.2h.8M355.6 194.5h.8M379.3 193.9h.8M362.9 197.3h.8M352.4 196.1h.8M431.8 194.7h.8M379.9 195.9h.8M377.9 195.1h.8M317.0 195.5h.8M339.7 193.3h.8M295.0 193.7h.8M390.4 193.4h.8M367.5 194.8h.8M283.5 195.8h.8M416.5 195.2h.8M291.6 192.7h.8M399.8 195.5h.8M282.2 197.7h.8M320.4 194.3h.8M383.7 196.9h.8M439.3 192.2h.8M305.6 191.9h.8M334.1 195.3h.8M385.2 192.4h.8M418.2 198.7h.8M354.4 195.5h.8M472.8 194.7h.8M387.8 196.7h.8M360.7 195.1h.8M297.0 195.4h.8M469.4 194.0h.8M357.2 192.5h.8M398.0 197.8h.8M424.7 193.4h.8M336.6 197.0h.8M437.9 197.0h.8M331.7 196.7h.8M282.0 196.4h.8M459.9 194.2h.8M380.0 196.1h.8M366.0 193.1h.8M412.8 196.7h.8M301.8 193.8h.8M430.8 194.4h.8M281.5 194.8h.8M415.9 195.1h.8M384.6 194.7h.8M416.9 192.7h.8M379.2 193.9h.8M464.8 195.0h.8M442.3 195.9h.8M338.8 197.7h.8M312.5 197.8h.8M446.3 195.3h.8M457.7 195.7h.8M419.6 196.5h.8M330.7 195.2h.8M329.8 194.2h.8M405.8 196.6h.8M364.2 193.1h.8M335.6 194.1h.8M287.8 195.0h.8M364.2 196.7h.8M334.5 198.4h.8M453.0 195.6h.8M460.4 193.9h.8M413.4 194.1h.8M320.5 192.5h.8M424.0 195.3h.8M388.9 194.9h.8M432.9 193.0h.8M376.0 194.3h.8M427.1 191.1h.8M430.5 194.7h.8M332.0 197.7h.8M466.0 195.8h.8M289.7 195.0h.8M413.6 194.8h.8M384.5 196.6h.8M443.7 195.3h.8M420.0 195.2h.8M413.0 193.8h.8M364.3 194.3h.8M439.1 196.6h.8M369.4 195.1h.8M431.4 192.2h.8M333.8 196.5h.8M301.0 194.6h.8M302.8 192.9h.8M387.2 194.8h.8M357.9 195.7h.8M359.1 193.5h.8M388.3 197.3h.8M283.3 193.9h.8M293.9 196.4h.8M460.4 194.4h.8M459.8 194.4h.8M463.9 194.7h.8M405.5 193.0h.8M394.1 194.2h.8M340.2 196.4h.8M320.4 196.0h.8M458.2 197.1h.8M366.1 195.1h.8M350.5 195.8h.8M371.5 196.9h.8M291.7 193.4h.8M312.0 194.6h.8M365.6 195.7h.8M369.5 196.1h.8M329.2 193.2h.8M429.7 199.2h.8M463.3 195.5h.8M428.6 194.3h.8M292.2 193.3h.8M467.7 194.2h.8M330.2 194.5h.8M405.9 195.5h.8M394.1 192.7h.8M436.5 194.3h.8M320.1 195.9h.8M362.0 196.0h.8M398.3 191.4h.8M345.8 192.8h.8M326.3 196.7h.8M335.4 194.0h.8M344.6 192.4h.8M472.9 193.6h.8M354.1 195.7h.8M287.6 194.6h.8M292.2 195.6h.8M441.9 195.5h.8M297.7 193.1h.8M369.6 195.9h.8M366.5 192.2h.8M355.0 192.9h.8M416.5 197.3h.8M374.9 193.4h.8M407.5 195.5h.8M402.1 194.5h.8M363.4 195.8h.8M289.8 195.8h.8M430.7 195.1h.8M398.2 194.0h.8M452.3 192.5h.8M415.3 195.2h.8M360.1 194.4h.8M426.5 192.7h.8M393.9 195.5h.8M459.7 193.2h.8M396.4 197.1h.8M411.9 193.7h.8M298.8 195.2h.8M425.7 193.9h.8M378.5 197.0h.8M427.6 193.9h.8M360.9 195.6h.8M441.9 195.5h.8M422.1 193.8h.8M296.4 194.1h.8M338.3 196.6h.8M415.0 196.0h.8M396.6 195.3h.8M391.6 193.3h.8M318.5 194.4h.8M460.9 196.0h.8M352.1 197.2h.8M291.6 196.1h.8M404.6 195.6h.8M412.0 191.2h.8M383.4 198.2h.8M332.5 193.4h.8M456.6 193.7h.8M409.6 196.4h.8M388.6 198.2h.8M363.1 194.5h.8M462.6 196.6h.8M303.0 195.1h.8M380.7 192.1h.8M351.4 192.6h.8M290.1 195.7h.8M375.3 199.0h.8M391.6 192.9h.8M336.3 195.1h.8M467.5 195.0h.8M386.6 196.1h.8M411.1 192.6h.8M441.5 195.1h.8M315.2 194.4h.8M436.5 195.6h.8M461.7 196.0h.8M355.1 195.2h.8M349.9 194.3h.8M460.9 192.9h.8M367.3 193.9h.8M380.3 194.7h.8M427.5 195.2h.8M461.4 196.0h.8M339.2 193.6h.8M447.1 194.3h.8M439.5 193.7h.8M411.3 191.4h.8M364.3 190.8h.8M431.8 194.1h.8M375.5 197.8h.8M359.1 193.1h.8M458.5 196.3h.8M369.1 197.6h.8M419.0 195.1h.8M389.6 194.1h.8M387.2 194.1h.8M349.3 191.5h.8M441.2 195.9h.8M320.4 195.5h.8M464.8 195.6h.8M467.8 196.1h.8M460.6 194.0h.8M330.7 195.1h.8M404.7 194.9h.8M371.2 195.3h.8M403.5 191.7h.8M299.3 195.7h.8M304.5 194.5h.8M357.4 194.7h.8M366.0 195.5h.8M367.6 194.3h.8M454.5 195.6h.8M318.1 195.3h.8M384.7 196.1h.8M362.8 194.7h.8M406.2 194.9h.8M377.7 192.6h.8M360.7 191.7h.8M372.8 198.0h.8M433.9 194.2h.8M398.8 195.9h.8M439.9 192.7h.8M459.1 195.9h.8M411.3 195.5h.8M463.4 195.1h.8M407.2 194.7h.8M282.6 196.4h.8M415.9 195.3h.8M332.6 192.9h.8M292.4 194.0h.8M434.3 194.5h.8M356.2 196.1h.8M305.7 196.1h.8M310.4 193.5h.8M338.1 196.7h.8M470.2 194.9h.8M368.0 197.2h.8M317.5 194.0h.8M350.1 196.9h.8M379.2 195.6h.8M452.2 194.3h.8M463.7 194.3h.8M456.9 193.4h.8M376.7 198.7h.8M388.9 193.0h.8M413.0 197.4h.8M405.6 196.2h.8M417.7 195.8h.8M389.6 194.1h.8M346.1 197.0h.8M301.8 195.2h.8M342.0 195.1h.8M301.7 196.0h.8M295.8 194.7h.8M330.3 195.7h.8M323.1 195.6h.8M461.7 193.7h.8M338.0 193.4h.8M312.5 193.3h.8M451.2 193.5h.8M319.4 192.0h.8M325.4 193.7h.8M324.6 194.3h.8M390.4 196.0h.8M380.6 194.2h.8M332.1 194.3h.8M314.7 194.9h.8M344.6 192.2h.8M400.0 197.0h.8M374.3 195.4h.8M378.5 194.6h.8M403.3 196.9h.8M298.7 195.8h.8M440.0 194.5h.8M309.2 194.9h.8M353.3 194.1h.8M371.6 197.5h.8M368.0 194.5h.8M417.5 198.3h.8M351.8 196.3h.8M367.5 196.6h.8M431.0 195.4h.8M396.9 194.0h.8M356.5 197.5h.8M369.4 193.7h.8M432.5 195.6h.8M421.8 195.4h.8M442.5 196.4h.8M348.8 197.8h.8M387.2 192.6h.8M449.8 194.8h.8M358.9 191.8h.8M346.6 193.1h.8M374.2 196.1h.8M307.0 193.9h.8M451.5 195.9h.8M457.2 195.2h.8M464.8 197.0h.8M286.1 195.5h.8M319.3 196.5h.8M327.8 196.7h.8M342.4 194.8h.8M335.9 194.8h.8M390.5 197.6h.8M423.8 194.0h.8M321.2 195.5h.8M379.0 193.4h.8M412.8 196.8h.8M405.2 198.9h.8M280.4 194.7h.8M453.6 195.3h.8M388.8 196.6h.8M409.4 195.2h.8M349.4 197.3h.8M287.2 194.5h.8M371.6 196.3h.8M323.6 195.1h.8M433.4 193.6h.8M313.0 195.6h.8M411.8 194.2h.8M359.6 191.5h.8M447.1 194.2h.8M378.3 198.5h.8M414.5 193.3h.8M405.9 196.6h.8M392.5 197.5h.8M442.4 196.5h.8M448.3 195.2h.8M398.7 197.8h.8M434.8 193.3h.8M304.0 195.3h.8M332.7 191.8h.8M359.5 196.9h.8M458.7 194.0h.8M360.7 194.3h.8M444.5 195.3h.8M410.2 194.3h.8M342.9 190.0h.8M421.4 196.5h.8M314.7 193.9h.8M396.5 196.7h.8M330.5 191.4h.8M383.4 194.3h.8M358.2 195.8h.8M409.9 195.6h.8M409.0 196.9h.8M435.7 194.1h.8M423.1 196.4h.8M428.6 198.0h.8M320.7 195.4h.8M378.5 196.0h.8M336.9 194.3h.8M455.8 193.4h.8M446.1 194.8h.8M440.6 192.3h.8M367.7 194.4h.8M360.8 196.0h.8M418.8 195.4h.8M405.6 194.6h.8M325.5 197.4h.8M346.5 197.5h.8M436.6 195.4h.8M398.4 194.8h.8M361.7 194.5h.8M359.9 197.2h.8M350.8 196.6h.8M428.0 195.7h.8M393.9 193.6h.8M424.7 193.3h.8M324.8 194.2h.8M421.6 195.1h.8M298.3 195.5h.8M392.0 195.3h.8M347.7 196.4h.8M315.7 193.3h.8M340.4 193.1h.8M455.8 196.5h.8M457.1 195.1h.8M395.4 195.5h.8M378.5 198.4h.8M340.5 191.9h.8M425.3 196.6h.8M312.8 193.7h.8M376.1 194.0h.8M401.3 194.1h.8M428.8 195.7h.8M409.1 196.7h.8M424.7 193.3h.8M375.5 198.0h.8M365.2 194.2h.8M319.5 194.2h.8M316.7 197.9h.8M358.4 196.6h.8M466.1 195.2h.8M469.9 194.6h.8M387.2 194.8h.8M412.5 194.4h.8M359.6 197.2h.8M315.8 193.8h.8M369.7 192.7h.8M406.8 192.9h.8M438.0 195.4h.8M339.7 193.0h.8M336.1 195.7h.8M429.5 195.5h.8M430.5 193.3h.8M365.8 195.9h.8M349.4 195.3h.8M456.3 197.8h.8M313.6 193.8h.8M327.1 195.6h.8M328.7 193.3h.8M402.1 195.4h.8M334.9 195.2h.8M388.8 193.1h.8M421.3 198.1h.8M331.1 191.5h.8M373.6 189.9h.8M462.8 194.8h.8M432.9 198.5h.8M352.2 198.3h.8M338.6 193.5h.8M377.2 194.0h.8M394.5 194.0h.8M394.4 190.4h.8M323.5 198.9h.8M402.6 196.3h.8M299.6 193.8h.8M354.0 196.6h.8M444.2 195.0h.8M309.1 195.0h.8M320.9 196.9h.8M450.7 196.8h.8M402.5 198.1h.8M349.8 196.8h.8M305.9 194.4h.8M384.8 192.9h.8M406.6 196.6h.8M405.6 197.8h.8M393.4 195.4h.8M310.6 195.6h.8M436.5 196.3h.8M368.6 192.2h.8M413.1 192.2h.8M327.2 192.8h.8M298.9 194.9h.8M433.7 198.0h.8M457.6 195.2h.8M444.3 193.1h.8M328.4 196.0h.8M470.1 193.7h.8M387.1 193.4h.8M369.0 195.3h.8M456.8 196.3h.8M323.2 196.3h.8M377.1 193.9h.8M433.1 194.9h.8M313.7 194.2h.8M396.5 193.9h.8M436.4 193.5h.8M305.3 196.9h.8M337.0 191.4h.8M425.2 196.5h.8M326.4 195.6h.8M436.4 193.8h.8M466.9 194.3h.8M374.6 193.6h.8M471.5 193.5h.8M370.4 195.2h.8M411.5 193.5h.8M284.8 195.1h.8M363.6 196.7h.8M441.6 195.0h.8M312.4 193.4h.8M381.9 194.6h.8M364.6 191.6h.8M415.6 193.2h.8M327.6 195.0h.8M399.3 197.3h.8M324.0 196.2h.8M418.1 195.1h.8M350.7 192.2h.8M328.4 196.5h.8M316.4 196.9h.8M393.7 196.8h.8M444.3 196.0h.8M330.0 193.7h.8M321.3 193.0h.8M306.3 193.1h.8M401.4 195.5h.8M349.7 193.1h.8M441.7 194.1h.8M372.7 193.3h.8M456.2 192.9h.8M365.7 193.1h.8M385.8 193.9h.8M465.9 194.4h.8M410.6 194.7h.8M373.9 194.0h.8M297.8 194.5h.8M333.2 192.0h.8M455.4 193.5h.8M374.8 194.4h.8M379.2 192.8h.8M304.0 197.1h.8M322.4 194.7h.8M297.6 196.0h.8M339.2 191.0h.8M391.3 194.3h.8M308.7 192.5h.8M377.2 191.9h.8M427.9 193.2h.8M436.9 194.3h.8M307.1 194.0h.8M403.7 195.6h.8M374.5 196.3h.8M451.9 194.4h.8M443.7 197.4h.8M423.3 191.9h.8M309.6 195.6h.8M351.5 195.7h.8M324.3 193.8h.8M358.7 197.6h.8M395.6 199.1h.8M370.9 195.1h.8M327.2 195.8h.8M381.0 195.6h.8M404.8 194.0h.8M436.9 196.3h.8M317.1 193.5h.8M471.6 193.0h.8M361.6 196.8h.8M416.7 198.2h.8M447.3 195.7h.8M367.5 195.0h.8M430.9 195.8h.8M406.2 196.1h.8M371.4 195.8h.8M410.2 192.7h.8M416.4 193.9h.8M360.4 195.0h.8M344.1 193.7h.8M410.8 196.0h.8M319.1 195.4h.8M453.6 196.0h.8M400.7 194.8h.8M449.2 193.7h.8M390.1 192.3h.8M343.6 193.4h.8M321.8 192.9h.8M402.1 192.1h.8M414.1 195.9h.8M435.5 198.4h.8M446.8 195.2h.8M320.4 194.8h.8M405.9 195.7h.8M420.8 193.1h.8M334.6 194.6h.8M380.6 196.6h.8M407.4 194.7h.8M396.7 199.7h.8M360.0 197.2h.8M339.5 195.7h.8M416.5 196.0h.8M397.0 196.6h.8M343.7 192.0h.8M435.2 194.8h.8M398.8 195.4h.8M408.1 197.9h.8M360.3 193.2h.8M463.0 194.9h.8M462.1 196.7h.8M315.5 194.5h.8M408.9 196.4h.8M303.1 193.6h.8M316.2 197.7h.8M334.4 195.6h.8M381.8 195.9h.8M421.6 193.2h.8M344.1 192.1h.8M325.4 195.6h.8M396.4 192.9h.8M437.0 192.8h.8M318.4 194.4h.8M437.7 193.5h.8M399.2 194.5h.8M319.5 193.5h.8M328.0 193.7h.8M401.8 194.9h.8M343.4 191.9h.8M436.8 195.1h.8M402.7 194.2h.8M401.8 196.1h.8M374.1 197.8h.8M419.8 195.5h.8M381.0 193.5h.8M466.4 194.6h.8M388.1 194.3h.8M403.9 196.3h.8M442.1 195.9h.8M380.3 193.3h.8M394.4 192.4h.8M388.7 192.3h.8M417.2 196.5h.8M294.9 196.6h.8M397.7 193.5h.8M289.0 196.7h.8M408.3 190.4h.8M281.9 194.8h.8M387.6 195.8h.8M451.7 195.1h.8M399.0 196.2h.8M429.1 191.8h.8M442.1 194.5h.8M395.1 196.2h.8M296.5 195.4h.8M451.2 192.8h.8M280.1 195.7h.8M445.0 197.0h.8M285.3 195.5h.8M348.6 194.6h.8M347.8 193.5h.8M341.3 197.8h.8M437.6 194.5h.8M288.8 194.9h.8M288.9 194.2h.8M434.0 195.8h.8M398.7 194.1h.8M353.2 192.5h.8M321.1 195.4h.8M285.8 194.5h.8M412.0 193.5h.8M348.7 197.8h.8M388.0 193.9h.8M414.4 194.0h.8M317.5 195.2h.8M469.4 194.0h.8M386.6 194.4h.8M359.8 192.9h.8M432.6 194.6h.8M390.4 195.0h.8M451.9 195.5h.8M383.5 194.3h.8M375.8 195.7h.8M369.9 196.2h.8M288.3 195.0h.8M442.2 193.8h.8M411.5 193.1h.8M285.6 195.6h.8M364.0 193.5h.8M470.7 194.2h.8M367.8 196.5h.8M406.0 191.4h.8M422.1 194.1h.8M394.3 195.3h.8M423.9 196.8h.8M305.1 194.8h.8M456.9 195.3h.8M285.2 195.1h.8M409.7 197.2h.8M291.8 194.7h.8M302.1 196.9h.8M461.8 195.0h.8M323.4 195.4h.8M369.0 194.3h.8M361.5 192.0h.8M456.1 195.3h.8M411.9 194.8h.8M427.9 197.0h.8M311.0 196.6h.8M376.5 193.3h.8M339.9 197.2h.8M362.9 192.6h.8M328.6 196.3h.8M318.1 196.5h.8M400.2 195.0h.8M363.6 193.2h.8M299.6 194.1h.8M344.6 196.5h.8M372.8 198.9h.8M436.6 194.3h.8M340.4 194.4h.8M406.0 195.3h.8M316.8 194.1h.8M289.0 193.7h.8M307.7 195.1h.8M426.7 193.3h.8M361.7 196.6h.8M446.1 195.5h.8M442.3 193.0h.8M432.6 193.5h.8M403.7 194.8h.8M432.5 192.1h.8M313.6 194.5h.8M311.5 194.4h.8M364.7 196.1h.8M432.3 195.8h.8M462.9 194.1h.8M309.6 194.0h.8M378.8 193.0h.8M377.6 196.0h.8M361.6 193.1h.8M449.0 193.8h.8M304.8 194.8h.8M386.4 198.5h.8M469.6 196.4h.8M383.1 196.4h.8M366.1 195.6h.8M420.8 195.0h.8M331.6 192.2h.8M400.6 197.4h.8M286.0 195.7h.8M459.6 195.3h.8M417.9 195.5h.8M383.4 197.2h.8M392.6 195.9h.8M438.1 197.0h.8M336.6 198.0h.8M381.3 195.5h.8M409.1 198.1h.8M367.2 196.2h.8M367.8 195.8h.8M352.2 194.1h.8M461.8 194.1h.8M420.4 193.5h.8M365.4 193.9h.8M321.4 193.1h.8M296.4 196.1h.8M408.5 199.0h.8M294.9 195.0h.8M445.4 195.1h.8M428.7 193.8h.8M391.8 193.3h.8M300.6 192.6h.8M305.6 194.5h.8M283.5 195.2h.8M285.1 194.7h.8M384.2 195.2h.8M409.4 193.5h.8M384.9 195.1h.8M382.2 195.6h.8M369.7 195.2h.8M418.2 194.8h.8M404.8 194.0h.8M316.6 195.0h.8M394.5 194.2h.8M440.4 196.2h.8M445.2 195.9h.8M307.2 194.1h.8M437.5 194.3h.8M438.8 195.4h.8M317.3 194.2h.8M448.0 194.2h.8M457.7 195.5h.8M357.6 198.7h.8M325.9 195.9h.8M430.6 194.8h.8M362.7 196.0h.8M375.2 197.3h.8M378.1 193.5h.8M443.5 196.7h.8M360.1 196.1h.8M414.8 195.1h.8M370.9 192.2h.8M372.9 195.6h.8M354.5 196.2h.8M393.4 193.1h.8M357.1 192.8h.8M383.5 196.3h.8M348.6 193.2h.8M407.2 193.5h.8M296.4 194.0h.8M359.4 194.8h.8M396.8 194.7h.8M355.3 194.1h.8M420.4 195.2h.8M287.9 196.3h.8M445.6 199.4h.8M422.3 197.6h.8M428.6 192.7h.8M333.7 196.7h.8M291.3 194.5h.8M374.8 197.6h.8M406.3 197.7h.8M306.2 196.1h.8M350.8 198.7h.8M403.4 192.5h.8M435.6 196.6h.8M457.8 193.5h.8M437.2 193.7h.8M351.3 195.9h.8M415.4 192.9h.8M439.8 197.6h.8M378.1 196.9h.8M464.8 194.8h.8M469.3 195.4h.8M281.1 193.8h.8M331.5 196.3h.8M425.0 195.2h.8M309.3 195.5h.8M455.5 197.0h.8M343.0 192.8h.8M440.7 195.2h.8M375.9 193.4h.8M378.0 195.8h.8M444.9 192.1h.8M373.1 194.9h.8M411.6 195.9h.8M377.8 194.4h.8M383.3 197.2h.8M328.5 193.3h.8M314.1 194.8h.8M285.5 194.3h.8M432.1 198.2h.8M376.6 197.8h.8M362.7 195.7h.8M399.5 197.0h.8M334.5 196.9h.8M408.2 194.3h.8M468.5 195.2h.8M372.5 194.3h.8M452.3 194.5h.8M342.9 198.4h.8M378.1 196.0h.8M337.7 194.4h.8M452.8 197.2h.8M326.2 198.0h.8M405.6 193.4h.8M355.5 194.1h.8M456.9 195.1h.8M397.2 193.5h.8M420.2 195.0h.8M379.5 194.9h.8M421.7 192.5h.8M355.6 194.9h.8M299.4 194.9h.8M290.0 195.6h.8M310.7 197.1h.8M453.3 196.3h.8M348.0 192.2h.8M417.9 195.1h.8M335.8 195.7h.8M380.0 194.0h.8M433.0 195.5h.8M349.8 196.8h.8M423.8 196.9h.8M344.6 194.1h.8M390.5 198.4h.8M337.8 198.8h.8M375.5 197.2h.8M338.0 195.5h.8M372.3 195.3h.8M401.0 194.1h.8M430.4 196.1h.8M439.5 191.3h.8M392.7 195.4h.8M376.1 196.8h.8M364.9 194.9h.8M282.6 194.5h.8M379.7 193.9h.8M368.1 194.5h.8M390.5 195.3h.8M392.2 194.5h.8M430.3 195.8h.8M434.9 192.9h.8M421.2 196.6h.8M405.6 193.7h.8M448.9 195.8h.8M370.1 194.7h.8M325.4 196.3h.8M471.1 195.6h.8M386.4 199.3h.8M419.7 195.0h.8M429.9 194.5h.8M288.9 194.0h.8M317.6 193.0h.8M295.7 194.4h.8M344.1 196.7h.8M316.0 193.8h.8M449.9 194.0h.8M418.5 191.3h.8M464.1 192.8h.8M357.0 194.3h.8M388.7 197.8h.8M400.8 192.8h.8M361.4 195.6h.8M408.8 195.4h.8M436.7 197.9h.8M401.1 192.9h.8M417.0 194.1h.8M404.2 196.8h.8M281.7 195.5h.8M444.2 194.3h.8M327.8 195.1h.8M424.4 195.9h.8M371.8 194.7h.8M459.7 195.9h.8M397.5 197.6h.8M388.2 197.1h.8M461.8 195.5h.8M450.1 194.8h.8M364.4 197.3h.8M294.1 195.5h.8M434.0 198.9h.8M377.6 195.3h.8M293.8 192.6h.8M471.9 195.6h.8M456.6 193.5h.8M286.5 195.1h.8M351.3 195.0h.8M348.8 192.6h.8M396.3 193.1h.8M281.2 195.9h.8M298.5 194.3h.8M391.2 191.2h.8M322.0 193.0h.8M415.2 197.8h.8M394.1 195.1h.8M458.2 195.2h.8M298.8 194.7h.8M426.6 196.0h.8M363.9 197.2h.8M422.6 194.6h.8M395.0 197.1h.8M427.4 193.3h.8M422.3 198.4h.8M372.8 193.0h.8M345.7 194.3h.8M427.7 193.3h.8M416.5 193.2h.8M413.8 193.6h.8M343.0 196.7h.8M472.0 195.1h.8M391.0 198.2h.8M312.3 197.1h.8M457.6 194.4h.8M379.1 193.6h.8M408.6 194.0h.8M399.7 195.5h.8M396.6 194.1h.8M346.0 196.3h.8M328.2 193.6h.8M413.3 196.2h.8M424.5 196.1h.8M386.4 195.6h.8M408.6 195.4h.8M310.8 192.6h.8M393.9 195.0h.8M392.7 195.8h.8M343.0 196.0h.8M440.3 194.5h.8M339.9 196.5h.8M420.6 193.6h.8M431.0 196.3h.8M324.8 192.1h.8M442.8 196.7h.8M416.8 193.9h.8M352.4 194.0h.8M428.6 199.0h.8M386.7 194.0h.8M423.2 195.7h.8M439.7 195.6h.8M293.4 194.0h.8M410.5 192.2h.8M400.1 195.9h.8M377.4 194.3h.8M339.6 197.4h.8M333.1 194.1h.8M400.2 197.8h.8M366.2 193.6h.8M390.6 197.6h.8M283.0 195.3h.8M391.0 195.5h.8M346.0 197.3h.8M341.7 193.5h.8M312.0 194.1h.8M371.7 194.3h.8M404.5 197.3h.8M336.7 195.6h.8M462.5 195.6h.8M326.3 197.6h.8M381.5 199.9h.8M388.7 195.2h.8M360.4 196.9h.8M346.9 192.1h.8M468.6 196.0h.8M381.1 195.7h.8M413.8 194.1h.8M369.5 198.6h.8M399.2 194.5h.8M413.1 193.2h.8M470.5 195.1h.8M281.5 195.1h.8M416.2 195.0h.8M349.5 197.6h.8M379.5 193.6h.8M318.5 193.1h.8M319.5 194.8h.8M389.9 197.2h.8M399.1 196.5h.8M314.0 194.6h.8M419.3 193.7h.8M429.5 195.7h.8M362.7 196.5h.8M334.2 194.1h.8M301.8 196.1h.8M337.9 195.8h.8M295.6 195.3h.8M372.9 194.5h.8M414.0 194.5h.8M374.1 195.2h.8M358.4 192.9h.8M442.6 193.0h.8M458.6 194.6h.8M454.2 194.9h.8M375.9 197.5h.8M464.4 195.1h.8M320.0 194.9h.8M458.8 197.6h.8M286.2 195.8h.8M370.7 194.6h.8M399.0 190.8h.8M421.4 195.1h.8M361.9 190.5h.8M316.2 196.1h.8M358.6 193.8h.8M430.6 194.3h.8M470.7 196.3h.8M452.7 196.2h.8M327.2 194.9h.8M423.1 196.1h.8M394.1 193.8h.8M405.3 197.7h.8M395.4 194.7h.8M371.5 194.6h.8M332.8 196.7h.8M461.2 194.3h.8M454.9 193.5h.8M392.8 193.5h.8M376.2 193.8h.8M452.0 194.1h.8M315.9 194.9h.8M356.5 195.8h.8M307.4 195.3h.8M290.1 195.3h.8M382.7 195.2h.8M355.9 195.0h.8M448.3 195.0h.8M443.9 193.4h.8M284.8 195.9h.8M356.2 196.6h.8M423.0 192.1h.8M434.8 195.2h.8M350.8 198.5h.8M430.2 196.1h.8M350.3 196.6h.8M348.9 198.8h.8M282.3 195.0h.8M282.8 195.7h.8M380.4 197.3h.8M357.6 196.4h.8M461.1 195.8h.8M386.2 199.0h.8M355.1 193.8h.8M360.0 193.0h.8M379.7 193.9h.8M408.3 196.2h.8M318.8 195.9h.8M348.8 194.7h.8M418.4 193.2h.8M375.1 198.3h.8M357.7 195.6h.8M403.9 195.9h.8M372.2 193.7h.8M295.8 193.9h.8M338.8 193.9h.8M401.3 195.4h.8M348.2 191.6h.8M377.5 194.7h.8M407.8 194.8h.8M378.0 199.5h.8M410.2 193.4h.8M348.1 196.4h.8M333.3 193.5h.8M374.4 190.8h.8M383.2 192.0h.8M342.3 194.5h.8M426.0 195.5h.8M429.3 196.4h.8M454.8 196.0h.8M317.7 195.8h.8M399.8 194.8h.8M400.3 191.2h.8M448.6 191.6h.8M375.3 191.4h.8M305.6 193.7h.8M381.2 197.3h.8M378.8 197.0h.8M315.8 196.1h.8M294.8 195.2h.8M428.6 196.1h.8M430.4 197.4h.8M344.8 193.2h.8M308.9 194.9h.8M443.4 195.9h.8M452.1 194.3h.8M335.4 194.4h.8M418.1 195.2h.8M390.5 196.4h.8M357.5 194.3h.8M359.4 196.7h.8M410.5 194.9h.8M297.1 194.8h.8M378.4 194.3h.8M314.7 195.6h.8M406.8 196.3h.8M325.4 196.7h.8M375.4 194.1h.8M338.4 196.5h.8M400.7 195.7h.8M356.5 197.4h.8M337.9 194.3h.8M442.9 194.9h.8M365.2 198.8h.8M414.4 194.0h.8M465.3 195.6h.8M433.4 194.7h.8M362.9 196.8h.8M326.9 193.2h.8M382.9 192.9h.8M373.8 198.3h.8M374.1 193.9h.8M353.7 193.0h.8M352.6 192.3h.8M380.4 195.8h.8M281.8 196.2h.8M386.5 193.0h.8M348.0 190.6h.8M358.3 194.7h.8M405.2 197.1h.8M421.1 196.5h.8M378.1 193.6h.8M430.4 194.7h.8M331.5 194.8h.8M376.8 194.2h.8M364.0 192.9h.8M407.5 195.2h.8M433.8 193.8h.8M403.4 191.6h.8M393.1 195.7h.8M369.4 199.0h.8M424.6 196.2h.8M378.8 197.6h.8M300.8 195.1h.8M306.8 194.2h.8M343.8 193.8h.8M326.6 194.2h.8M368.9 195.7h.8M360.6 194.3h.8M419.4 196.8h.8M343.0 193.1h.8M332.6 196.4h.8M445.7 196.8h.8M301.5 194.9h.8M311.9 194.7h.8M425.8 195.0h.8M370.8 194.8h.8M404.5 193.2h.8M361.8 198.5h.8M332.7 193.2h.8M395.7 195.2h.8M308.9 195.5h.8M291.5 194.8h.8M449.1 195.6h.8M347.0 194.2h.8M447.5 195.0h.8M376.9 194.8h.8M425.9 192.5h.8M346.7 191.3h.8M430.2 195.2h.8M315.5 194.5h.8M354.7 195.3h.8M334.2 195.3h.8M417.6 195.7h.8M444.2 194.5h.8M441.8 196.4h.8M293.2 195.4h.8M316.1 193.4h.8M357.6 193.6h.8M469.4 194.9h.8M280.5 194.6h.8M358.8 195.3h.8M325.8 192.7h.8M377.3 194.2h.8M394.4 194.7h.8M403.6 195.2h.8M452.8 196.1h.8M347.2 192.8h.8M431.1 198.1h.8M409.2 193.6h.8M363.2 193.2h.8M406.2 195.7h.8M414.2 195.7h.8M318.0 195.5h.8M391.1 193.9h.8M408.2 193.7h.8M398.8 192.7h.8M442.5 194.3h.8M466.4 193.8h.8M387.6 193.7h.8M380.9 193.3h.8M342.5 196.1h.8M291.7 194.5h.8M472.9 193.8h.8M367.7 191.7h.8M281.1 194.9h.8M367.8 191.5h.8M392.1 191.8h.8M456.5 195.0h.8M394.1 194.1h.8M332.5 191.1h.8M318.2 194.4h.8M409.4 191.0h.8M381.2 197.2h.8M374.2 194.4h.8M364.3 192.7h.8M437.4 194.5h.8M411.7 193.3h.8M365.1 195.9h.8M414.5 194.8h.8M413.5 195.8h.8M281.1 196.3h.8M405.6 195.7h.8M395.4 194.6h.8M408.2 192.8h.8M457.4 194.8h.8M385.3 197.7h.8M425.9 193.8h.8M324.6 196.7h.8M357.5 193.0h.8M434.2 193.9h.8M473.5 194.3h.8M533.5 195.7h.8M479.9 195.4h.8M487.8 194.2h.8M532.6 195.0h.8M497.4 194.9h.8M540.1 195.3h.8M500.7 194.6h.8M524.7 196.0h.8M480.7 195.5h.8M542.3 195.6h.8M504.6 195.5h.8M489.4 194.5h.8M500.9 195.4h.8M525.5 194.9h.8M511.1 194.6h.8M478.6 195.6h.8M531.8 194.8h.8M540.0 194.3h.8M510.3 193.8h.8M481.8 195.4h.8M504.8 194.8h.8M526.4 193.6h.8M530.1 194.7h.8M489.9 195.0h.8M493.8 194.0h.8M499.2 195.5h.8M491.6 194.5h.8M493.2 194.9h.8M527.9 195.5h.8M541.3 195.6h.8M486.8 196.0h.8M538.4 195.3h.8M538.7 195.2h.8M527.8 194.5h.8M479.7 196.5h.8M498.4 194.6h.8M485.1 195.6h.8M542.4 195.0h.8M496.6 195.0h.8M498.9 194.0h.8M527.9 194.6h.8M509.1 195.1h.8M473.5 195.5h.8M530.4 194.7h.8M537.1 194.7h.8M535.6 195.0h.8M524.8 195.3h.8M511.4 194.5h.8M542.7 195.4h.8M530.0 195.0h.8M493.1 195.1h.8M499.9 194.1h.8M479.3 194.6h.8M523.4 193.9h.8M498.0 195.3h.8M525.1 194.6h.8M477.5 194.6h.8M493.0 194.8h.8M526.6 195.9h.8M476.5 193.6h.8M494.2 194.2h.8M536.4 194.5h.8M516.4 195.3h.8M485.6 195.8h.8M485.2 194.6h.8M521.9 193.9h.8M492.6 195.8h.8M495.7 194.1h.8M488.0 195.1h.8M538.6 195.0h.8M479.7 195.5h.8M490.0 195.0h.8M521.4 195.3h.8M521.7 194.9h.8M500.9 194.9h.8M519.8 194.7h.8M485.4 194.6h.8M504.3 195.3h.8M514.5 194.6h.8M503.1 193.8h.8M516.3 194.6h.8M491.4 195.6h.8M542.8 195.5h.8M537.5 195.6h.8M501.6 194.0h.8M476.8 195.5h.8M497.4 195.4h.8M485.7 195.4h.8M513.7 195.4h.8M507.7 195.3h.8M542.8 195.3h.8M476.6 194.6h.8M530.6 195.7h.8M542.4 194.2h.8M480.7 195.2h.8M519.8 195.1h.8M539.1 195.1h.8M498.6 196.2h.8M532.9 195.0h.8M499.8 195.6h.8M491.7 195.1h.8M513.9 194.6h.8M488.1 194.9h.8M521.4 194.6h.8M530.6 195.5h.8M537.1 194.0h.8M503.6 195.0h.8M515.3 194.2h.8M517.8 195.0h.8M498.4 195.1h.8M497.4 193.6h.8M525.0 195.0h.8M523.8 194.7h.8M505.9 195.0h.8M518.5 195.3h.8M489.2 195.6h.8M476.1 194.0h.8M478.8 194.7h.8M539.7 193.8h.8M499.6 194.5h.8M476.0 193.0h.8M476.5 194.2h.8M492.1 193.9h.8M502.2 194.2h.8M481.0 195.2h.8M524.5 196.0h.8M484.6 194.8h.8M540.9 194.9h.8M505.0 195.1h.8M507.8 194.6h.8M523.4 193.8h.8M474.3 195.6h.8M491.2 195.2h.8M511.0 194.0h.8M518.5 194.3h.8M529.7 194.1h.8M535.2 195.1h.8M513.2 195.7h.8M486.9 195.0h.8M532.8 195.1h.8M537.5 194.2h.8M535.9 195.6h.8M477.1 195.3h.8M518.6 195.5h.8M477.9 194.4h.8M475.3 194.2h.8M528.1 194.2h.8M511.3 196.0h.8M492.0 193.8h.8M518.6 195.3h.8M494.6 194.6h.8M474.5 194.5h.8M505.4 195.5h.8M511.8 195.2h.8M495.7 195.2h.8M528.9 195.1h.8M483.4 194.8h.8M539.1 195.2h.8M488.7 195.7h.8M538.8 194.3h.8M525.7 195.9h.8M523.8 193.6h.8M487.8 194.6h.8M527.5 195.4h.8M532.5 194.8h.8M490.5 195.8h.8M511.4 195.0h.8M508.8 196.4h.8M509.2 194.5h.8M446.2 176.5h.8M333.7 176.2h.8M322.6 175.3h.8M326.2 175.3h.8M393.5 173.3h.8M325.9 176.8h.8M449.7 175.4h.8M356.2 176.8h.8M381.3 176.4h.8M369.6 176.6h.8M359.2 175.6h.8M331.8 175.6h.8M351.3 174.3h.8M336.4 176.0h.8M406.8 174.0h.8M396.6 176.0h.8M446.6 173.8h.8M441.1 174.6h.8M406.9 177.1h.8M408.8 173.6h.8M449.9 176.2h.8M326.7 175.0h.8M405.1 174.9h.8M387.3 176.1h.8M437.5 173.7h.8M381.2 174.5h.8M323.5 172.7h.8M364.5 175.0h.8M418.1 174.9h.8M371.5 176.5h.8M342.3 174.9h.8M321.6 173.7h.8M431.3 175.7h.8M355.0 175.6h.8M359.2 174.3h.8M451.6 175.5h.8M396.8 175.1h.8M357.4 175.9h.8M378.0 175.4h.8M353.6 174.5h.8M331.8 176.8h.8M345.1 175.1h.8M444.5 176.5h.8M370.8 174.1h.8M350.6 175.4h.8M412.1 176.3h.8M390.3 174.6h.8M356.1 176.0h.8M452.7 176.1h.8M447.8 176.7h.8M405.9 175.4h.8M383.1 176.9h.8M353.0 174.2h.8M356.8 177.2h.8M374.0 173.5h.8M411.4 172.3h.8M371.2 176.7h.8M361.7 173.3h.8M425.6 174.5h.8M336.4 172.7h.8M413.8 176.1h.8M420.1 175.8h.8M398.2 173.7h.8M356.1 175.2h.8M362.9 173.8h.8M362.8 174.2h.8M455.9 175.3h.8M413.9 175.1h.8M345.4 174.3h.8M365.3 173.9h.8M393.2 174.6h.8M409.9 174.4h.8M442.9 175.6h.8M385.4 175.2h.8M381.7 174.8h.8M370.0 175.7h.8M376.6 174.6h.8M342.1 175.9h.8M419.0 177.0h.8M364.3 175.3h.8M389.2 176.8h.8M444.9 174.3h.8M375.6 177.3h.8M323.3 175.0h.8M377.8 172.9h.8M364.2 177.3h.8M398.9 174.4h.8M327.3 175.0h.8M319.9 173.6h.8M447.7 173.6h.8M445.2 178.3h.8M379.7 174.8h.8M331.7 175.6h.8M383.1 174.7h.8M422.6 173.3h.8M452.8 176.7h.8M441.9 174.7h.8M322.1 174.4h.8M387.7 174.9h.8M340.0 175.2h.8M409.9 175.3h.8M429.1 174.9h.8M406.4 174.0h.8M418.7 176.8h.8M404.9 175.1h.8M362.5 172.2h.8M453.2 174.1h.8M336.5 174.4h.8M364.1 174.0h.8M370.3 174.6h.8M324.6 175.9h.8M408.9 173.1h.8M383.6 175.8h.8M439.7 176.2h.8M396.6 174.2h.8M416.9 175.2h.8M344.0 175.0h.8M440.1 174.6h.8M339.4 173.7h.8M333.7 174.7h.8M443.1 174.3h.8M443.8 173.2h.8M381.5 176.7h.8M374.9 176.1h.8M437.9 178.0h.8M383.3 177.0h.8M400.5 173.0h.8M440.6 176.0h.8M441.0 173.5h.8M331.7 174.6h.8M344.4 173.5h.8M398.8 176.5h.8M409.1 175.8h.8M343.9 174.7h.8M352.6 174.3h.8M395.1 175.1h.8M422.7 175.2h.8M372.5 176.3h.8M373.0 178.4h.8M396.7 172.0h.8M339.8 176.9h.8M344.5 175.2h.8M366.3 173.1h.8M403.7 175.2h.8M389.2 174.8h.8M381.0 175.6h.8M400.7 175.8h.8M327.1 174.0h.8M447.8 174.9h.8M406.7 174.3h.8M424.3 177.1h.8M438.5 174.7h.8M357.5 173.6h.8M380.7 173.3h.8M447.1 174.9h.8M379.8 175.1h.8M370.5 176.4h.8M365.6 173.4h.8M362.8 176.5h.8M320.2 175.1h.8M405.8 176.0h.8M389.3 177.1h.8M325.5 175.7h.8M347.5 174.4h.8M341.5 173.1h.8M396.1 175.0h.8M447.5 176.0h.8M370.3 174.2h.8M438.0 175.2h.8M420.3 175.9h.8M370.9 175.2h.8M329.0 174.2h.8M334.6 176.1h.8M334.3 176.1h.8M406.7 174.0h.8M326.2 174.7h.8M437.5 175.6h.8M410.0 173.5h.8M343.1 173.9h.8M419.5 173.2h.8M322.9 176.1h.8M418.7 173.7h.8M356.8 174.8h.8M339.3 173.6h.8M435.1 172.7h.8M320.3 174.2h.8M363.8 175.0h.8M374.3 175.9h.8M412.7 175.0h.8M425.7 173.8h.8M427.7 172.9h.8M406.5 173.8h.8M414.8 176.1h.8M363.9 175.6h.8M393.2 174.9h.8M414.6 175.2h.8M429.9 175.6h.8M429.2 175.5h.8M371.2 176.3h.8M408.9 174.9h.8M544.1 175.5h.8M513.3 174.6h.8M497.0 177.7h.8M487.4 176.9h.8M528.3 177.1h.8M489.5 176.2h.8M535.4 178.3h.8M539.6 176.8h.8M523.0 175.4h.8M520.9 178.3h.8M493.9 176.0h.8M488.3 177.8h.8M493.7 179.4h.8M496.0 176.6h.8M516.9 176.4h.8M491.1 176.9h.8M506.6 176.3h.8M538.3 177.6h.8M532.9 176.1h.8M498.5 177.5h.8M495.6 176.4h.8M515.4 175.4h.8M496.4 176.5h.8M497.3 177.1h.8M496.6 177.6h.8M516.3 175.4h.8M533.9 177.9h.8M513.8 177.1h.8M529.6 178.1h.8M493.9 176.7h.8M534.8 177.8h.8M537.2 176.8h.8M491.7 175.2h.8M540.8 175.8h.8M519.5 176.2h.8M541.4 176.9h.8M503.8 177.5h.8M535.6 176.2h.8M497.8 176.9h.8M523.1 177.7h.8M500.9 175.5h.8M536.9 177.2h.8M507.3 176.9h.8M529.3 175.7h.8M534.7 177.3h.8M523.9 176.8h.8M507.3 176.9h.8M513.3 178.3h.8M541.2 177.2h.8M516.6 176.4h.8M536.4 177.9h.8M538.5 177.9h.8M526.5 177.7h.8M511.6 177.1h.8M490.6 176.7h.8M518.9 179.5h.8M533.5 177.7h.8M519.1 175.8h.8M514.1 176.0h.8M503.3 178.1h.8M509.8 177.7h.8M515.1 175.8h.8M493.3 176.4h.8M529.2 177.4h.8M505.6 176.9h.8M538.6 177.3h.8M530.9 177.2h.8M509.7 175.9h.8M488.3 176.9h.8M519.2 179.0h.8M493.3 176.1h.8M522.1 176.0h.8M503.2 177.2h.8M522.9 174.5h.8M526.4 175.9h.8M536.0 177.6h.8M498.5 178.2h.8M543.7 175.9h.8M537.0 177.3h.8M528.2 177.2h.8M296.0 172.9h.8M304.2 169.7h.8M295.4 174.0h.8M302.8 170.5h.8M303.3 169.4h.8M297.2 172.4h.8M291.7 175.1h.8M299.4 171.9h.8M299.6 171.3h.8M301.3 170.7h.8M298.9 171.9h.8M304.4 169.4h.8M292.8 175.1h.8M295.9 172.8h.8M293.3 174.6h.8M291.8 174.1h.8M296.2 172.8h.8M304.1 170.7h.8M291.7 175.0h.8M291.8 175.3h.8M300.9 171.3h.8M296.7 172.4h.8M292.1 174.8h.8M302.7 170.9h.8M291.9 174.5h.8M292.7 173.7h.8M300.6 170.9h.8M301.2 170.9h.8M297.9 172.0h.8M297.9 172.5h.8M303.7 170.3h.8M299.0 171.6h.8M300.0 170.8h.8M293.4 174.2h.8M298.9 171.4h.8M300.2 171.5h.8M304.4 169.9h.8M297.3 172.6h.8M304.3 170.4h.8M294.5 173.9h.8M304.3 169.5h.8M297.5 172.7h.8M292.8 174.1h.8M304.1 169.4h.8M298.2 172.7h.8M251.9 190.8h.8M250.5 190.5h.8M244.0 193.5h.8M246.2 192.9h.8M257.0 188.8h.8M244.7 193.7h.8M255.0 189.8h.8M254.4 189.1h.8M257.7 188.8h.8M254.4 189.6h.8M243.3 193.7h.8M250.0 191.4h.8M242.8 194.7h.8M255.1 189.0h.8M246.7 192.4h.8M243.7 193.8h.8M242.5 194.6h.8M246.7 192.7h.8M251.4 190.5h.8M247.4 191.9h.8M250.4 191.2h.8M249.7 191.3h.8M243.1 193.9h.8M250.6 190.6h.8M251.6 190.6h.8M254.9 189.2h.8M255.3 189.1h.8M250.6 190.7h.8M246.4 192.1h.8M248.2 192.5h.8M248.5 192.1h.8M257.7 188.1h.8M256.4 188.4h.8M253.5 190.0h.8M243.3 194.6h.8M243.0 194.3h.8M247.5 192.4h.8M244.4 192.7h.8M254.1 190.1h.8M257.7 187.9h.8M208.7 208.2h.8M210.4 206.8h.8M205.6 209.6h.8M206.9 208.2h.8M213.6 205.6h.8M206.7 208.7h.8M204.9 209.4h.8M204.4 208.8h.8M207.5 207.2h.8M214.0 205.1h.8M203.3 209.0h.8M203.6 208.7h.8M212.0 206.5h.8M210.8 207.2h.8M205.5 208.9h.8M207.1 208.3h.8M206.5 208.6h.8M205.8 208.6h.8M204.6 208.6h.8M207.5 207.6h.8M210.1 207.2h.8M208.2 207.4h.8M202.8 209.6h.8M202.8 209.7h.8M206.3 208.0h.8M212.6 206.1h.8M203.1 210.0h.8M205.9 209.1h.8M209.7 207.2h.8M202.7 209.5h.8M210.1 207.3h.8M210.5 206.9h.8M211.7 205.9h.8M209.3 207.0h.8M207.8 208.0h.8M481.6 174.0h.8M481.2 174.3h.8M480.1 174.2h.8M474.7 175.4h.8M474.3 175.3h.8M484.8 172.8h.8M473.6 174.9h.8M483.5 174.6h.8M474.8 176.0h.8M482.4 173.4h.8M485.1 173.0h.8M473.0 176.0h.8M472.7 176.3h.8M486.1 172.8h.8M475.8 175.3h.8M486.0 173.4h.8M475.4 175.6h.8M476.8 175.1h.8M475.8 174.9h.8M477.1 175.2h.8M472.7 176.3h.8M485.4 172.1h.8M481.7 174.0h.8M474.9 174.5h.8M473.4 175.4h.8M483.3 173.9h.8M474.6 175.5h.8M481.5 174.4h.8M479.7 175.2h.8M485.0 172.6h.8M483.5 172.8h.8M475.7 175.1h.8M482.9 173.3h.8M473.7 175.1h.8M486.4 172.7h.8M176.2 268.2h.8M542.3 233.4h.8M477.7 221.4h.8M188.2 270.3h.8M207.9 226.4h.8M226.2 272.2h.8M341.2 249.5h.8M428.6 228.2h.8M391.8 265.3h.8M462.2 238.7h.8M519.8 261.5h.8M382.7 235.1h.8M213.8 235.8h.8M268.2 249.2h.8M385.5 240.4h.8M331.1 223.0h.8M530.7 268.8h.8M544.9 251.6h.8M248.6 217.7h.8M547.6 257.4h.8M546.1 244.5h.8M331.3 233.9h.8M395.5 253.4h.8M361.9 236.6h.8M177.2 227.5h.8M242.7 240.3h.8M302.2 239.2h.8M446.2 210.2h.8M531.4 234.7h.8M542.9 250.9h.8M175.9 230.8h.8M243.6 269.7h.8M421.5 222.4h.8M422.3 254.0h.8M359.8 221.2h.8M372.8 210.2h.8M542.7 230.5h.8M363.0 266.4h.8M320.4 229.7h.8M239.5 240.9h.8M391.1 234.6h.8M249.7 220.9h.8M381.3 255.2h.8M264.3 219.8h.8M468.3 262.0h.8M404.1 237.6h.8M214.3 265.3h.8M266.3 248.9h.8M497.2 220.3h.8M522.4 243.0h.8M243.3 247.0h.8M213.1 241.0h.8M208.9 257.6h.8M400.7 255.0h.8M317.9 246.1h.8M268.4 245.3h.8M482.3 243.9h.8M206.2 213.5h.8M197.0 231.4h.8M332.9 266.8h.8M405.0 272.2h.8M382.8 216.2h.8M511.1 229.1h.8M490.9 222.5h.8M377.3 215.6h.8M455.1 267.7h.8M486.7 266.8h.8M279.2 270.8h.8M499.6 246.6h.8M291.9 272.1h.8M533.1 211.4h.8M191.1 215.6h.8M177.8 227.9h.8M528.2 239.1h.8M500.8 253.7h.8M296.5 219.9h.8M353.7 248.5h.8M497.9 228.6h.8M296.9 231.0h.8M301.8 260.7h.8M218.8 234.6h.8M417.5 214.6h.8M508.4 242.6h.8M197.0 224.2h.8M431.4 223.6h.8M296.5 247.4h.8M265.6 222.5h.8M218.3 231.5h.8M345.8 270.3h.8M176.3 258.5h.8M341.0 199.2h.8M337.2 178.3h.8M377.5 186.5h.8M305.4 208.2h.8M517.5 176.9h.8M410.7 207.9h.8M327.8 193.8h.8M350.1 194.4h.8M276.6 193.1h.8M439.9 199.1h.8M419.6 180.1h.8M413.3 170.9h.8M357.9 193.4h.8M461.1 185.3h.8M421.0 206.2h.8M415.8 170.0h.8M291.7 203.0h.8M451.4 184.9h.8M444.2 199.5h.8M494.9 176.4h.8M545.3 186.2h.8M312.0 206.6h.8M460.8 176.6h.8M324.7 181.3h.8M498.7 203.6h.8M450.2 195.7h.8M394.7 177.7h.8M452.6 203.4h.8M472.2 194.8h.8M439.8 190.7h.8M304.9 191.2h.8M469.2 170.0h.8M356.9 192.6h.8M534.8 194.0h.8M496.5 207.4h.8M304.3 207.7h.8M293.9 182.1h.8M303.8 198.1h.8M478.2 171.0h.8M369.2 207.5h.8M186.2 268.4h.8M186.2 267.7h.8M186.2 266.9h.8M186.2 266.2h.8M186.2 265.4h.8M186.2 264.7h.8M187.9 268.4h.8M187.9 267.7h.8M187.9 266.9h.8M187.9 266.2h.8M187.9 265.4h.8M187.9 264.7h.8M210.1 268.4h.8M210.1 267.7h.8M210.1 266.9h.8M210.1 266.2h.8M210.1 265.4h.8M210.1 264.7h.8M211.8 268.4h.8M211.8 267.7h.8M211.8 266.9h.8M211.8 266.2h.8M211.8 265.4h.8M211.8 264.7h.8M251.0 268.4h.8M251.0 267.7h.8M251.0 266.9h.8M251.0 266.2h.8M251.0 265.4h.8M251.0 264.7h.8M264.7 268.4h.8M264.7 267.7h.8M264.7 266.9h.8M264.7 266.2h.8M264.7 265.4h.8M264.7 264.7h.8M266.4 268.4h.8M266.4 267.7h.8M266.4 266.9h.8M266.4 266.2h.8M266.4 265.4h.8M266.4 264.7h.8" stroke="#00d000" stroke-width="0.8" fill="none"/><path d="M417.7 265.7h.8M405.6 267.3h.8M391.9 267.5h.8M394.0 266.8h.8M411.7 267.0h.8M420.9 266.4h.8M420.6 266.7h.8M382.8 265.9h.8M389.5 265.9h.8M380.4 267.2h.8M399.9 267.1h.8M398.5 267.4h.8M410.0 267.4h.8M409.1 266.2h.8M405.5 267.2h.8M376.7 265.9h.8M407.8 266.2h.8M383.4 266.0h.8M397.4 266.7h.8M396.2 266.2h.8M384.3 266.7h.8M405.2 267.0h.8M377.8 266.1h.8M420.7 267.4h.8M384.0 266.3h.8M421.7 265.8h.8M374.2 265.9h.8M399.6 267.3h.8M394.6 265.1h.8M416.4 266.1h.8M424.5 266.5h.8M390.8 266.1h.8M390.4 266.5h.8M399.4 267.0h.8M396.5 266.2h.8M396.2 266.3h.8M402.1 265.8h.8M401.9 266.6h.8M382.2 267.3h.8M422.1 266.2h.8M393.4 266.2h.8M393.1 266.3h.8M387.1 265.3h.8M400.5 266.9h.8M394.1 266.8h.8M377.8 267.6h.8M417.2 266.9h.8M421.9 266.0h.8M407.0 266.1h.8M391.0 265.8h.8M418.1 266.8h.8M374.2 267.4h.8M416.3 265.9h.8M397.6 265.9h.8M393.1 267.5h.8M409.3 266.9h.8M419.7 266.6h.8M416.7 266.2h.8M413.0 266.9h.8M372.7 267.1h.8M302.5 266.9h.8M298.3 267.4h.8M311.1 267.1h.8M307.7 267.0h.8M293.3 266.6h.8M296.3 267.4h.8M311.3 266.6h.8M318.7 266.9h.8M302.9 266.5h.8M285.4 267.0h.8M305.5 267.0h.8M305.2 268.1h.8M295.9 265.9h.8M285.8 266.6h.8M310.4 266.7h.8M310.4 267.5h.8M290.8 266.1h.8M293.0 267.5h.8M312.2 267.2h.8M295.7 266.3h.8M308.7 267.3h.8M304.8 266.8h.8M317.4 266.3h.8M285.7 267.1h.8M293.9 266.5h.8M311.5 267.1h.8M309.3 267.1h.8M315.2 266.8h.8M305.7 266.9h.8M315.3 267.5h.8M299.1 267.1h.8M304.5 266.3h.8M310.7 267.3h.8M301.1 266.3h.8M302.6 267.5h.8M295.5 267.4h.8M307.0 265.6h.8M287.6 267.4h.8M305.6 267.0h.8M294.9 266.4h.8M313.5 267.2h.8M294.1 266.4h.8M303.8 267.3h.8M300.0 266.3h.8M303.4 267.1h.8M297.6 267.3h.8M300.4 266.8h.8M294.2 266.5h.8M286.1 266.7h.8M307.9 266.0h.8M296.0 266.3h.8M294.5 267.3h.8M309.9 267.0h.8M295.6 266.8h.8M287.1 267.0h.8M315.3 267.1h.8M307.1 267.3h.8M297.5 267.3h.8M303.6 266.9h.8M307.3 266.7h.8M402.2 209.0h.8M407.7 209.3h.8M407.8 210.1h.8M396.7 209.7h.8M395.9 207.7h.8M408.7 210.6h.8M388.3 210.1h.8M406.8 208.5h.8M390.7 207.9h.8M405.6 209.2h.8M410.5 208.5h.8M398.2 210.0h.8M388.7 209.6h.8M416.5 209.8h.8M385.1 209.3h.8M386.6 209.9h.8M409.7 208.3h.8M398.6 210.2h.8M412.4 208.4h.8M417.1 208.6h.8M407.5 209.6h.8M403.3 211.0h.8M419.4 208.5h.8M404.8 208.9h.8M392.3 209.1h.8M415.8 207.6h.8M420.0 209.6h.8M417.9 208.7h.8M415.4 208.9h.8M420.9 209.5h.8M408.4 208.3h.8M399.5 209.2h.8M413.8 209.5h.8M417.1 207.8h.8M419.3 207.8h.8M412.1 208.5h.8M419.7 209.6h.8M405.7 208.6h.8M395.3 206.6h.8M391.3 208.4h.8M399.0 209.1h.8M392.6 209.3h.8M401.8 209.3h.8M399.9 208.5h.8M407.9 208.7h.8M417.3 208.9h.8M391.1 209.1h.8M399.3 208.4h.8M400.8 209.6h.8M397.1 208.7h.8M389.6 208.3h.8M395.4 211.1h.8M405.1 208.8h.8M421.1 210.1h.8M413.3 210.2h.8M410.2 207.4h.8M400.0 209.3h.8M384.2 208.5h.8M419.3 209.5h.8M418.0 207.8h.8M399.6 209.7h.8M403.2 207.0h.8M414.3 210.2h.8M415.3 211.0h.8M415.0 208.6h.8M389.7 208.7h.8M400.7 209.0h.8M385.7 209.4h.8M414.5 209.0h.8M419.6 208.9h.8M388.8 207.5h.8M414.4 207.7h.8M410.3 208.3h.8M420.6 209.6h.8M390.9 209.1h.8M395.5 209.8h.8M400.9 209.0h.8M421.4 208.6h.8M394.4 209.0h.8M398.1 209.6h.8M398.2 208.8h.8M396.2 208.0h.8M404.6 210.1h.8M406.9 209.5h.8M413.8 208.7h.8M390.9 208.0h.8M404.8 208.4h.8M391.4 208.5h.8M416.0 207.8h.8M399.7 209.3h.8M378.2 195.2h.8M401.3 196.2h.8M422.3 195.3h.8M384.9 194.6h.8M422.7 194.8h.8M393.9 194.4h.8M398.6 196.0h.8M416.6 195.1h.8M412.0 195.8h.8M419.4 194.6h.8M395.8 195.4h.8M413.1 194.3h.8M407.2 195.4h.8M392.7 195.2h.8M382.3 195.4h.8M399.5 194.9h.8M382.6 193.4h.8M419.0 195.5h.8M414.4 195.1h.8M418.9 196.0h.8M408.3 193.2h.8M380.9 194.0h.8M391.7 194.6h.8M382.3 194.3h.8M412.0 193.6h.8M392.2 193.9h.8M377.6 193.5h.8M400.3 193.2h.8M415.0 195.4h.8M405.2 194.7h.8M396.9 194.6h.8M400.7 193.8h.8M391.0 194.5h.8M394.2 195.4h.8M401.3 194.7h.8M385.3 195.5h.8M418.2 194.2h.8M387.5 195.4h.8M389.7 194.6h.8M404.0 195.3h.8M292.4 175.2h.8M293.7 174.4h.8M293.3 174.0h.8M296.4 173.4h.8M298.3 172.4h.8M296.9 172.6h.8M296.4 172.9h.8M295.9 173.3h.8M291.4 174.5h.8M296.9 172.7h.8" stroke="#00d8d8" stroke-width="0.8" fill="none"/><path d="M475.0 174.9h.8M475.8 174.7h.8M474.9 175.0h.8M475.2 175.5h.8M476.4 175.2h.8M477.1 175.4h.8" stroke="#e0e000" stroke-width="0.8" fill="none"/></g><rect x="169.4" y="72.9" width="382.59999999999997" height="203.2" fill="none" stroke="#e8e8b6" stroke-width="1.05"/><g fill="none" stroke="#f0f0f0" stroke-width="0.7"><path d="M176.3 75.5h6.4l-3.2 7.2zM184 82.7h6.6l-3.3-7.2z"/><path d="M180.8 91v40.6M180.8 91.2h1.6M180.8 111.5h1.6M180.8 131.4h1.6"/><path d="M171 127.6v7.6l8.6-3.8z"/></g><text x="182" y="94.2" font-size="8.7" fill="#f4f4f4" text-anchor="start" >24 MPa P2P</text><text x="182" y="114.6" font-size="8.7" fill="#f4f4f4" text-anchor="start" >12</text><text x="182" y="134.4" font-size="8.7" fill="#f4f4f4" text-anchor="start" >0</text><text x="492.3" y="82.2" font-size="8.7" fill="#f4f4f4" text-anchor="start" >SG01</text><text x="494.6" y="92.90" font-size="8.7" fill="#00c000" text-anchor="start" xml:space="preserve">0 -  50% limit</text><text x="491.7" y="103.45" font-size="8.7" fill="#00c8c8" text-anchor="start" xml:space="preserve">50 -  75% limit</text><text x="491.7" y="114.00" font-size="8.7" fill="#d8d800" text-anchor="start" xml:space="preserve">75 - 100% limit</text><text x="491.7" y="124.55" font-size="8.7" fill="#e00000" text-anchor="start" xml:space="preserve">over 100% limit</text><text x="491.7" y="135.10" font-size="8.7" fill="#1010ff" text-anchor="start" xml:space="preserve">no limit</text><text x="354.3" y="66.8" font-size="9.35" fill="#f6f6e2" text-anchor="middle" >SG01</text><path d="M166.5 275.1L169 275.1" stroke="#e8e8b6" stroke-width="0.8"/><text transform="translate(166.2 278.25) scale(0.915 1)" font-size="8.7" fill="#f6f6e2" text-anchor="end" >0</text><path d="M166.5 241.70000000000002L169 241.70000000000002" stroke="#e8e8b6" stroke-width="0.8"/><text transform="translate(166.2 244.85) scale(0.915 1)" font-size="8.7" fill="#f6f6e2" text-anchor="end" >2000</text><path d="M166.5 208.3L169 208.3" stroke="#e8e8b6" stroke-width="0.8"/><text transform="translate(166.2 211.45) scale(0.915 1)" font-size="8.7" fill="#f6f6e2" text-anchor="end" >4000</text><path d="M166.5 174.90000000000003L169 174.90000000000003" stroke="#e8e8b6" stroke-width="0.8"/><text transform="translate(166.2 178.05) scale(0.915 1)" font-size="8.7" fill="#f6f6e2" text-anchor="end" >6000</text><path d="M166.5 141.50000000000003L169 141.50000000000003" stroke="#e8e8b6" stroke-width="0.8"/><text transform="translate(166.2 144.65) scale(0.915 1)" font-size="8.7" fill="#f6f6e2" text-anchor="end" >8000</text><path d="M166.5 108.10000000000002L169 108.10000000000002" stroke="#e8e8b6" stroke-width="0.8"/><text transform="translate(166.2 111.25) scale(0.915 1)" font-size="8.7" fill="#f6f6e2" text-anchor="end" >10000</text><path d="M166.5 74.70000000000002L169 74.70000000000002" stroke="#e8e8b6" stroke-width="0.8"/><text transform="translate(166.2 77.85) scale(0.915 1)" font-size="8.7" fill="#f6f6e2" text-anchor="end" >12000</text><path d="M240.8 276.5L240.8 278.8" stroke="#e8e8b6" stroke-width="0.8"/><text transform="translate(240.8 285.55) scale(0.915 1)" font-size="8.7" fill="#f6f6e2" text-anchor="middle" >6000</text><path d="M309.1 276.5L309.1 278.8" stroke="#e8e8b6" stroke-width="0.8"/><text transform="translate(309.1 285.55) scale(0.915 1)" font-size="8.7" fill="#f6f6e2" text-anchor="middle" >8000</text><path d="M377.4 276.5L377.4 278.8" stroke="#e8e8b6" stroke-width="0.8"/><text transform="translate(377.4 285.55) scale(0.915 1)" font-size="8.7" fill="#f6f6e2" text-anchor="middle" >10000</text><path d="M445.7 276.5L445.7 278.8" stroke="#e8e8b6" stroke-width="0.8"/><text transform="translate(445.7 285.55) scale(0.915 1)" font-size="8.7" fill="#f6f6e2" text-anchor="middle" >12000</text><path d="M514.0 276.5L514.0 278.8" stroke="#e8e8b6" stroke-width="0.8"/><text transform="translate(514.0 285.55) scale(0.915 1)" font-size="8.7" fill="#f6f6e2" text-anchor="middle" >14000</text><path d="M173.2 276.5L173.2 278.8" stroke="#e8e8b6" stroke-width="0.8"/><path d="M552.4 275.6L554 275.6" stroke="#e8e8b6" stroke-width="0.8"/><text transform="translate(554.3 278.75) scale(0.915 1)" font-size="8.7" fill="#f6f6e2" text-anchor="start" >0</text><path d="M552.4 254.55L554 254.55" stroke="#e8e8b6" stroke-width="0.8"/><text transform="translate(554.3 257.70) scale(0.915 1)" font-size="8.7" fill="#f6f6e2" text-anchor="start" >5</text><path d="M552.4 233.50000000000003L554 233.50000000000003" stroke="#e8e8b6" stroke-width="0.8"/><text transform="translate(554.3 236.65) scale(0.915 1)" font-size="8.7" fill="#f6f6e2" text-anchor="start" >10</text><path d="M552.4 212.45000000000002L554 212.45000000000002" stroke="#e8e8b6" stroke-width="0.8"/><text transform="translate(554.3 215.60) scale(0.915 1)" font-size="8.7" fill="#f6f6e2" text-anchor="start" >15</text><path d="M552.4 191.40000000000003L554 191.40000000000003" stroke="#e8e8b6" stroke-width="0.8"/><text transform="translate(554.3 194.55) scale(0.915 1)" font-size="8.7" fill="#f6f6e2" text-anchor="start" >20</text><path d="M552.4 170.35000000000002L554 170.35000000000002" stroke="#e8e8b6" stroke-width="0.8"/><text transform="translate(554.3 173.50) scale(0.915 1)" font-size="8.7" fill="#f6f6e2" text-anchor="start" >25</text><path d="M552.4 149.3L554 149.3" stroke="#e8e8b6" stroke-width="0.8"/><text transform="translate(554.3 152.45) scale(0.915 1)" font-size="8.7" fill="#f6f6e2" text-anchor="start" >30</text><path d="M552.4 128.25000000000003L554 128.25000000000003" stroke="#e8e8b6" stroke-width="0.8"/><text transform="translate(554.3 131.40) scale(0.915 1)" font-size="8.7" fill="#f6f6e2" text-anchor="start" >35</text><path d="M552.4 107.20000000000002L554 107.20000000000002" stroke="#e8e8b6" stroke-width="0.8"/><text transform="translate(554.3 110.35) scale(0.915 1)" font-size="8.7" fill="#f6f6e2" text-anchor="start" >40</text><path d="M552.4 86.15000000000003L554 86.15000000000003" stroke="#e8e8b6" stroke-width="0.8"/><text transform="translate(554.3 89.30) scale(0.915 1)" font-size="8.7" fill="#f6f6e2" text-anchor="start" >45</text><text transform="translate(141 167.5) rotate(-90) scale(0.915 1)" font-size="8.7" fill="#f6f6e2" text-anchor="middle">Hertz</text><text transform="translate(573.2 171.5) rotate(-90) scale(0.915 1)" font-size="8.7" fill="#f6f6e2" text-anchor="middle">Order</text><text transform="translate(361 295.45) scale(0.915 1)" font-size="8.7" fill="#f6f6e2" text-anchor="middle" >N1 RPM</text><path d="M603 274.1H1019.6M603 240.9H1019.6M603 207.6H1019.6M603 174.4H1019.6M603 141.1H1019.6M603 107.9H1019.6M603 74.6H1019.6M606.9 72.5V276.0M659.1 72.5V276.0M711.4 72.5V276.0M763.6 72.5V276.0M815.9 72.5V276.0M868.1 72.5V276.0M920.3 72.5V276.0M972.6 72.5V276.0" stroke="#000084" stroke-width="0.7" fill="none"/><path d="M606.9 174.4H615.6" stroke="#c80000" stroke-width="0.9"/><path d="M613.3 174.1v-3.4" stroke="#00b000" stroke-width="0.8"/><path d="M615.9 191.0H621.5" stroke="#c80000" stroke-width="0.9"/><path d="M618.9 190.7v-3.4" stroke="#00b000" stroke-width="0.8"/><path d="M622.3 207.6H643.2" stroke="#c80000" stroke-width="0.9"/><path d="M624.7 207.3v-3.4" stroke="#00b000" stroke-width="0.8"/><path d="M627.8 207.3v-3.4" stroke="#00b000" stroke-width="0.8"/><path d="M640.2 207.3v-3.4" stroke="#00b000" stroke-width="0.8"/><path d="M656.8 174.4H662.0" stroke="#c80000" stroke-width="0.9"/><path d="M659.9 174.1v-3.4" stroke="#00b000" stroke-width="0.8"/><path d="M665.0 207.6H670.1" stroke="#c80000" stroke-width="0.9"/><path d="M667.8 207.3v-3.4" stroke="#00b000" stroke-width="0.8"/><path d="M677.8 214.3H687.6" stroke="#c80000" stroke-width="0.9"/><path d="M683.2 214.0v-3.4" stroke="#00b000" stroke-width="0.8"/><path d="M689.8 227.6H744.9" stroke="#c80000" stroke-width="0.9"/><path d="M697.8 227.2v-3.4" stroke="#00b000" stroke-width="0.8"/><path d="M711.6 227.2v-3.4" stroke="#00b000" stroke-width="0.8"/><path d="M720.3 227.2v-3.4" stroke="#00b000" stroke-width="0.8"/><path d="M735.4 227.2v-3.4" stroke="#00b000" stroke-width="0.8"/><path d="M761.0 227.6H771.2" stroke="#c80000" stroke-width="0.9"/><path d="M766.6 227.2v-3.4" stroke="#00b000" stroke-width="0.8"/><path d="M606.9 204.3H615.6" stroke="#b4b400" stroke-width="1.0"/><path d="M613.3 204.0v-3.4" stroke="#00b000" stroke-width="0.8"/><path d="M615.9 215.6H621.5" stroke="#b4b400" stroke-width="1.0"/><path d="M618.9 215.3v-3.4" stroke="#00b000" stroke-width="0.8"/><path d="M621.8 227.6H625.3" stroke="#b4b400" stroke-width="1.0"/><path d="M624.7 227.2v-3.4" stroke="#00b000" stroke-width="0.8"/><path d="M626.1 220.9H635.6" stroke="#b4b400" stroke-width="1.3"/><path d="M627.8 220.6v-3.4" stroke="#00b000" stroke-width="0.8"/><path d="M636.0 227.6H643.2" stroke="#b4b400" stroke-width="1.0"/><path d="M640.2 227.2v-3.4" stroke="#00b000" stroke-width="0.8"/><path d="M656.8 187.7H662.0" stroke="#b4b400" stroke-width="1.0"/><path d="M659.9 187.4v-3.4" stroke="#00b000" stroke-width="0.8"/><path d="M665.0 214.3H670.1" stroke="#b4b400" stroke-width="1.0"/><path d="M667.8 214.0v-3.4" stroke="#00b000" stroke-width="0.8"/><path d="M677.8 227.6H687.6" stroke="#b4b400" stroke-width="1.0"/><path d="M683.2 227.2v-3.4" stroke="#00b000" stroke-width="0.8"/><path d="M689.8 241.5H703.4" stroke="#b4b400" stroke-width="1.0"/><path d="M697.8 241.2v-3.4" stroke="#00b000" stroke-width="0.8"/><path d="M703.4 240.9H744.9" stroke="#b4b400" stroke-width="1.3"/><path d="M711.6 240.6v-3.4" stroke="#00b000" stroke-width="0.8"/><path d="M720.3 240.6v-3.4" stroke="#00b000" stroke-width="0.8"/><path d="M735.4 240.6v-3.4" stroke="#00b000" stroke-width="0.8"/><path d="M761.0 240.9H771.2" stroke="#b4b400" stroke-width="1.3"/><path d="M766.6 240.6v-3.4" stroke="#00b000" stroke-width="0.8"/><clipPath id="c2"><rect x="603.8" y="73.3" width="415.0" height="201.9"/></clipPath><polyline clip-path="url(#c2)" points="606.9,274.1 608.3,273.3 609.8,272.4 611.2,269.8 612.6,270.1 614.1,269.0 615.5,270.0 617.0,267.4 618.4,265.6 619.8,265.4 621.3,261.4 622.7,261.6 624.1,264.3 625.6,269.0 627.0,269.2 628.4,268.7 629.9,269.5 631.3,268.6 632.8,268.5 634.2,267.4 635.6,268.6 637.1,270.9 638.5,269.8 639.9,271.9 641.4,270.6 642.8,270.7 644.3,267.7 645.7,262.2 647.1,265.1 648.6,269.0 650.0,269.3 651.4,270.2 652.9,271.9 654.3,270.1 655.7,271.2 657.2,270.6 658.6,270.6 660.1,267.0 661.5,268.3 662.9,269.3 664.4,270.2 665.8,271.9 667.2,271.8 668.7,272.3 670.1,272.4 671.5,272.6 673.0,272.0 674.4,271.2 675.9,272.8 677.3,271.0 678.7,271.9 680.2,272.0 681.6,270.7 683.0,271.6 684.5,272.0 685.9,271.6 687.3,271.0 688.8,272.7 690.2,270.3 691.7,272.8 693.1,270.9 694.5,270.7 696.0,272.9 697.4,270.8 698.8,272.0 700.3,271.0 701.7,270.8 703.2,268.3 704.6,268.6 706.0,267.6 707.5,266.8 708.9,260.3 710.3,258.0 711.8,261.6 713.2,268.3 714.6,271.1 716.1,271.5 717.5,271.0 719.0,272.8 720.4,271.1 721.8,271.0 723.3,270.8 724.7,273.0 726.1,270.6 727.6,272.9 729.0,272.3 730.4,271.6 731.9,270.7 733.3,271.6 734.8,263.5 736.2,247.2 737.6,243.9 739.1,261.1 740.5,271.1 741.9,272.2 743.4,270.6 744.8,267.6 746.3,267.1 747.7,271.1 749.1,272.7 750.6,270.6 752.0,271.6 753.4,271.1 754.9,269.9 756.3,267.4 757.7,266.7 759.2,268.5 760.6,267.7 762.1,266.7 763.5,266.3 764.9,272.0 766.4,272.0 767.8,271.2 769.2,273.1 770.7,271.5 772.1,270.9 773.5,271.8 775.0,271.4 776.4,273.2 777.9,272.4 779.3,273.1 780.7,271.1 782.2,272.4 783.6,271.5 785.0,269.4 786.5,269.4 787.9,269.1 789.3,270.9 790.8,271.5 792.2,271.3 793.7,272.2 795.1,272.8 796.5,272.6 798.0,273.3 799.4,272.7 800.8,271.0 802.3,271.1 803.7,272.0 805.2,272.4 806.6,272.8 808.0,273.5 809.5,273.0 810.9,271.7 812.3,271.5 813.8,272.8 815.2,271.7 816.6,271.7 818.1,271.9 819.5,269.8 821.0,262.6 822.4,269.4 823.8,271.7 825.3,271.8 826.7,268.7 828.1,267.4 829.6,270.1 831.0,272.8 832.4,271.4 833.9,272.2 835.3,272.4 836.8,273.9 838.2,271.7 839.6,263.7 841.1,257.0 842.5,269.5 843.9,271.7 845.4,272.2 846.8,271.8 848.2,273.0 849.7,272.3 851.1,272.0 852.6,271.8 854.0,273.0 855.4,271.7 856.9,271.7 858.3,272.1 859.7,271.4 861.2,271.4 862.6,272.6 864.1,272.6 865.5,273.5 866.9,271.7 868.4,271.5 869.8,272.7 871.2,272.0 872.7,271.7 874.1,270.8 875.5,271.0 877.0,268.6 878.4,269.5 879.9,270.5 881.3,272.2 882.7,272.2 884.2,271.9 885.6,272.3 887.0,272.0 888.5,273.9 889.9,273.4 891.3,272.2 892.8,270.8 894.2,271.4 895.7,270.7 897.1,271.7 898.5,273.7 900.0,272.7 901.4,273.4 902.8,273.8 904.3,273.6 905.7,273.1 907.1,273.5 908.6,273.4 910.0,273.8 911.5,272.6 912.9,272.7 914.3,271.8 915.8,271.5 917.2,271.9 918.6,269.8 920.1,272.0 921.5,271.0 923.0,271.7 924.4,271.8 925.8,273.0 927.3,271.4 928.7,272.8 930.1,273.8 931.6,272.3 933.0,273.7 934.4,272.5 935.9,273.1 937.3,272.4 938.8,271.4 940.2,271.8 941.6,272.8 943.1,271.8 944.5,272.2 945.9,272.8 947.4,273.2 948.8,271.7 950.2,271.4 951.7,269.9 953.1,269.5 954.6,270.4 956.0,271.2 957.4,270.2 958.9,273.0 960.3,273.1 961.7,272.2 963.2,272.2 964.6,273.6 966.0,272.3 967.5,271.6 968.9,273.0 970.4,272.8 971.8,273.4 973.2,273.2 974.7,271.4 976.1,273.0 977.5,271.4 979.0,271.5 980.4,272.4 981.9,273.3 983.3,271.4 984.7,272.6 986.2,272.9 987.6,273.1 989.0,271.3 990.5,272.7 991.9,273.2 993.3,272.7 994.8,273.6 996.2,272.3 997.7,272.8 999.1,273.0 1000.5,270.2 1002.0,266.9 1003.4,269.8 1004.8,271.5 1006.3,273.2 1007.7,271.5 1009.1,271.9 1010.6,273.3 1012.0,273.3 1013.5,273.6 1014.9,271.3 1016.3,273.2 1017.8,272.3 1019.2,272.7 1020.6,272.3" fill="none" stroke="#00c400" stroke-width="0.9" stroke-linejoin="round"/><rect x="603.4" y="72.9" width="415.8" height="202.7" fill="none" stroke="#e8e8b6" stroke-width="1.05"/><text x="798.3" y="66.8" font-size="9.35" fill="#f6f6e2" text-anchor="middle" >SG01</text><path d="M600.5 274.1L603 274.1" stroke="#e8e8b6" stroke-width="0.8"/><text transform="translate(600.2 277.25) scale(0.915 1)" font-size="8.7" fill="#f6f6e2" text-anchor="end" >0</text><path d="M600.5 240.85000000000002L603 240.85000000000002" stroke="#e8e8b6" stroke-width="0.8"/><text transform="translate(600.2 244.00) scale(0.915 1)" font-size="8.7" fill="#f6f6e2" text-anchor="end" >0.5</text><path d="M600.5 207.60000000000002L603 207.60000000000002" stroke="#e8e8b6" stroke-width="0.8"/><text transform="translate(600.2 210.75) scale(0.915 1)" font-size="8.7" fill="#f6f6e2" text-anchor="end" >1.0</text><path d="M600.5 174.35000000000002L603 174.35000000000002" stroke="#e8e8b6" stroke-width="0.8"/><text transform="translate(600.2 177.50) scale(0.915 1)" font-size="8.7" fill="#f6f6e2" text-anchor="end" >1.5</text><path d="M600.5 141.10000000000002L603 141.10000000000002" stroke="#e8e8b6" stroke-width="0.8"/><text transform="translate(600.2 144.25) scale(0.915 1)" font-size="8.7" fill="#f6f6e2" text-anchor="end" >2.0</text><path d="M600.5 107.85000000000002L603 107.85000000000002" stroke="#e8e8b6" stroke-width="0.8"/><text transform="translate(600.2 111.00) scale(0.915 1)" font-size="8.7" fill="#f6f6e2" text-anchor="end" >2.5</text><path d="M600.5 74.60000000000002L603 74.60000000000002" stroke="#e8e8b6" stroke-width="0.8"/><text transform="translate(600.2 77.75) scale(0.915 1)" font-size="8.7" fill="#f6f6e2" text-anchor="end" >3.0</text><path d="M606.9 276L606.9 278.4" stroke="#e8e8b6" stroke-width="0.8"/><text transform="translate(606.9 285.55) scale(0.915 1)" font-size="8.7" fill="#f6f6e2" text-anchor="middle" >0</text><path d="M659.14 276L659.14 278.4" stroke="#e8e8b6" stroke-width="0.8"/><text transform="translate(659.14 285.55) scale(0.915 1)" font-size="8.7" fill="#f6f6e2" text-anchor="middle" >2000</text><path d="M711.38 276L711.38 278.4" stroke="#e8e8b6" stroke-width="0.8"/><text transform="translate(711.38 285.55) scale(0.915 1)" font-size="8.7" fill="#f6f6e2" text-anchor="middle" >4000</text><path d="M763.62 276L763.62 278.4" stroke="#e8e8b6" stroke-width="0.8"/><text transform="translate(763.62 285.55) scale(0.915 1)" font-size="8.7" fill="#f6f6e2" text-anchor="middle" >6000</text><path d="M815.86 276L815.86 278.4" stroke="#e8e8b6" stroke-width="0.8"/><text transform="translate(815.86 285.55) scale(0.915 1)" font-size="8.7" fill="#f6f6e2" text-anchor="middle" >8000</text><path d="M868.0999999999999 276L868.0999999999999 278.4" stroke="#e8e8b6" stroke-width="0.8"/><text transform="translate(868.0999999999999 285.55) scale(0.915 1)" font-size="8.7" fill="#f6f6e2" text-anchor="middle" >10000</text><path d="M920.3399999999999 276L920.3399999999999 278.4" stroke="#e8e8b6" stroke-width="0.8"/><text transform="translate(920.3399999999999 285.55) scale(0.915 1)" font-size="8.7" fill="#f6f6e2" text-anchor="middle" >12000</text><path d="M972.5799999999999 276L972.5799999999999 278.4" stroke="#e8e8b6" stroke-width="0.8"/><text transform="translate(972.5799999999999 285.55) scale(0.915 1)" font-size="8.7" fill="#f6f6e2" text-anchor="middle" >14000</text><text transform="translate(586.3 176) rotate(-90) scale(0.915 1)" font-size="8.7" fill="#f6f6e2" text-anchor="middle">MPa P2P</text><text transform="translate(810.4 295.45) scale(0.915 1)" font-size="8.7" fill="#f6f6e2" text-anchor="middle" >Hertz</text><path d="M155 516.8H573.8M155 495.4H573.8M155 474.0H573.8M155 452.6H573.8M155 431.2H573.8M155 409.8H573.8M155 388.4H573.8M155 367.0H573.8M155 345.6H573.8M155 324.2H573.8M159.4 315V519.5M241.5 315V519.5M323.6 315V519.5M405.7 315V519.5M487.8 315V519.5M569.9 315V519.5" stroke="#000084" stroke-width="0.7" fill="none"/><clipPath id="c3"><rect x="155.8" y="315.8" width="417.19999999999993" height="203.3"/></clipPath><polyline clip-path="url(#c3)" points="155.0,516.8 157.6,516.8 158.9,516.8 161.6,481.3 164.3,516.8 168.4,516.8 171.1,483.8 173.6,515.7 175.3,474.0 176.5,471.9 178.7,516.8 184.3,516.8 186.3,474.0 187.5,471.9 189.7,516.8 192.1,516.8 194.1,471.9 195.3,469.7 197.5,516.8 198.4,516.8 200.4,471.9 201.6,469.7 203.9,515.7 206.8,478.3 209.5,516.8 211.6,516.8 213.6,469.7 214.8,467.6 216.6,515.7 218.1,470.6 219.3,468.4 221.2,515.7 223.5,480.0 226.1,515.7 227.9,477.4 229.1,475.3 231.6,515.7 233.8,472.7 235.0,470.6 237.2,516.8 240.8,516.8 242.8,477.4 244.0,475.3 246.2,516.8 247.5,516.8 250.2,480.8 252.9,516.8 255.1,516.8 257.1,477.0 258.3,474.9 260.1,515.7 262.4,478.3 265.1,516.8 266.7,516.8 268.7,474.4 269.9,472.3 272.1,516.8 274.0,516.8 276.7,480.0 279.4,516.8 280.9,516.8 282.9,476.6 284.1,474.4 286.0,515.7 287.7,477.9 288.9,475.7 291.1,516.8 293.1,516.8 295.1,475.7 296.3,473.6 298.5,516.8 303.1,516.8 305.1,475.3 306.3,473.1 308.5,516.8 310.0,516.8 312.7,482.1 315.0,515.7 317.4,484.7 320.1,516.8 322.1,516.8 324.1,469.3 325.3,467.2 327.5,516.8 333.0,516.8 335.7,480.0 338.4,516.8 341.5,516.8 344.2,477.4 346.9,516.8 352.5,516.8 354.5,475.1 355.7,472.9 357.9,516.8 360.1,516.8 362.1,474.4 363.3,472.3 365.5,516.8 367.1,516.8 369.8,477.9 372.4,515.7 374.2,472.3 375.4,470.1 377.2,515.7 379.5,484.3 382.2,515.7 384.9,483.4 387.2,515.7 389.5,486.4 392.2,516.8 394.1,516.8 396.8,484.7 399.6,515.7 402.5,486.8 405.2,516.8 406.2,516.8 408.9,484.3 411.2,515.7 413.5,486.4 415.9,515.7 418.3,485.6 420.6,515.7 423.0,484.3 425.3,515.7 427.6,480.8 430.3,516.8 433.1,516.8 435.8,485.1 438.5,516.8 442.0,516.8 444.7,488.1 447.1,515.7 449.5,484.7 451.9,515.7 454.3,480.8 456.6,515.7 458.9,483.4 461.2,515.7 463.6,493.7 466.7,515.7 469.8,489.0 472.2,516.8 473.3,516.8 475.2,331.9 476.2,388.4 477.6,516.8 479.5,516.8 481.5,388.4 483.0,330.6 484.0,362.7 485.2,397.0 487.0,516.8 488.0,516.8 490.0,371.3 491.5,465.4 492.8,516.8 493.8,499.7 495.0,405.5 496.3,474.0 497.6,508.2 499.6,439.8 501.0,486.8 502.5,514.7 505.0,476.1 508.5,501.8 509.5,499.7 512.0,482.6 516.0,510.4 518.5,506.1 522.0,516.8 526.0,508.2 529.0,495.4 532.5,516.8 533.5,516.8 536.0,499.7 539.0,516.8 574.0,516.8" fill="none" stroke="#00ba00" stroke-width="1.0" stroke-linejoin="round"/><rect x="155.4" y="315.4" width="417.99999999999994" height="203.7" fill="none" stroke="#e8e8b6" stroke-width="1.05"/><text x="353.6" y="310.1" font-size="9.35" fill="#f6f6e2" text-anchor="middle" >SG01:%Limit.1B - History</text><path d="M153 516.8L155 516.8" stroke="#e8e8b6" stroke-width="0.8"/><text transform="translate(153 519.55) scale(0.915 1)" font-size="8.7" fill="#f6f6e2" text-anchor="end" >0</text><path d="M153 495.4L155 495.4" stroke="#e8e8b6" stroke-width="0.8"/><text transform="translate(153 498.15) scale(0.915 1)" font-size="8.7" fill="#f6f6e2" text-anchor="end" >5</text><path d="M153 473.99999999999994L155 473.99999999999994" stroke="#e8e8b6" stroke-width="0.8"/><text transform="translate(153 476.75) scale(0.915 1)" font-size="8.7" fill="#f6f6e2" text-anchor="end" >10</text><path d="M153 452.59999999999997L155 452.59999999999997" stroke="#e8e8b6" stroke-width="0.8"/><text transform="translate(153 455.35) scale(0.915 1)" font-size="8.7" fill="#f6f6e2" text-anchor="end" >15</text><path d="M153 431.19999999999993L155 431.19999999999993" stroke="#e8e8b6" stroke-width="0.8"/><text transform="translate(153 433.95) scale(0.915 1)" font-size="8.7" fill="#f6f6e2" text-anchor="end" >20</text><path d="M153 409.79999999999995L155 409.79999999999995" stroke="#e8e8b6" stroke-width="0.8"/><text transform="translate(153 412.55) scale(0.915 1)" font-size="8.7" fill="#f6f6e2" text-anchor="end" >25</text><path d="M153 388.4L155 388.4" stroke="#e8e8b6" stroke-width="0.8"/><text transform="translate(153 391.15) scale(0.915 1)" font-size="8.7" fill="#f6f6e2" text-anchor="end" >30</text><path d="M153 366.99999999999994L155 366.99999999999994" stroke="#e8e8b6" stroke-width="0.8"/><text transform="translate(153 369.75) scale(0.915 1)" font-size="8.7" fill="#f6f6e2" text-anchor="end" >35</text><path d="M153 345.5999999999999L155 345.5999999999999" stroke="#e8e8b6" stroke-width="0.8"/><text transform="translate(153 348.35) scale(0.915 1)" font-size="8.7" fill="#f6f6e2" text-anchor="end" >40</text><path d="M153 324.19999999999993L155 324.19999999999993" stroke="#e8e8b6" stroke-width="0.8"/><text transform="translate(153 326.95) scale(0.915 1)" font-size="8.7" fill="#f6f6e2" text-anchor="end" >45</text><path d="M159.39999999999998 519.5L159.39999999999998 521.9" stroke="#e8e8b6" stroke-width="0.8"/><path d="M241.5 519.5L241.5 521.9" stroke="#e8e8b6" stroke-width="0.8"/><text transform="translate(241.1 528.85) scale(0.915 1)" font-size="8.7" fill="#f6f6e2" text-anchor="middle" >-190</text><path d="M323.6 519.5L323.6 521.9" stroke="#e8e8b6" stroke-width="0.8"/><text transform="translate(323.20000000000005 528.85) scale(0.915 1)" font-size="8.7" fill="#f6f6e2" text-anchor="middle" >-180</text><path d="M405.7 519.5L405.7 521.9" stroke="#e8e8b6" stroke-width="0.8"/><text transform="translate(405.3 528.85) scale(0.915 1)" font-size="8.7" fill="#f6f6e2" text-anchor="middle" >-170</text><path d="M487.8 519.5L487.8 521.9" stroke="#e8e8b6" stroke-width="0.8"/><text transform="translate(487.40000000000003 528.85) scale(0.915 1)" font-size="8.7" fill="#f6f6e2" text-anchor="middle" >-160</text><path d="M569.9 519.5L569.9 521.9" stroke="#e8e8b6" stroke-width="0.8"/><text transform="translate(141 417) rotate(-90) scale(0.915 1)" font-size="8.7" fill="#f6f6e2" text-anchor="middle">%</text><text transform="translate(363.5 539.05) scale(0.915 1)" font-size="8.7" fill="#f6f6e2" text-anchor="middle" >Seconds</text><path d="M600.6 515.3H1019.6M600.6 493.1H1019.6M600.6 470.9H1019.6M600.6 448.7H1019.6M600.6 426.5H1019.6M600.6 404.3H1019.6M600.6 382.1H1019.6M600.6 359.9H1019.6M600.6 337.7H1019.6M604.1 315V519.5M686.5 315V519.5M768.8 315V519.5M851.1 315V519.5M933.5 315V519.5M1015.9 315V519.5" stroke="#000084" stroke-width="0.7" fill="none"/><clipPath id="c4"><rect x="601.4" y="315.8" width="417.4" height="203.3"/></clipPath><polyline clip-path="url(#c4)" points="601.0,470.9 602.0,438.7 604.2,496.2 606.6,426.5 608.7,489.1 611.4,446.5 614.0,489.1 617.6,429.8 619.0,435.4 621.0,489.1 622.5,487.5 625.8,412.1 628.0,417.6 631.0,491.8 632.5,486.4 635.5,403.2 637.7,488.7 640.2,409.8 642.7,488.0 645.0,399.9 647.4,486.0 650.0,386.5 652.0,404.3 656.7,498.2 659.0,459.8 661.8,401.4 664.3,488.0 666.5,416.5 669.0,514.6 671.5,408.1 674.2,514.6 676.0,432.0 678.7,487.1 681.0,423.6 683.0,448.7 686.0,488.7 688.0,423.2 690.0,462.0 692.7,392.1 694.5,408.7 697.8,477.6 700.3,430.9 703.0,491.3 705.0,427.2 707.3,480.7 709.8,419.0 712.3,491.3 714.5,486.4 717.4,413.8 720.0,473.1 722.0,448.7 724.0,401.4 727.7,482.7 729.5,426.5 731.4,342.1 732.5,382.1 734.3,485.8 736.5,415.4 738.6,377.7 741.5,514.6 743.5,448.7 745.8,377.7 748.3,467.3 750.8,391.9 752.5,408.7 756.0,488.7 759.0,426.5 762.3,382.1 764.8,473.1 767.4,387.6 770.0,485.8 772.6,418.7 775.0,493.5 779.2,413.2 781.9,476.4 785.4,409.4 787.5,415.4 790.0,488.0 794.6,413.4 797.0,426.5 800.8,483.8 803.5,385.0 806.2,487.5 810.7,393.2 813.4,491.5 815.4,398.3 818.5,482.2 822.6,411.6 825.1,474.0 828.2,417.6 830.5,430.9 834.0,484.2 837.5,422.9 840.0,475.3 844.3,405.4 847.0,483.3 849.4,424.3 854.0,482.2 856.6,409.6 859.0,465.8 861.4,422.1 863.8,462.0 865.9,411.6 868.6,478.2 871.0,387.9 873.0,408.7 875.8,468.7 878.2,406.5 880.3,459.8 882.8,407.0 885.4,464.7 888.0,426.5 890.6,390.5 892.5,399.9 895.3,436.9 897.8,387.9 900.3,423.6 905.0,383.9 907.2,413.2 909.5,379.2 912.2,405.4 916.7,366.6 918.5,377.7 921.5,515.3 923.0,515.3 926.0,380.8 927.3,393.2 928.7,515.3 931.4,411.0 934.0,515.3 936.0,515.3 938.4,431.8 940.5,453.1 943.0,515.3 945.5,515.3 948.2,472.0 952.4,508.6 955.4,498.6 958.5,515.3 963.0,490.2 965.3,508.6 968.8,474.2 973.0,510.4 975.0,508.6 979.0,452.5 980.5,462.0 982.8,515.3 986.7,451.4 988.5,459.8 991.5,515.3 993.5,448.9 996.0,515.3 998.7,453.4 1001.4,515.3 1005.3,453.4 1008.0,515.3 1011.0,456.5 1013.0,466.5 1016.0,515.3 1017.5,515.3 1019.0,493.1" fill="none" stroke="#00ba00" stroke-width="1.0" stroke-linejoin="round"/><rect x="601.0" y="315.4" width="418.2" height="203.7" fill="none" stroke="#e8e8b6" stroke-width="1.05"/><text x="798.8" y="310.1" font-size="9.35" fill="#f6f6e2" text-anchor="middle" >SG01:%Limit.1T - History</text><path d="M598.6 515.3L600.6 515.3" stroke="#e8e8b6" stroke-width="0.8"/><text transform="translate(598.6 518.05) scale(0.915 1)" font-size="8.7" fill="#f6f6e2" text-anchor="end" >0</text><path d="M598.6 493.09999999999997L600.6 493.09999999999997" stroke="#e8e8b6" stroke-width="0.8"/><text transform="translate(598.6 495.85) scale(0.915 1)" font-size="8.7" fill="#f6f6e2" text-anchor="end" >10</text><path d="M598.6 470.9L600.6 470.9" stroke="#e8e8b6" stroke-width="0.8"/><text transform="translate(598.6 473.65) scale(0.915 1)" font-size="8.7" fill="#f6f6e2" text-anchor="end" >20</text><path d="M598.6 448.69999999999993L600.6 448.69999999999993" stroke="#e8e8b6" stroke-width="0.8"/><text transform="translate(598.6 451.45) scale(0.915 1)" font-size="8.7" fill="#f6f6e2" text-anchor="end" >30</text><path d="M598.6 426.49999999999994L600.6 426.49999999999994" stroke="#e8e8b6" stroke-width="0.8"/><text transform="translate(598.6 429.25) scale(0.915 1)" font-size="8.7" fill="#f6f6e2" text-anchor="end" >40</text><path d="M598.6 404.29999999999995L600.6 404.29999999999995" stroke="#e8e8b6" stroke-width="0.8"/><text transform="translate(598.6 407.05) scale(0.915 1)" font-size="8.7" fill="#f6f6e2" text-anchor="end" >50</text><path d="M598.6 382.0999999999999L600.6 382.0999999999999" stroke="#e8e8b6" stroke-width="0.8"/><text transform="translate(598.6 384.85) scale(0.915 1)" font-size="8.7" fill="#f6f6e2" text-anchor="end" >60</text><path d="M598.6 359.9L600.6 359.9" stroke="#e8e8b6" stroke-width="0.8"/><text transform="translate(598.6 362.65) scale(0.915 1)" font-size="8.7" fill="#f6f6e2" text-anchor="end" >70</text><path d="M598.6 337.69999999999993L600.6 337.69999999999993" stroke="#e8e8b6" stroke-width="0.8"/><text transform="translate(598.6 340.45) scale(0.915 1)" font-size="8.7" fill="#f6f6e2" text-anchor="end" >80</text><path d="M604.1 519.5L604.1 521.9" stroke="#e8e8b6" stroke-width="0.8"/><path d="M686.45 519.5L686.45 521.9" stroke="#e8e8b6" stroke-width="0.8"/><text transform="translate(686.0500000000001 528.85) scale(0.915 1)" font-size="8.7" fill="#f6f6e2" text-anchor="middle" >-190</text><path d="M768.8 519.5L768.8 521.9" stroke="#e8e8b6" stroke-width="0.8"/><text transform="translate(768.4 528.85) scale(0.915 1)" font-size="8.7" fill="#f6f6e2" text-anchor="middle" >-180</text><path d="M851.15 519.5L851.15 521.9" stroke="#e8e8b6" stroke-width="0.8"/><text transform="translate(850.75 528.85) scale(0.915 1)" font-size="8.7" fill="#f6f6e2" text-anchor="middle" >-170</text><path d="M933.5 519.5L933.5 521.9" stroke="#e8e8b6" stroke-width="0.8"/><text transform="translate(933.1 528.85) scale(0.915 1)" font-size="8.7" fill="#f6f6e2" text-anchor="middle" >-160</text><path d="M1015.85 519.5L1015.85 521.9" stroke="#e8e8b6" stroke-width="0.8"/><text transform="translate(586 417) rotate(-90) scale(0.915 1)" font-size="8.7" fill="#f6f6e2" text-anchor="middle">%</text><text transform="translate(809.7 539.05) scale(0.915 1)" font-size="8.7" fill="#f6f6e2" text-anchor="middle" >Seconds</text></svg>
</body></html>
